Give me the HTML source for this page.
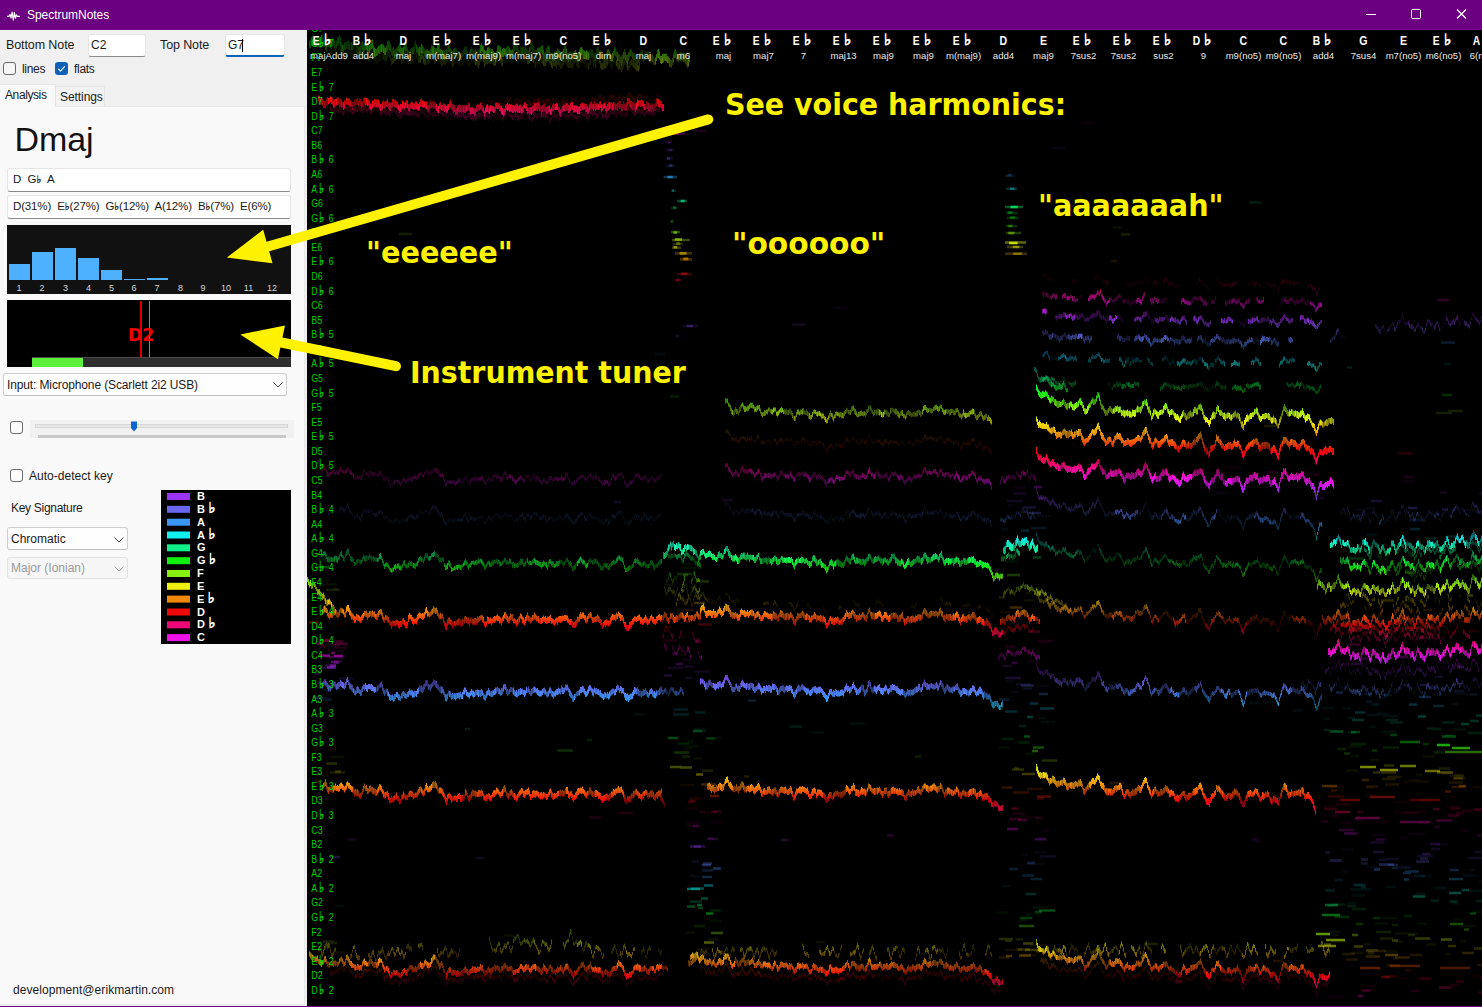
<!DOCTYPE html>
<html lang="en">
<head>
<meta charset="utf-8">
<title>SpectrumNotes</title>
<style>
*{box-sizing:border-box;margin:0;padding:0}
html,body{width:1482px;height:1007px;overflow:hidden;background:#000}
body{position:relative;font-family:"Liberation Sans","DejaVu Sans",sans-serif;font-size:12px;color:#111}
.abs{position:absolute}
#titlebar{left:0;top:0;width:1482px;height:30px;background:#6b0080}
#title{left:27px;top:8px;color:#fff;font-size:12px;line-height:15px;letter-spacing:-0.04px}
#left{left:0;top:30px;width:307px;height:977px;background:#f0f0f0}
#tabbody{left:0;top:106px;width:305px;height:899px;background:#f9f9f9;border-top:1px solid #e8e8e8;border-right:1px solid #e8e8e8;border-bottom:1px solid #e5e5e5}
.lbl{white-space:nowrap;line-height:14px;font-size:12px;color:#1a1a1a}
.tb{background:#fff;border:1px solid #e6e6e6;border-bottom:1px solid #8a8a8a;border-radius:3px}
.tb span{position:absolute;left:2px;top:3px;font-size:12px;line-height:14px;white-space:nowrap;color:#1a1a1a}
.cb{width:13px;height:13px;border:1px solid #6a6a6a;border-radius:3px;background:#f6f6f6}
.cbon{width:13px;height:13px;border-radius:3px;background:#0f62b8}
.dd{background:#fefefe;border:1px solid #cfcfcf;border-bottom-color:#c0c0c0;border-radius:3px}
.dd span{position:absolute;left:3px;top:3px;font-size:12px;line-height:14px;white-space:nowrap;color:#1a1a1a}
.ann{color:#fff200;font-family:"DejaVu Sans Condensed","DejaVu Sans","Liberation Sans",sans-serif;font-weight:bold;font-size:30px;line-height:36px;white-space:nowrap;transform-origin:0 0}
#bottomline{left:0;top:1006px;width:1482px;height:1px;background:#6b0080}
</style>
</head>
<body>
<svg class="abs" style="left:307px;top:30px" width="1175" height="977" viewBox="307 30 1175 977">
<rect x="307" y="30" width="1175" height="977" fill="#000"/>
<defs><linearGradient id="hue" gradientUnits="userSpaceOnUse" x1="0" y1="0" x2="0" y2="1007"><stop offset="-0.0008" stop-color="#3a95f5"/><stop offset="0.0136" stop-color="#10f0f0"/><stop offset="0.0281" stop-color="#10f088"/><stop offset="0.0426" stop-color="#10f010"/><stop offset="0.0570" stop-color="#88f010"/><stop offset="0.0715" stop-color="#f0f010"/><stop offset="0.0860" stop-color="#f08808"/><stop offset="0.1004" stop-color="#f00808"/><stop offset="0.1149" stop-color="#f00878"/><stop offset="0.1294" stop-color="#f010e8"/><stop offset="0.1438" stop-color="#9a35f5"/><stop offset="0.1583" stop-color="#6a66f0"/><stop offset="0.1728" stop-color="#3a95f5"/><stop offset="0.1873" stop-color="#10f0f0"/><stop offset="0.2017" stop-color="#10f088"/><stop offset="0.2162" stop-color="#10f010"/><stop offset="0.2307" stop-color="#88f010"/><stop offset="0.2451" stop-color="#f0f010"/><stop offset="0.2596" stop-color="#f08808"/><stop offset="0.2741" stop-color="#f00808"/><stop offset="0.2885" stop-color="#f00878"/><stop offset="0.3030" stop-color="#f010e8"/><stop offset="0.3175" stop-color="#9a35f5"/><stop offset="0.3320" stop-color="#6a66f0"/><stop offset="0.3464" stop-color="#3a95f5"/><stop offset="0.3609" stop-color="#10f0f0"/><stop offset="0.3754" stop-color="#10f088"/><stop offset="0.3898" stop-color="#10f010"/><stop offset="0.4043" stop-color="#88f010"/><stop offset="0.4188" stop-color="#f0f010"/><stop offset="0.4332" stop-color="#f08808"/><stop offset="0.4477" stop-color="#f00808"/><stop offset="0.4622" stop-color="#f00878"/><stop offset="0.4767" stop-color="#f010e8"/><stop offset="0.4911" stop-color="#9a35f5"/><stop offset="0.5056" stop-color="#6a66f0"/><stop offset="0.5201" stop-color="#3a95f5"/><stop offset="0.5345" stop-color="#10f0f0"/><stop offset="0.5490" stop-color="#10f088"/><stop offset="0.5635" stop-color="#10f010"/><stop offset="0.5779" stop-color="#88f010"/><stop offset="0.5924" stop-color="#f0f010"/><stop offset="0.6069" stop-color="#f08808"/><stop offset="0.6213" stop-color="#f00808"/><stop offset="0.6358" stop-color="#f00878"/><stop offset="0.6503" stop-color="#f010e8"/><stop offset="0.6648" stop-color="#9a35f5"/><stop offset="0.6792" stop-color="#6a66f0"/><stop offset="0.6937" stop-color="#3a95f5"/><stop offset="0.7082" stop-color="#10f0f0"/><stop offset="0.7226" stop-color="#10f088"/><stop offset="0.7371" stop-color="#10f010"/><stop offset="0.7516" stop-color="#88f010"/><stop offset="0.7660" stop-color="#f0f010"/><stop offset="0.7805" stop-color="#f08808"/><stop offset="0.7950" stop-color="#f00808"/><stop offset="0.8095" stop-color="#f00878"/><stop offset="0.8239" stop-color="#f010e8"/><stop offset="0.8384" stop-color="#9a35f5"/><stop offset="0.8529" stop-color="#6a66f0"/><stop offset="0.8673" stop-color="#3a95f5"/><stop offset="0.8818" stop-color="#10f0f0"/><stop offset="0.8963" stop-color="#10f088"/><stop offset="0.9107" stop-color="#10f010"/><stop offset="0.9252" stop-color="#88f010"/><stop offset="0.9397" stop-color="#f0f010"/><stop offset="0.9542" stop-color="#f08808"/><stop offset="0.9686" stop-color="#f00808"/><stop offset="0.9831" stop-color="#f00878"/><stop offset="0.9976" stop-color="#f010e8"/><stop offset="1.0120" stop-color="#9a35f5"/></linearGradient></defs>
<g fill="none" stroke="url(#hue)" stroke-width="1.08"><path d="M324.5 505.5v3m2-0.5v3m1-1v4m3-466.5v7m1-6.5v6m0 456.5v2m1-463.5v6m0 455.5v3m1-466.5v7m0 456v4m1-464.5v6m0 454.5v2m1-461v7m0 450.5v4m1-462v7m0 452.5v3m1-465v8m0 454.5v2m1-467.5v7m0 458v4m1-470v8m0 456v4m2-461v7m2-6.5v6m1-8v8m2-8v8m1-8.5v8m1-7.5v6m1-6.5v6m1-6v7m1-5.5v8m1-7v8m0 453.5v4m1-467v7m0 457.5v3m0 456v3m1-930v8m1-9v7m0 462.5v3m3-2.5v2m6-8.5v2m3-1v3m2-459.5v8m0 448.5v3m1-461v6m0 450.5v4m1-463v8m1-8.5v6m1 458v3m2-458.5v6m1-6v7m1-7.5v7m1-10.5v8m1-7v7m1-6.5v6m1-6.5v6m1-8.5v8m2 456v4m1-4v4m1-5v3m1-2.5v3m1 0v3m1-2.5v4m1-3.5v4m1-3.5v3m1-3v3m1-3.5v4m1-5.5v4m1 456.5v3m1-462.5v2m1-1.5v3m0 456.5v3m1-462.5v4m1-3.5v4m1-3v4m1-6v3m1-3.5v3m1-3.5v3m1-2v3m1-2.5v3m4-466.5v7m2-6.5v8m2-9v7m1-8.5v7m0 916.5v4m1-929.5v7m0 919v3m2-927v7m1 453.5v3m1-7v4m1-4.5v3m1-1.5v3m1-3v4m1-4v3m1-4v2m1-3.5v4m1-455v8m0 444v2m1-1v3m1-1v2m1-2v3m1-461.5v7m5-4v7m12 455.5v2m1-3v4m1-5v3m1-2.5v3m1-2v2m1-2.5v4m1-4v4m1-468.5v7m0 457v3m1-468v6m0 458.5v4m1-467v8m0 456v3m1-464.5v6m0 454.5v4m1-463v7m1-7.5v7m1-7v7m1-7v8m1-7.5v7m0 913.5v4m1-926v7m1-9.5v7m0 452v3m1-464v7m1-4.5v6m1-4.5v7m1-4v7m0 413.5v5m0 490.5v4m1-919.5v6m0 453v3m1-464v7m1-8.5v7m1-8v6m0 454v4m1-464v6m1-4.5v7m2 452v4m1-5.5v3m1-1v3m1-4v3m1-419v5m0 410v4m1-419.5v5m0 411v3m1-2.5v3m1 0.5v3m1-422v6m0 415v3m1-423.5v5m0 415v3m1-424v5m0 413.5v4m1-425v4m0 416v3m1-424v6m0 412.5v3m1-419v4m1 414.5v3m1-2.5v3m1-420.5v5m0 411v4m1-419.5v4m0 410v3m1-418v6m0 408.5v3m1-419v6m0 409v3m1-418.5v5m0 409.5v3m0 459.5v4m1-881v6m0 409v3m0 458v5m1-878.5v4m0 409.5v4m1-406v6m0 397.5v4m1-4v3m0 457v4m1-865v6m0 395v4m1-3.5v4m1-462.5v7m0 450v3m1-460.5v6m0 449.5v3m1-460v7m0 449v4m1-461v6m0 51.5v5m0 395.5v4m1-462v8m0 453v2m1-464v8m0 451.5v4m1-462.5v8m0 451v3m1-461.5v7m0 451v3m1-460v8m1-7.5v8m0 452v3m1-465.5v8m0 457v4m1-470.5v7m0 461v3m1-471.5v6m0 460.5v3m1-468.5v7m0 38.5v5m0 414.5v4m1-466v8m0 35.5v4m1-45.5v6m0 453v3m1-463.5v7m0 452v4m1-463.5v6m1-7v6m0 39.5v5m1-51v8m0 38.5v5m1-50v7m0 35.5v5m1-47v7m1-8.5v8m0 32.5v5m1-45.5v6m0 36.5v5m6 411v3m1-3.5v2m1-456v7m1 446v3m1-456v6m1-6.5v7m0 447v4m1-2v2m1-459v6m1-7v8m0 914.5v4m10-467.5v3m1-2.5v3m1-2.5v4m1-2v3m1-423.5v4m0 417v2m1-3.5v4m1-3.5v2m1-420v4m0 413.5v3m1-420v5m0 410v3m1-3.5v3m1-2.5v3m1-2.5v3m1-0.5v2m1-2.5v4m6-5v4m4-423v5m1-6.5v6m0 417.5v4m3-463.5v8m1 32.5v5m1-47v8m1-11v7m0 33.5v5m1-6v6m1-6v4m1-42v6m0 33.5v5m0 411.5v2m1-456v7m0 30.5v4m1-41v7m0 29v6m1-40v7m0 30v5m1-41.5v7m0 31v6m0 410v4m1-420.5v6m0 406.5v4m1-454.5v7m0 30v6m1-8v6m1-48v8m0 452v4m1-462.5v6m0 453.5v3m1-2v3m1-459.5v7m0 448.5v4m1-4v3m1-459.5v7m0 450.5v3m1-464v6m0 455v3m1-463.5v7m0 454v3m1-2.5v3m1-1.5v4m1-4.5v3m1-2v4m1-1.5v2m1-3.5v3m3-4.5v4m2-464.5v6m0 453.5v4m1-463v8m0 450.5v4m1-460.5v7m0 447v4m0 455v3m1-917v8m1-10v6m1-7v6m1-6v7m4 446v4m0 457.5v5m2-466v4m0 459v4m1-465v3m1-1v4m1 0v4m0 456v4m1-461v2m1-3v4m1-3.5v4m0 458v3m1-463.5v3m0 456.5v4m2-467v3m2-5.5v2m0 458.5v4m1-465v3m2-6v3m2-2.5v3m2-1v4m1-1.5v2m2-426v4m0 418.5v4m1-424.5v6m1-7v6m1-5v5m0 411.5v3m1-422v5m1-4.5v6m0 416v4m1-425.5v6m1-4v6m0 414v4m1-424.5v5m1-3.5v4m0 412v4m1-420.5v4m0 414.5v3m1-421v5m0 414.5v4m1-424v5m0 416.5v3m1-426v5m0 415.5v4m1-427.5v6m0 418v3m1-427v5m0 417v3m1-424v6m0 414.5v3m1-421.5v4m0 414v4m1-4v3m1-2.5v2m27 77.5v3m1-3v3m19 0v3m1-2v3m1-1.5v4m1-2v2m1-3.5v4m1-4v4m1-3.5v3m1-2v4m1-4v3m1-6v4m1-5v3m1-5v3m1-1v3m5-8v2m1-93v4m0 87v3m1-93.5v3m0 88v3m1-93.5v5m0 87v3m2-91v4m0 88v4m1-92.5v3m0 87.5v3m1-3.5v3m2-92v4m0 85v3m1-92.5v2m0 87v4m1-94.5v3m0 86v4m1-90.5v3m0 85v4m1-91v2m0 85v4m1-92.5v3m1-4v4m1-5.5v3m2-2.5v3m1-2v4m1-4v4m2-6v3m1-74v3m1 69v3m3-74.5v2m1-1v4m1-2.5v2m2-4.5v4m3-4.5v3m1-0.5v4m4-2.5v3m1-4v4m1-4v3m1-3v4m1-4v3m1-4v4m1-2.5v4m1-1.5v3m1-4v2m1-5v3m2 68v4m4-0.5v4m1-7v4m2-4v4m1-73.5v4m1-5.5v2m1-3v3m1-3.5v4m1-3.5v3m1-4v4m1-2.5v3m1-3.5v3m1-3.5v4m1-0.5v4m1-1.5v4m1-3.5v3m1-4v3m2-6v3m1-2.5v2m1-1.5v2m1-3v3m2-6v4m3-2v3m1-4.5v4m1-2v2m0 161v4m1-166v4m0 157.5v5m1-2v3m1-2.5v3m1-164.5v3m0 158.5v3m2-168v2m1-2v2m1-1.5v4m1 67.5v4m1-75v3m1 70v3m1-78v4m2-2.5v4m1-3.5v4m1 72v2m0 86.5v4m1-165.5v3m0 70v4m0 86.5v4m1-2v4m1-94v3m0 88v4m1-93.5v2m0 86.5v2m1-3v3m1-96.5v4m1-6v2m1-0.5v4m0 459v4m1-537v3m0 69.5v3m0 458.5v4m1-537.5v3m0 530v4m1-536.5v3m0 68v3m1-3v3m0 456.5v4m1-539.5v4m0 69.5v3m1-74.5v3m0 70v3m0 459v3m1-538v3m0 70.5v4m1-2v4m3-6v4m2-6v3m1-6v3m1-6v4m1-2.5v4m1-75v4m0 67v4m1-73v2m1-3.5v2m1-4.5v4m1-5v3m1-3v3m0 160v2m1-163v3m0 159v3m1-164v4m0 157.5v5m1-3v4m1-165.5v3m0 159v4m1-165v3m0 158v4m1-165v3m0 157.5v4m1-166v4m2-5.5v4m1-4v3m3 70v4m1-78v3m1-6v4m1-6v3m0 69.5v3m1-72.5v2m0 70v3m1-74v4m1-1v4m1-4v4m0 68v4m1-75.5v2m0 70v4m1-77v3m0 158.5v5m1-166v3m0 156.5v3m0 370.5v3m1-376v3m0 369v4m1-377.5v4m1-2.5v3m1-2.5v4m0 371.5v3m1-377v4m0 371v3m1-377v4m1-4v2m0 371v4m3-467v4m1-1.5v3m1-3v3m1-3v3m1-6.5v5m0 458.5v3m1-466v4m1-77v3m1 68.5v4m1-4v3m0 459.5v3m1-2.5v4m1-2.5v3m1-537v3m0 531.5v3m2-536.5v2m1-3v3m1-5v4m1-4.5v2m1 0v4m1-2v2m1 0v4m1-4.5v2m1-5v3m1-4.5v3m1-3v4m1-3.5v3m1-0.5v2m0 160v3m1-166v4m0 159v3m1-165v3m0 159v3m1-167v4m0 159.5v3m1-169v3m0 161.5v4m1-168v4m0 158.5v4m1-167.5v3m1-2v2m1-1v4m1-4.5v4m1-3v3m2-8v4m2 68v3m1-1.5v3m2 0v4m1-3v2m1-4.5v4m3-2.5v3m1-78.5v2m1-2v4m0 68.5v3m1-2.5v4m1-75v3m0 69v4m1-78v4m0 69.5v5m1-79v3m0 69.5v5m1-79.5v4m0 158v3m1-163.5v3m0 70.5v2m0 86v3m1-163v4m0 158v4m1-163.5v4m0 71.5v2m0 85v2m1-89v4m0 83.5v3m1-3.5v3m2-168v3m0 72v2m1-1v2m0 86.5v4m1-168v4m2-2v4m1-3v3m2-3v3m2-4v3m1-4v4m2 1.5v4m0 526v4m2-372.5v4m1-4.5v3m1-4v2m1-3v3m1-163v2m0 158.5v4m1-3.5v3m1-4.5v4m1-3v2m1-3v3m1-166.5v4m2 67.5v4m4-1v3m1 90v3m2-96.5v4m1-76.5v4m6 161.5v4m1-164.5v4m0 158v4m1-3.5v4m1-3.5v4m1-2.5v2m1 1v4m1-3v4m5 370v2m16-476.5v5m1-4.5v4m28-244v4m1-5.5v4m1-3.5v3m1-2.5v3m1-4.5v4m1-1v2m1-0.5v3m1-2.5v3m1-2.5v4m0 73v4m1-81v3m0 75v5m1-83.5v2m0 76.5v3m1-2.5v4m1-4.5v4m1-3v3m1-3v4m1-3v3m0 606.5v4m2-589v3m0 583.5v2m1-1v2m2-593v3m4 0.5v3m1-4v4m5-106v4m1-5v4m1-3.5v4m1-4.5v4m1-3v4m1-4.5v4m1 13v3m1-3.5v4m1-5v4m1-3.5v5m1-5v5m3 258v4m1-4.5v3m2-5.5v5m2-7.5v4m1-7v3m1-5v5m1-276v3m0 267.5v4m1-275v4m1-4.5v4m0 270v4m1-278v3m0 270v4m1-279v3m1-2.5v3m1-3v3m1-0.5v3m0 686v3m1-691.5v4m1-2v3m0 689v3m1-694v2m1 691v4m1-1.5v2m2-595.5v3m0 588.5v3m1-593.5v4m1-5v4m1-2.5v4m0 584v4m1-588v3m0 582v5m1-3v4m13-3v4m1-698.5v4m1-3v3m1-1v3m0 687.5v4m1-695.5v3m1-2v3m1-4.5v4m1-5.5v4m1-2.5v3m1-1.5v2m1-5v4m1-5.5v4m1-4v4m1-3v3m0 226v5m1-234v4m1-2.5v3m1-3v2m0 226.5v4m1-233v2m1-3v3m1-6v3m1-3v2m1-1v3m0 220.5v3m1-224v3m0 221.5v3m1-229v4m9-1v3m2 14.5v5m1-5.5v5m6-8v4m1-1v3m1 57v4m3-2.5v3m2-82.5v4m1-1.5v4m0 75v4m1-81.5v4m0 74.5v3m1-82.5v3m1-2.5v4m1-4v4m1-4.5v2m18-5.5v2m1-5v2m2-0.5v3m2-0.5v3m1-2.5v3m0 693v3m1-698.5v3m0 693v3m1-697.5v3m0 692.5v5m1-701v4m1-2v4m0 695.5v4m1-702.5v4m0 97v4m0 594.5v4m1-703v4m0 96.5v4m1-4.5v3m0 594v3m1-602v5m1-7v5m0 592v3m1-598.5v4m1-3.5v3m2-108v2m1-4.5v5m0 226v3m1-233v4m0 226v4m1-231.5v3m0 226v5m1-233.5v4m0 227v4m1-236.5v4m0 232v3m1-237v4m0 229.5v3m1-1.5v3m1-3v4m1-2.5v4m1-5.5v4m1-6v4m1-4.5v5m1-4v4m3-4.5v3m1-3.5v4m1-4.5v4m1-3v4m1-5v5m6-197v4m3-6.5v5m2-5.5v4m1-41v4m1-3.5v3m1-6v4m1-2v3m1-4v2m3 55v4m1-4.5v5m3-0.5v4m1-60.5v4m7-7.5v4m2-3v4m1-2.5v3m2-3v2m2-2.5v3m2-1v2m2 16.5v5m1-6v3m1-4.5v4m5 305.5v5m1-107.5v5m0 100v5m1-107v4m0 100.5v3m1-105v3m0 98.5v5m1-107v5m2-4.5v4m0 96.5v4m1-105.5v5m1-3.5v4m1-4.5v4m1-3.5v3m0 457v4m2-464.5v5m1-236.5v2m1-1.5v4m0 227.5v3m13 164.5v4m2 301v3m6-328v4m0 317v2m1-318.5v4m0 10.5v4m1-21.5v5m0 13.5v3m1-19.5v4m0 15v3m0 294.5v4m1-318.5v4m0 14.5v5m1-3.5v3m1-2.5v4m1-7.5v3m1-4v3m3-18.5v3m2-6.5v3m1-2.5v4m1-4v4m0 13v3m3-9.5v4m1-348.5v3m0 345.5v5m1-351v5m0 170v4m0 171.5v3m1-351v3m0 346.5v4m1-354.5v3m0 170.5v3m0 172.5v5m1-355v4m0 348v3m1-354v3m0 295v4m1-43.5v5m0 34v3m1-127.5v3m1 81v4m0 32.5v5m3 36.5v3m2-4v3m2-3.5v4m1-155.5v4m1-6v3m1-4v4m1-3v5m4 144.5v3m1-4.5v4m1-62v3m0 56.5v4m1-155.5v3m0 147v4m1-154v4m0 89.5v4m1-97.5v3m0 92v3m1-97v5m0 90v4m1-1.5v5m1-3.5v3m0 22.5v5m1-127v4m0 92.5v4m0 18v4m1-30.5v3m0 23v3m1-32.5v4m4-95.5v4m1-1v4m3 149.5v4m1-2v3m1-5v3m1-346.5v4m0 189.5v2m1-192v4m0 186.5v4m1-194.5v3m0 186v4m0 32v5m0 132.5v3m1-142.5v4m1-41.5v3m0 35.5v4m1-42.5v5m3 160.5v5m1-1v3m1 0.5v5m1-2.5v3m7-35.5v4m1-2v4m0 15v3m1-1v4m1-2.5v4m1-0.5v3m5-20.5v4m1-2.5v3m0 12v4m1-115.5v3m0 32.5v4m0 23.5v4m0 28v4m0 16v5m1-55v3m0 49.5v5m1-121.5v5m0 59v4m0 45v4m1-94.5v3m0 86v3m1-95.5v4m1-3v3m1 0v4m13-91v4m1 120.5v3m1-39v3m0 35v5m1-46.5v5m0 33.5v4m1-45v5m0 34v4m0 31.5v4m1-78v3m0 68.5v3m1-71.5v4m0 67.5v3m1 2v4m1-349.5v3m0 341v5m1-351.5v3m0 344.5v4m1-352v3m0 339.5v2m1-347.5v4m0 341.5v4m1-350.5v4m0 186v3m0 121v3m0 30v4m1-352.5v3m0 309v4m0 27v4m1-160.5v4m0 119v5m0 28v2m1-156.5v4m0 148v4m1-153v4m1-2v4m8 68.5v4m1 0.5v3m0 33.5v5m1-121v4m0 79.5v3m0 33v3m1-39v3m0 32.5v4m1-315.5v5m0 185v3m0 115v3m1-311v3m0 306v4m0 29.5v2m1-343v3m0 341.5v4m1-3v4m3-156.5v2m2-1v3m0 171.5v5m1-182.5v3m0 172.5v4m1-8.5v4m9-20v4m1-165.5v4m0 154.5v4" opacity="0.0625"/><path d="M322.5 511v3m1-6.5v3m2-5v3m3 4v3m1-4v4m1-4.5v4m0 455.5v5m1-4v3m1-3.5v4m1-3v3m1-5v4m1-866.5v5m0 858v4m1-868v6m0 855.5v5m1-865v4m0 857.5v4m1-864.5v5m0 854.5v5m1-5.5v3m1-924.5v8m0 451.5v4m0 455.5v4m1-463.5v4m0 455.5v3m1-917v7m0 449v3m0 457v3m1-463v4m0 456v5m1-463.5v4m0 455.5v4m1-922v6m0 452.5v2m0 457.5v3m1-466v3m0 457.5v3m1-466v4m0 457.5v3m1-461.5v3m0 457v3m1-461v4m0 455v4m1-929v8m0 460v4m0 455.5v4m1-462v2m0 456.5v4m1-1v4m2-501v4m0 37v2m1-43v4m1-433.5v7m0 422.5v4m0 35v2m1-3v4m2-2v4m1-43v3m0 38v3m1-471v7m0 457.5v4m1-466v6m0 454v4m1-463.5v6m0 451v2m1-460.5v8m0 409v4m1-420.5v7m0 411.5v4m0 35v2m1-461.5v8m0 452v4m1-42v4m1 33v4m1 455.5v3m1-501v3m0 495v3m1-500.5v4m0 35v2m0 455.5v5m1-862.5v4m0 399v2m0 455v2m1-920.5v8m0 46v6m0 859v3m1-918.5v6m0 44.5v5m0 402.5v4m0 453.5v3m1-868.5v5m0 363v2m0 38v4m0 453.5v4m1-868v5m0 361.5v4m0 35.5v4m0 456v4m1-869.5v5m0 402v3m1-409v4m0 399v4m1-405.5v5m0 395.5v4m1-4v2m1-40.5v3m0 35.5v4m1-39v3m0 34.5v3m1-463v7m0 456.5v2m1-464v7m0 417v3m1-426v6m0 416v4m1-427v7m0 414.5v4m1-429v8m0 418v4m0 495v4m1-931v8m0 421v5m0 493.5v3m1-927v6m0 424.5v4m0 493v3m1-927.5v6m0 424v3m0 492v4m1-926v7m0 417.5v3m0 496.5v3m1-502.5v3m0 496.5v3m1-504v4m0 495.5v4m1-5v3m1-873.5v5m0 404v4m1 456v4m1-929v6m1 921v4m1-935v8m0 925.5v5m1-934.5v6m0 922.5v3m1-927.5v7m0 915v4m1-927v8m0 914v3m1-926v7m0 916v4m2-3v4m1-929.5v6m0 459v4m0 456.5v5m1-928v6m0 455v4m0 458v3m1-926v8m0 451.5v3m1-3.5v3m0 456v4m1-921.5v7m0 412.5v4m0 33.5v3m0 457.5v4m1-463v3m0 459v5m1-926v7m0 451.5v4m0 459.5v4m1-466v3m0 458.5v4m1-465v3m1-2v2m1-467v6m0 456.5v4m0 457v5m1-467v4m1-462.5v8m1 47.5v5m1-7.5v6m0 857v4m1-867v6m0 860.5v3m1-869.5v5m1-3v4m1-3.5v5m1-4v4m0 354v4m1-361.5v5m0 352v3m1-415.5v6m0 51.5v5m0 350v4m1-416v7m0 50v6m1-65v8m0 48v5m0 354v5m0 495v4m1-863.5v5m0 354.5v4m0 35v4m0 455.5v3m1-919v7m0 50v5m0 355v5m0 32v3m1-460v6m0 56v5m0 353v4m0 31.5v4m0 454.5v4m1-913.5v6m0 406.5v4m0 34.5v3m0 455.5v3m1-911.5v8m0 442v3m0 456v3m1-855.5v4m0 389.5v4m1-453.5v6m0 50v5m0 390.5v3m1-458.5v8m0 53.5v4m0 390.5v4m0 456.5v4m1-921v8m0 450.5v4m1-459.5v7m0 451v3m1-459.5v8m0 45v6m0 398v4m0 456v4m1-917v6m0 45.5v4m0 397v3m1-457.5v8m0 448v3m0 456.5v3m1-919v7m0 48v4m0 400.5v4m1-464.5v8m0 47.5v5m0 403v4m0 455v3m1-924.5v8m0 48v4m0 403.5v4m0 457v3m1-929v7m0 50v5m0 404v4m0 455.5v4m1-931.5v8m0 51v5m0 862.5v3m1-930v6m0 53v4m1-64v8m0 49v5m1-58.5v6m0 48.5v5m0 859.5v5m1-922.5v7m0 47.5v5m0 860v5m1-922v8m0 43.5v6m1-59.5v8m0 47.5v4m0 833v4m0 22.5v5m1-868v4m0 833v3m0 23.5v4m1-868.5v5m0 833v3m0 25v3m1-867.5v4m0 859.5v4m1-931.5v9m0 896v4m0 19v5m1-466v4m0 457v5m1-505v4m0 36.5v2m0 426.5v5m0 26v4m1-930v8m0 417v5m0 35.5v4m0 456v4m1-502v5m0 33.5v4m0 458.5v3m1-503v2m0 35v3m1-471.5v7m0 423v3m0 32.5v3m0 460.5v3m1-504v3m0 495v3m1-503v4m0 33.5v3m0 458v4m1-502v4m0 36.5v3m0 455.5v3m1-498.5v3m0 35.5v3m0 455.5v3m1-925.5v7m0 459v3m1-40.5v4m0 489.5v3m1-463v4m0 455.5v3m1-462.5v4m0 455.5v3m1-3.5v3m1-461v4m1-2.5v3m1-45v3m0 37.5v3m3-469.5v8m4 41.5v4m1-3.5v5m2 376v3m1-4.5v4m1-6v3m1-5v4m1-2.5v4m0 34v4m1-420.5v5m0 10v4m0 360.5v3m1-381.5v4m0 9.5v6m0 359v3m1-368v4m0 856.5v5m1-863.5v6m0 854v4m1-865v4m0 857.5v4m1-866.5v4m0 357.5v3m0 497v3m1-867v4m1-2.5v4m1-65.5v7m0 54v6m0 857v3m1-876.5v5m0 868v5m1-878.5v5m0 7v6m1-16.5v6m0 867.5v5m1-878.5v5m0 9v5m0 853v3m1-874v4m0 9v4m0 851.5v4m1-875v5m0 7.5v5m0 852v3m1-874.5v5m0 8.5v5m0 853.5v4m1-877v4m0 872v3m1-881v6m0 9v5m0 860.5v3m1-881.5v4m0 9.5v6m0 859v2m1-881v5m0 10.5v4m1-19.5v6m1-3.5v4m0 411v2m1-414.5v5m1-5v5m1-8v5m1-6.5v5m2 416v2m1-421.5v4m0 872v4m1-880.5v5m1-4.5v6m0 409v3m0 457v4m1-863.5v5m0 393.5v4m1-403.5v5m0 393.5v4m0 458v4m1-866.5v6m0 397v4m0 459v3m1-883.5v4m0 9v4m0 402.5v3m1-410v6m0 401v4m0 456v3m1-868.5v6m0 396v3m0 458.5v3m1-879.5v5m0 8.5v4m0 397.5v3m1-417v6m0 8.5v5m0 394v4m0 457.5v4m1-879v6m0 371.5v3m0 35v2m0 457.5v5m1-864v5m0 358.5v3m0 34v4m0 456v4m1-877.5v6m0 368.5v4m0 34v4m1-43v3m0 494.5v4m1-878.5v5m0 371.5v3m0 496.5v3m1-929v7m0 417.5v5m0 33.5v2m0 459v5m1-916v6m0 31.5v5m0 372.5v4m0 492v5m1-879v4m0 409v4m0 458.5v4m1-880.5v6m0 872v4m1-922v6m0 49.5v4m0 860.5v3m1-883v6m0 7.5v4m0 400.5v4m0 458.5v4m1-883.5v5m0 413.5v3m1-465.5v8m0 35.5v5m0 413.5v3m0 457v4m1-925.5v8m0 35.5v4m0 412v4m0 457.5v4m1-881.5v5m0 409.5v4m0 458v4m1-879.5v4m0 374v3m0 34v2m0 459v4m1-463v4m1 0v2m1-425.5v5m0 9v6m0 403v2m1-409v5m0 399.5v3m1-422v6m0 412v3m1-402v5m1-24.5v6m1-7v4m1-5v5m0 11.5v5m1-59.5v8m1 30.5v6m1-4.5v4m1-44v6m1 50.5v6m0 853.5v5m1-920.5v8m0 35.5v4m0 10.5v4m0 854v3m1-916.5v7m0 34v5m0 7.5v4m0 855.5v3m1-914.5v6m0 30.5v6m0 8v4m0 857v4m1-917.5v6m0 45v4m0 858v3m1-877.5v5m0 8v5m0 857.5v4m1-923.5v7m0 38v5m0 7.5v5m0 398.5v2m0 457.5v2m1-922.5v8m0 35.5v5m0 9.5v6m0 394.5v4m0 455v4m1-919.5v7m0 35v6m0 9v4m0 394.5v4m0 455v4m1-917v8m0 33v5m0 6v5m0 398v4m0 455v4m1-917v8m0 33.5v4m0 371.5v3m0 35v4m0 456.5v5m1-920.5v8m0 33v5m0 7.5v4m0 860.5v5m1-923.5v8m0 32.5v5m0 376v3m0 33.5v3m0 458.5v3m1-920v6m0 30v5m0 378.5v5m0 33.5v3m0 458.5v3m1-923v7m0 30v4m0 418v3m1-465.5v8m0 455v4m1-468.5v6m1-5.5v6m0 34v5m0 378.5v4m0 34.5v5m1-464.5v7m0 30.5v5m0 416.5v4m1-423v6m0 10v4m0 397v4m1-459.5v7m0 48v6m0 392v4m1-418.5v5m0 9v6m0 395v3m1-405.5v4m0 396.5v4m1-462v8m0 449.5v3m1-459v7m0 449v3m0 432v4m1-2.5v4m1-437.5v4m1-2v4m1-2.5v3m2-458.5v7m0 404v4m1-5v4m0 36v2m1-466v9m0 0.5v7m0 448v4m1-420v5m0 372.5v4m0 492v4m1-878v6m0 373.5v4m0 493v4m1-926v8m0-1.5v8m0 409v5m1-382v4m0 374.5v3m0 495v3m1-915.5v6m1 30.5v5m1-5.5v6m0 372.5v4m0 494.5v3m1-881v4m0 375v5m1-386v6m1-6v5m1-6v6m0 878.5v4m1-886v4m1-5v6m1-4.5v5m0 876.5v3m1-881.5v4m0 415.5v3m0 455.5v2m1-919v6m0 33.5v4m0 413.5v3m1-419v4m1-48.5v6m0 34.5v4m0 419v4m0 455v2m1-886.5v4m0 880v5m1-890.5v6m0 10v4m0 862v4m1-885v4m1-4v4m0 11.5v4m0 399v4m0 455v4m1-882v6m0 414.5v3m0 455v3m1-881.5v6m0 414.5v4m0 454v4m1-880.5v5m0 10.5v5m0 398v3m0 427.5v4m0 24v3m1-879.5v6m0 9.5v6m0 395.5v2m0 457v4m1-879.5v4m0 10.5v6m0 394v3m0 438v4m0 15.5v4m1-881v5m0 410.5v3m0 440.5v4m0 13.5v3m1-879v5m0 8v6m0 356.5v5m0 476.5v3m1-892v6m0 25v5m0 373v3m0 34v4m0 459v4m1-912.5v8m0 24v5m0 9.5v5m1-52.5v7m0 25.5v5m0 9.5v6m0 358.5v3m0 497v5m1-920.5v8m0 28.5v5m0 9.5v4m0 863v3m1-922.5v7m0 31.5v5m0 11v4m1-58.5v7m0 31v5m0 12v6m0 363.5v4m0 497.5v3m1-926.5v7m0 29v4m0 882.5v3m1-892v5m0 10v6m0 368.5v4m1-423v6m0 22.5v4m1-35.5v7m0 23.5v4m0 425v4m0 457.5v2m1-923.5v6m0 25.5v5m0 882.5v3m1-889.5v6m0 420v3m0 457.5v4m1-924v7m0 27.5v5m1 878v3m1-465v2m0 458v3m1-881v5m0 370.5v4m0 496v4m1-881v5m0 414v4m0 454v3m1-881v4m1-5.5v4m0 417.5v3m0 458v4m1-886.5v5m0 878.5v4m1-888v6m0 878.5v3m1-886.5v5m0 418.5v4m0 428v5m0 23.5v3m1-4v4m1-504v2m0 37.5v2m0 457.5v4m1-467v4m0 432v4m0 22v3m1-4v5m1-502.5v3m0 36v4m0 456v3m1-500.5v5m0 495v3m1-463v3m0 455.5v4m1-501.5v3m0 495v3m1-503v3m0 35.5v3m0 456.5v4m1-503v3m0 496.5v4m1-504v4m0 497.5v4m1-3.5v5m1-872v5m0 861.5v3m1-871v5m0 863v3m1-873v5m0 366v3m0 495v4m1-503.5v4m0 494.5v4m1-503v4m0 468.5v3m0 21v4m1-500.5v3m0 470.5v4m0 20v3m1-502v3m0 473.5v5m0 16v4m1-502v3m0 472.5v5m0 18.5v3m4-387.5v5m1-15v5m0 8v5m1-18.5v4m0 7.5v5m0 34v4m1-58v5m0 49.5v4m1-4v4m1-2v4m3 11v4m1-74v4m1-4.5v4m0 14v3m1-21v5m0 10v3m1-22v5m0 10v4m3 55.5v4m1-53.5v3m0 49v4m2-3.5v3m1-1v4m1-72.5v3m1 0.5v4m1-0.5v5m2 2.5v3m1-7.5v3m0 3v4m1-12v3m1 9.5v4m1-9v4m1-7v3m1-6v5m2 50.5v3m2-12v3m1 327.5v3m1-379.5v4m0 369v4m1-377v4m0 368.5v3m1-376v4m0 370v3m1-1v2m2-372.5v4m1 367.5v4m1-5.5v3m1-1v4m2-2v3m1-3v5m2-6.5v4m1-1.5v3m1-2.5v4m1-6.5v3m1-4.5v3m1-4v4m1-2.5v3m1-2v4m1-5v4m2-8.5v3m1-538.5v4m0 68v4m1-76v3m1-3.5v4m1-2.5v4m1-1.5v3m0 70v4m0 86v4m0 367v4m1-536.5v2m1 0.5v4m1-4v4m0 70.5v2m1-76.5v3m0 71.5v4m0 85v3m1-165.5v3m1-2.5v3m1-4v4m1-1.5v3m1-3.5v4m1-3v2m1-5.5v4m1-4.5v3m1-4v3m0 69v4m1-75.5v3m1-2.5v4m1-3.5v4m0 530v5m1-536v3m0 66.5v3m1-75.5v4m1 68v4m1-75.5v3m1-2.5v4m0 67.5v3m1-76.5v4m0 68.5v4m2-3.5v4m1-2v4m1-75.5v2m2-6.5v4m0 68.5v4m1-76v3m1 70v4m2-72v4m0 67.5v4m1-75v4m0 67.5v3m1-75.5v4m0 67v4m0 87v4m0 368v3m1-465.5v4m0 457.5v3m1-464v4m0 85v4m0 367.5v3m1-462v2m0 86v4m0 368.5v4m1-466v4m0 85v3m0 369v5m1-466.5v4m0 86.5v3m0 368.5v4m1-465v3m0 458.5v4m1-464v3m0 458.5v4m1-466.5v5m0 457.5v4m1-31.5v4m0 23.5v4m1-469v4m0 460v3m1-539v3m0 69v2m0 87.5v4m0 369.5v3m1-537.5v3m0 534v2m1-537v4m0 66v4m0 88.5v2m0 370.5v4m1-537.5v4m0 66.5v4m0 460v4m1-539.5v2m0 71.5v4m0 459.5v3m1-543v4m0 534v2m1-541v5m0 531v4m1-539v3m0 69v3m0 461v4m1-539.5v3m0 531.5v4m1-466.5v4m0 458.5v3m1-463.5v3m0 457.5v4m1-465v4m0 458.5v2m1-464v3m0 458.5v3m1-464v4m0 459.5v3m1-466.5v3m0 458.5v4m1-466v4m0 85v2m0 370.5v3m1-464.5v4m0 85.5v2m0 369v3m1-463.5v4m0 85.5v4m0 367.5v3m1-461v2m0 86v3m0 368.5v4m1-462v4m0 84.5v4m1-93v5m0 86v3m1-93.5v4m0 86v3m0 367.5v3m1-540v4m0 69.5v3m0 87.5v3m0 369.5v2m1-465.5v3m0 84.5v5m2-93v3m1-3.5v3m0 458.5v4m1-539.5v3m0 71.5v3m1-5.5v4m0 459.5v3m1-540.5v3m0 71v4m0 459.5v2m1-537.5v3m0 71.5v2m1-3v4m0 458v4m1-465v4m0 457v4m1-466v4m0 458v3m1-463.5v4m0 459v3m1-536v2m0 68.5v5m0 457.5v4m1-537v2m0 70v3m0 458v4m1-464v3m0 457v3m1-538.5v4m0 70v3m0 457.5v4m1-468v2m0 460v3m1-466v4m1-3.5v3m1-71.5v3m1 68.5v4m1-78v3m1 72.5v2m1-76.5v2m0 70v5m1-3v3m1-2v3m1-76.5v4m1 530.5v4m1-534.5v4m0 68.5v3m1-74v4m0 529v4m1-537v4m1-7v4m0 69.5v4m1-77.5v3m1-5v3m0 531.5v4m1-538v3m2 71.5v3m1 458v3m1-538.5v3m1 531v4m2-374v2m1-166v3m0 158.5v4m1-165.5v4m0 69v3m0 86v2m1-163.5v4m0 66.5v4m0 87.5v2m1-164.5v4m1-3.5v2m0 71.5v4m0 455v4m1-538.5v2m1-5v3m1-5v3m1-1.5v3m2 71.5v5m1-6.5v4m1-5.5v3m0 460v3m1-467v4m2 459.5v3m2-536v3m2 71.5v3m3-78.5v4m3-2.5v4m1-2.5v2m0 69.5v4m1-77.5v4m1 66v4m1-6.5v3m3 0.5v4m1-2.5v4m2 457v5m1-466.5v4m0 459v2m1-466.5v4m1-75v3m0 70v3m1-76v3m0 68v4m0 459v3m1-536.5v3m0 69.5v4m0 458v3m1-537v4m0 69v3m1-74.5v4m0 68.5v4m1-76.5v4m0 70v3m0 459v3m1-540v5m0 68v3m1-77.5v5m0 68v4m0 459v2m1-538.5v4m0 69v3m0 459.5v2m1-537.5v4m0 530.5v5m1-537v2m0 532v3m1-537v4m0 531v3m1-538.5v3m0 533v2m1-539.5v4m1-3.5v2m0 532v2m1-465v4m0 456.5v4m1-535v3m0 528.5v4m1-535v3m1-3.5v3m0 68.5v4m1-75v3m0 69v3m1-1.5v4m1-76v4m0 69v3m0 460v3m1-467.5v3m1-2v3m1-3v2m1-2.5v2m0 460.5v4m1-466v4m1 0v3m1-3v5m1-4.5v3m1-7.5v4m1-6v4m0 459v4m1-466.5v3m1-2v4m0 457v4m1-463.5v3m1 457v3m1-465v4m0 458v3m1-465v4m1 458v4m1-466.5v4m0 457v4m1-465v3m0 457v3m1-464.5v3m0 459.5v3m1-464.5v3m1-2v4m0 459v3m1-466v4m0 458v4m1-542v4m1 67v4m1-78.5v4m0 67.5v3m0 459v5m1-538.5v4m0 530.5v3m1-534.5v3m1-4v4m0 70v4m0 457v5m1-539v2m0 532.5v4m1-539.5v3m0 531.5v4m1-539.5v3m0 532v4m1-537.5v3m0 72.5v2m0 458.5v3m1-538.5v3m0 70v4m0 459v3m1-539.5v4m0 530.5v4m1-465v4m0 457v4m2-537.5v4m0 530v5m1-3v3m1-28.5v3m0 20v4m1-5v4m1-466v3m0 459v3m2-462v3m0 433v5m1 23.5v3m1-538.5v4m0 509v4m1-516.5v2m0 71v3m0 459.5v4m1-542.5v3m0 71.5v3m0 86v4m0 348v4m1-355v3m0 343v3m0 23v4m1-541v4m0 532.5v5m1-465v3m0 84.5v3m0 371.5v3m1-540.5v4m0 72.5v3m0 85v4m0 368.5v2m1-463v4m0 456.5v3m1-463.5v4m0 456.5v3m1-536.5v4m0 69.5v4m0 455.5v5m1-465v3m0 459.5v3m1-538.5v3m0 70v3m0 458.5v2m1-5v4m1-465v3m0 458v2m1-533v3m0 529v3m2-530.5v4m0 526v5m1-536v4m0 68.5v4m1-77.5v3m0 68.5v4m1-77v2m0 70v3m1-77v4m0 70.5v4m1-2.5v4m0 456v3m1-537.5v3m1-3.5v3m1-3.5v4m0 68v4m1-75v3m0 69.5v3m0 435v4m1-443.5v3m0 436.5v3m1-517.5v4m1-4v3m0 503.5v5m1-512.5v4m0 68.5v4m0 430v5m0 22.5v5m1-537.5v3m0 70v3m0 433.5v3m1-508.5v3m0 67.5v4m1-72v3m0 531v4m1-538v2m0 66.5v5m0 460v4m1-539v2m0 67.5v5m0 87.5v3m0 370v3m1-540v3m0 159.5v3m0 370.5v3m1-465.5v2m0 88v3m0 368v4m1-536.5v3m0 69v4m0 457.5v4m1-535v4m0 67.5v3m0 460v4m1-538v4m0 66.5v4m0 461v4m1-540v3m0 530.5v4m1-538.5v3m0 69v4m0 458v3m1-537.5v3m0 70v4m0 458.5v3m1-466v3m0 460.5v4m1-537.5v3m0 67.5v4m0 460.5v4m1-537.5v3m0 67.5v2m0 461v3m1-536.5v4m0 531.5v3m1-536v3m0 69.5v3m0 460.5v4m1-3.5v4m1-0.5v3m1-5v4m1-6v4m1-3v3m2-2v3m1-3v4m2-341v3m7-69v4m3-115v4m0 35.5v5m1-4v3m1 72v4m1 56.5v5m3-146v3m12-35.5v3m0 35v3m3-45.5v4m2 38v4m1-3v3m1 430v4m1-5v3m1-3.5v5m1-3.5v3m16 12.5v4m1-2v3m2-0.5v3m2-591.5v3m1-4.5v4m0 584.5v4m1-469.5v3m0 463v2m1-593.5v4m0 585v4m1-592.5v5m0 584v4m1-591.5v5m0 584v3m1-1.5v4m1-466v4m0 458.5v3m1-592.5v3m0 585v4m1-5.5v4m1-3.5v3m1-27v5m0 20.5v3m1-27v4m0 20.5v3m1-27v4m0 19.5v4m2-25.5v3m0 17.5v3m1-24v4m1-1.5v5m0 14v4m3-4.5v3m3 0.5v4m1-1v5m1-3.5v5m2-425v5m0 412v4m1-4v3m1-421.5v4m1 412.5v3m1-8v5m1-5v3m1-4v4m1-420v4m2 410v3m1-422v3m1-50.5v5m0 42.5v3m0 414.5v3m1-464.5v3m0 458.5v4m1-464v5m1-3v5m0 459.5v4m1-465v3m1-1v3m0 459v3m1-693.5v3m0 227.5v5m1-234.5v3m0 228v5m1-238v4m0 230.5v3m0 457.5v4m1-698v4m0 229v3m1-235.5v4m0 227v5m0 456.5v4m1-467v4m0 458.5v4m1-466v3m0 41.5v5m1-48.5v4m1-4v4m0 42v4m1-5v3m1-49v4m1 39.5v4m0 414v3m1-423v3m0 414v4m1-421v4m1-4v3m0 415v3m1-659v4m1-3.5v5m0 652v3m1-678v3m0 17v4m1-22v4m1 675v4m1-4v2m1-681.5v4m1-3.5v3m0 672v3m1-678v5m0 54.5v5m0 611v4m1-620.5v5m1-61.5v4m0 57.5v3m0 612v4m1-680.5v5m0 671v3m1-679v4m0 55.5v4m0 609.5v4m1-679.5v5m0 670.5v3m1-678.5v5m1-4v5m1-5.5v4m1 671v4m2-422v4m0 412.5v3m1-616.5v3m0 148.5v4m1-5v5m1 456v3m1-465v3m0 456.5v4m1-467v5m1-6.5v4m1-6v3m0 459.5v4m1-3.5v3m1-656.5v5m0 652.5v3m1-658v5m0 189.5v3m0 459.5v3m1-658.5v4m0 191.5v4m1-198.5v4m0 193v4m1-198v4m0 192v5m1-201.5v6m0 190v5m1-238v3m0 35v4m0 651v5m1-700.5v4m0 33v5m0 190.5v5m0 457v4m1-698.5v4m0 228.5v4m1-235.5v4m1 231.5v3m1-2v3m0 457v4m1-465.5v4m0 97v4m0 355v3m1-464v4m0 97v4m0 355v4m1-680v5m0 311.5v5m0 354.5v3m1-679v5m0 309.5v5m0 355.5v3m1-697v4m0 14.5v5m0 309v4m0 356v3m1-696v4m0 14.5v5m0 52.5v5m0 612.5v2m1-697v3m0 17v3m0 309v5m0 357.5v4m1-699v4m0 74.5v3m0 251.5v4m0 359v3m1-696v3m0 74.5v4m0 611v3m1-693.5v3m0 327.5v5m0 356.5v5m1-696.5v4m0 75.5v3m0 250.5v4m0 357.5v3m1-699v3m0 77.5v4m0 250v5m0 357v4m1-701v4m0 100.5v3m0 228v4m0 356v3m1-697v4m0 73v4m0 253.5v5m0 354v4m1-618.5v3m0 612v4m3-618.5v3m3 615v5m2-6v2m1-5v4m1-4v3m1-3v3m1-594.5v4m0 588v4m1-462.5v4m0 426v5m0 25.5v2m1-595.5v5m0 128.5v4m0 97v5m0 322.5v5m1-434v4m0 42v3m0 410.5v3m1-361.5v3m0 322v5m0 29v4m1-38.5v5m0 29.5v4m1-3.5v3m1-597.5v5m0 588v3m1-5v4m1-620.5v5m0 585.5v4m0 21v5m1-619.5v5m0 20.5v4m0 121.5v5m0 98.5v5m0 354.5v4m1-695.5v2m0 689.5v4m1-615.5v3m0 145v4m0 459.5v4m1-618.5v3m0 589.5v4m0 15.5v3m1-696.5v5m0 75v3m0 22.5v3m0 583v5m1-617.5v5m0 21v5m0 583v4m1-694v2m0 74.5v4m0 20.5v5m0 586v4m1-594v5m0 588.5v5m1-595v3m1 0v3m1-5.5v3m1-48v4m0 42v4m0 592v4m1-599.5v4m1-49v5m1 639v4m2-11v4m2-5v3m1-619v3m0 582.5v3m0 27v4m1-33.5v5m0 22v3m1-26.5v4m0 16.5v4m1-27.5v5m0 18.5v3m1-27.5v4m0 19v4m1-28.5v5m0 22v3m1-31v4m0 25v2m1-31v5m0 25v3m1-1v3m1-697v4m0 690.5v3m1-697.5v3m0 692v3m1-699v4m0 691v4m1-4v4m1-698.5v4m0 690v3m1-698.5v3m1 694.5v3m1-699v4m0 229v5m0 423v3m0 31v5m1-698v3m0 226.5v5m1-236.5v4m0 662v3m1-1.5v4m1-3v4m0 20.5v3m1-697v2m0 693v3m1-698v2m0 661v4m0 27v3m1-699.5v3m0 233.5v4m0 423.5v4m0 28.5v4m1-463.5v4m0 426.5v3m0 29v2m1-661.5v4m0 194.5v5m0 426v3m1-631v5m0 624v3m0 28v4m1-663.5v3m0 627v5m0 27v5m2-666v5m1-5v5m0 657v4m1-6v3m1-667v5m0 656.5v5m1-5v2m1-466.5v5m0 458v4m1-5v4m1-6v4m1-466v5m0 456.5v4m1-5.5v4m1-697.5v3m0 55.5v5m0 630.5v4m1-696v4m0 52.5v5m0 630v5m1-695.5v4m0 685.5v5m1-696.5v3m0 689.5v4m1-695.5v2m0 54.5v5m0 271.5v5m1-336v2m0 52v4m1-58v3m0 333.5v4m3-7.5v5m2-4.5v4m0 353.5v5m1-3.5v3m1-3v5m2-699.5v3m3-0.5v3m0 693.5v4m1-5.5v4m1-700v3m0 695v3m1-364v5m0 357v3m1-701.5v3m0 336v4m0 355v2m1-358.5v4m0 355.5v2m1-701v3m0 338v5m0 353.5v4m1-701.5v4m0 694.5v4m1-704.5v2m0 337v4m0 354.5v3m1-703v2m0 694v4m1-704.5v4m0 16v4m0 259v4m0 51v3m0 356v3m1-680.5v5m0 311.5v5m0 352.5v3m1-695.5v2m0 14v5m0 310.5v5m0 353.5v4m1-695.5v4m0 328v5m0 354v3m1-692.5v3m0 688v3m1-693.5v3m0 690v3m1-695.5v2m0 693v3m1-699v4m0 278v5m0 409.5v4m1-698.5v3m0 332v3m0 326.5v4m0 25v4m1-698.5v4m0 230v4m0 95v5m0 355.5v3m1-697.5v3m0 690.5v3m1-696v3m0 690v4m1-695.5v4m0 11.5v5m0 644.5v4m0 23.5v3m1-696v4m0 661.5v3m0 25v3m1-694.5v2m1-4v2m0 231.5v4m0 456v2m1-695v3m0 690.5v3m1-463v4m0 457v2m1-678.5v3m0 675v3m1-3.5v3m1-297.5v4m0 288v2m1-594v3m0 588v3m1-678.5v4m0 378.5v4m0 289.5v4m1-679v4m0 81.5v5m0 585.5v5m1-679.5v5m0 80.5v5m0 587v4m1-681v4m0 316v4m0 355.5v2m1-697v3m0 11v5m0 315.5v5m0 58v5m0 291.5v2m1-683v4m0 261.5v4m0 412v3m1-700.5v4m0 14v5m0 259v3m0 52.5v5m0 354v4m1-699v3m0 393.5v3m0 297v4m1-699v3m0 392v4m0 296.5v3m1-361.5v5m0 355v4m1-361.5v4m0 355v3m1-358.5v4m1-344v4m0 339.5v4m0 354.5v4m1-359.5v4m0 353v5m1-7.5v4m1-706.5v4m0 695.5v3m1-703.5v3m0 695v3m2-3v2m1-2.5v3m2-4.5v4m1-3v3m1-3.5v5m1-4.5v3m1-5v3m1-317.5v4m0 308.5v4m1-312v3m2-7.5v3m4 12v5m1-26v3m0 14v4m2-20v3m2-153.5v3m2-7.5v4m0 121v4m1-128v4m0 151.5v4m1-155v3m0 32.5v4m0 114.5v4m1-126v3m0 46v3m0 6.5v3m0 25.5v3m0 27.5v4m1-160v4m0 33.5v4m0 56.5v3m0 56.5v2m1-120v3m0 54.5v4m0 55v5m1-119v5m0 55.5v3m0 58.5v3m1-157.5v4m0 90.5v4m1 58.5v3m2-5.5v3m1-37v5m1 31v4m1-41v3m0 30v4m2-4v4m1-1v3m1-1.5v3m1-7.5v3m4-65v4m4-91.5v3m1-1.5v4m2-12.5v3m1-4.5v4m0 84v3m1-90v3m0 153.5v5m1-160v4m1-2.5v3m1 37v4m1-4v5m1-3.5v3m1-2.5v4m0 79v3m1-87v3m0 80v3m1-4.5v3m3-83v4m0 133.5v5m2-181.5v4m0 170.5v4m1-6v4m1-22.5v4m1-350v3m0 186.5v3m0 153.5v4m0 12.5v4m1-368.5v3m0 183.5v5m0 155v4m1-164.5v3m1-0.5v3m0 119v4m1-122.5v3m0 118.5v4m0 29v3m1-155v3m0 117.5v5m0 30.5v4m1-162v3m0 118.5v4m0 29.5v4m0 13.5v5m1-143v3m0 83.5v4m0 28.5v4m0 15.5v4m1-143.5v4m0 82v3m1-127v3m0 34.5v3m0 55v3m0 24v4m1-319v4m0 187.5v4m0 33v3m0 54v3m0 24v4m1-319v3m0 185.5v4m0 35.5v3m0 54.5v3m0 24.5v4m1-128v4m1-193.5v4m0 185.5v3m1 0.5v4m0 152.5v4m1-346.5v3m0 185.5v5m0 152.5v4m1-164v3m0 57v4m0 94.5v4m1-351v5m0 185.5v3m0 55v5m1-25v5m0 17v4m1-24v5m0 40v3m1-47v5m0 14.5v5m0 21.5v4m1-49v5m0 40v3m1-27.5v4m2 0.5v5m0 31v3m1-2.5v3m1 19v5m1-8v5m0 45v3m1-174v4m0 116.5v3m1-311.5v4m0 185.5v3m0 119v4m1-314v4m0 186v3m0 171.5v3m1-178v4m0 172.5v3m1-176.5v3m0 51.5v3m1-58.5v5m0 115v3m1-122.5v4m0 116.5v5m1-125.5v3m0 118.5v4m1-128.5v3m0 116v4m1-124.5v3m1-6v4m1-5v5m1-3.5v3m1-2v4m2-3v2m0 171.5v3m6-172v3m0 79v5m1-86v3m1-7.5v4m0 120.5v4m1-129.5v3m0 120.5v3m1-128v3m0 121.5v4m2-131v4m2 80v3m2 1.5v4m2-5v4m2 64.5v4m4-163v3m1-190v4m1-0.5v4m1-5v3m0 187v3m1 149v3m1-159.5v4m1-3v4m0 171.5v4m1-3v3m1-1.5v3m1-3v3m1-4v3m1-174v3m3-12.5v4m1-7v4m0 172.5v3m2-365.5v4m1 358.5v3m1-81v4m0 73.5v4m1-115.5v3m0 34v5m0 71.5v3m1-77v4m0 74v4m1-176v3m0 56v4m0 31v5m0 57.5v4m0 13.5v3m1-179v4m0 89.5v4m0 75v5m1-86v4m0 73.5v3" opacity="0.125"/><path d="M322.5 34.5v7m0 428.5v3m1-7v4m2-427v7m0 416v3m2-428.5v7m3 58v5m1-5v6m1-4v6m1-4.5v5m0 356.5v4m1-366.5v6m0 356v4m1-431v7m1 420v4m3-366v5m0 356.5v4m1-366v5m1-4v5m0 353.5v5m1-361v4m1-4v5m0 354v3m1-364.5v5m0 357v4m1-432.5v8m0 55v5m1-68v7m0 56.5v4m1-68.5v8m1-9v9m0 57v5m0 356.5v4m1-429.5v8m0 419v5m2-365v5m1-70.5v7m1-9.5v8m0 60v5m1-74.5v7m0 930v2m1-942v9m1-7.5v9m0 60v5m0 862v4m1-935.5v7m0-1.5v8m0 419v4m0 493.5v5m1-931.5v7m0-2.5v8m0 48v4m0 365.5v3m0 493.5v4m1-925v8m0 47.5v4m0 365.5v3m0 494.5v5m1-927v6m0 49v5m1-70v8m0 425v5m1-7v4m1-8v3m1 495.5v4m2-499v3m1-422.5v6m0 49v5m0 857.5v2m1-919v8m0 44v5m0 363v4m1-371v5m0 359.5v3m2-364.5v5m1 357.5v5m1-5v4m1-4v3m3-1.5v3m1-3.5v3m1-5.5v4m1-4v5m0 493v3m1-2.5v3m1-862.5v5m0 858.5v2m1-867v5m0 364.5v3m1 472.5v4m1-846.5v6m0 839.5v5m1-851.5v6m1-4.5v4m2-5v6m1-4.5v5m1-69.5v8m0 53.5v5m1-55.5v6m0 43v5m1-55v6m0 43.5v6m1-58.5v7m0 46v6m1-59v7m0 418.5v3m1-429.5v7m0 49v6m0 364.5v2m1-370.5v6m1-64.5v7m0 53v5m0 363v3m1-370v5m0 363v4m1-372.5v6m0 363.5v4m1-5.5v3m1-375.5v6m0 364v4m1-5v4m1-429.5v7m0 50.5v5m0 363v4m0 497.5v4m1-933v8m0 421.5v4m1-373v5m0 364.5v3m0 463v3m1-5v5m1-899v8m0 420v3m0 462.5v5m0 29v4m1-931v7m0 419v4m0 465.5v5m1-902v9m0 888v4m1-902.5v9m0 53.5v5m0 832v5m1-841v5m0 360.5v5m1-371v6m1-73.5v9m0 60v4m1-75.5v8m0 62.5v4m1-4.5v6m0 360v4m1-368v5m0 358v4m0 495v4m1-865.5v5m0 855.5v4m1-920.5v6m0 409v4m0 495.5v4m1-503.5v3m1-2v3m1-424v7m0 415.5v3m0 496.5v4m1-4.5v3m1-918.5v7m0 407v4m0 493v4m1-915.5v7m0 902v4m1-4.5v4m1-1.5v3m1-500v4m0 494v4m3-7.5v4m2-858.5v5m1-6.5v6m0 352v4m1 492.5v4m1-2.5v4m1-502v5m1-362v5m0 856v2m1-864v5m0 358.5v3m0 496.5v4m2-4.5v3m1-863.5v5m1 859.5v3m2-929.5v9m0 886.5v4m2-903v9m0 425v3m0 469v5m1-477v3m0 495v3m1-4.5v4m3-930v8m0 422v3m0 494v4m1-501.5v3m2-436v8m0 426.5v4m1-437.5v9m0 896v4m1-478v4m1-432.5v7m0 895v4m1-904.5v8m2-7.5v7m1-9v7m2-11v8m1-9v8m1-7.5v8m1-3.5v8m2-7.5v7m0 54.5v4m1 362.5v4m1-436.5v9m0 421.5v4m1-433v8m0 421.5v2m1-430.5v8m0 420v3m0 494.5v4m1-929v8m0 418.5v5m0 495v4m1-931v9m1-9v7m0 1v7m0 412.5v4m0 493v3m1-928v9m0 2v6m0 47v5m0 359.5v3m1-419.5v7m0 43v6m1-59v7m0 47.5v5m0 858v3m1-924.5v8m0 51v5m0 855.5v4m1-925.5v6m0 52.5v5m1-63v7m0 52v5m0 858.5v5m1-867.5v6m0 857v5m1-921.5v8m0 47.5v5m0 361v4m1-425.5v6m0 915v3m1-925.5v7m0 48.5v4m0 861v2m1-924v8m0 47.5v6m0 856.5v4m1-921.5v7m0 50.5v5m0 855v3m1-920.5v6m1-5.5v7m0 877v4m1-888.5v6m0 882v5m1-893v7m0 414v4m0 466v5m1-894v7m0 410v3m0 470v3m1-891v6m0 407.5v3m2-421.5v7m0 413v4m1-5.5v4m1-2.5v3m1-427v7m0 417.5v3m1-423.5v7m0 414.5v5m1-424.5v8m1-7v8m0 409.5v5m1-7.5v3m1-5.5v4m2-0.5v4m3 495v4m1-3v3m1-863.5v5m0 356.5v3m0 469.5v5m0 20.5v3m2-930.5v8m0 62v4m0 358.5v3m1-368.5v4m0 819.5v5m1-900.5v8m1-4v8m0 60.5v4m0 817.5v4m1-893v9m0 59.5v6m0 856v4m1-932v8m1-6v7m0 57.5v4m0 819v5m0 31v3m1-930.5v9m0 57.5v6m1-71.5v8m0 420v4m0 462.5v4m0 27.5v3m2-929.5v9m1-7.5v7m0 424v3m0 495v3m1-503v3m1-432.5v7m1-4.5v7m0-1.5v8m0 410.5v3m0 497.5v3m1-928v8m0-1v7m0 410.5v3m2-435v8m0 2v8m0 41.5v4m1-64v8m0 2.5v7m0 59v4m0 853.5v3m1-936.5v9m0 1.5v7m0 41.5v6m0 9.5v4m1-75v8m1 44.5v5m0 8v6m1-68v8m0 55.5v4m1-67v8m0 55.5v6m0 356.5v5m1-368v5m0 357.5v3m1-380.5v4m0 375.5v3m1-2.5v4m1-369.5v6m0 361.5v3m1-1.5v3m1-4v4m1-6.5v4m1-422.5v7m0 44v5m1-56.5v7m0 34v5m0 375v3m0 494.5v4m1-882.5v5m0 377v3m0 496v3m1-502v3m0 495v4m1-884.5v5m0 375v4m0 493.5v3m1-923.5v8m0 54v6m0 352v5m0 493v4m1-925.5v7m0 0v6m0 36v4m0 371v4m0 493v4m1-861.5v5m0 355.5v4m0 494.5v4m1-916v6m0 45v5m0 360v3m1-422.5v7m0 413v3m0 496v4m1-870.5v6m0 360v3m0 498.5v5m1-924v6m0 46.5v4m0 861.5v5m1-923v8m0 45.5v5m0 857.5v3m1-865v5m1-61v7m1 412v3m3-380.5v4m1-44.5v6m2 408.5v5m2-5v4m1-364v5m1 360v4m1-431v9m0 52v5m1-5.5v4m0 814v5m1-823.5v5m0 365v4m0 450.5v3m0 44v3m1-934.5v7m0 56v4m0 363.5v3m1-434v8m0 56v4m0 361v5m0 457.5v3m1-831.5v5m0 822v3m1-829.5v6m0 818.5v5m1-466.5v3m1-3.5v3m0 497v3m1-504.5v4m0 496.5v4m1-505v3m1-367.5v5m0 857v3m1-863.5v5m0 357.5v3m0 494.5v3m1-863v5m0 358v3m0 494.5v3m1-863.5v5m0 359.5v3m0 466v5m0 24v4m1-867.5v5m0 826v5m0 31v3m1-502.5v3m0 459.5v4m1-830v6m0 355.5v3m0 463.5v5m1-833.5v5m1-68.5v7m1 415v4m1-427.5v7m1-7v8m1 40v6m0 872v3m1-925v8m1-8.5v8m0 36.5v6m0 370v5m0 496v3m1-928v9m0 417.5v3m0 494v4m1-930v8m0 57.5v6m1-71.5v8m0 56v6m0 858.5v3m1-922v7m0 45v6m0 363.5v4m0 494.5v3m1-929.5v8m0 3v7m0 41.5v5m0 365v3m0 495.5v3m1-918v7m0 40v6m1-64v7m0 4.5v6m0 412.5v4m0 494.5v3m1-930v8m0 0.5v7m0 45v4m0 861v3m1-927v8m0-0.5v6m0 45v4m1-63.5v8m0 0.5v6m1 908.5v3m1-922.5v8m0 50.5v4m0 859.5v4m1-502v5m1-377v5m1 366v4m1-374.5v5m0 836v3m1-5.5v5m1-844v5m0 832.5v4m1-841v5m0 361v4m0 464v4m2-472v4m0 469v5m1-892.5v6m0 406v4m1-415v7m0 40.5v4m1-51v6m1 41.5v5m1 356.5v4m2 0v3m1 0.5v5m2-372.5v5m0 367v4m1-425.5v8m2 410.5v3m1-3.5v4m1-435v7m0 2.5v6m0 42.5v5m1-3.5v4m0 367v4m1-423.5v7m0 29v5m0 377.5v3m1-420.5v7m0 29.5v5m0 373v3m1-424.5v7m0 1v7m0 43v4m1-59.5v7m0-0.5v8m0 38.5v4m0 359.5v4m1-420.5v7m0 409v4m0 497v4m1-923v8m0 411v3m1-424v8m0 0.5v8m0 38.5v6m1-62.5v8m0 50.5v5m0 362v3m1-430.5v9m0 49.5v6m0 363.5v3m1-430.5v9m0 48v6m0 364.5v3m0 469v3m1-898.5v8m0 48.5v5m0 831v5m1-898v7m0 52v4m0 358.5v4m1-427v8m0 51.5v4m0 360v3m0 476v3m1-906.5v7m0 898v3m1-907.5v7m0 50v5m0 836.5v5m1-903v8m0 419.5v4m0 464v3m1-896.5v9m0 47v5m0 830.5v5m1-840.5v6m0 831.5v3m1-896v7m0 48v5m2-58.5v9m0 45.5v5m0 362.5v3m1-422.5v7m0 413.5v4m1-3.5v3m2-376v5m1-4v5m1-4v4m5 473.5v3m2 36.5v5m2-43.5v5m1-5.5v5m1-4.5v4m1-13v3m0 8.5v3m1-13v4m0 6.5v4m0 51v5m1-72v5m0 6.5v4m1-3v4m0 55v4m2-1.5v4m3-12v5m3-52v4m0 46v5m1-53v3m1-17v3m0 13.5v3m1-3v4m0 47.5v3m1-55v4m0 45.5v3m2-59v5m3 3v3m1-18.5v5m0 39v5m1-64.5v4m4 20.5v4m1 38v4m0 8.5v4m2-60.5v4m0 58.5v4m0 290.5v4m1-6.5v4m1-3v4m1-3v4m1-359v3m1-1.5v3m0 350v4m0 16v3m1-23v3m0 18v4m1-376v3m3 369v4m3-5v4m9-23.5v3m1 14v4m2-11v5m1-19v3m0 12v5m1-19v4m0 11v4m1-14v3m0 11.5v2m1-14v4m1-5.5v4m0 11.5v3m1-23.5v4m0 19v4m1-29.5v5m0 23v3m1-29.5v5m0 21v4m1-30v4m0 23v3m1-5.5v3m1-2v3m3-5v4m1-3.5v2m1-5.5v4m1-5v3m1-0.5v3m1-1.5v4m2-3v4m1-3.5v4m1-5.5v3m1-4v3m1-6v4m1-2v2m1-463v4m0 456.5v3m1-1.5v3m1-1.5v5m1-465v4m0 457v4m1-467v4m0 459.5v3m2-467v2m0 459.5v4m2-464v4m0 458.5v4m2-1.5v2m1-31v4m1-348.5v3m1 343v4m6-3v3m1-439.5v3m1 87.5v3m0 344.5v4m1-2.5v5m1-484.5v3m0 126v3m1 345.5v5m1-350v2m6-133v3m10 499.5v4m1-2v3m1-505v5m1-8v4m1-5.5v3m0 502.5v3m1-467.5v3m0 460v3m1-4.5v4m2-506v3m0 498.5v4m3-5v4m7-502v5m3-8v5m0 497v3m1-504v5m0 495v4m1-0.5v3m1-4v3m1-504.5v5m0 496.5v3m1-2.5v3m3-2v2m1-501.5v4m0 497.5v2m2-1.5v4m2-2v4m1-5v3m1-6.5v5m5-31.5v4m5-2v3m0 24v3m1-35v4m4 25.5v4m1-6.5v4m1-6.5v5m2-5v5m1-1.5v3m1-3.5v4m2-6.5v3m1-466v4m0 458v4m1-463v2m1-1.5v3m0 458.5v4m1-464v3m0 457.5v4m1-464.5v3m0 458v3m1-2.5v3m1-464.5v4m0 459v3m1-467v5m0 457.5v4m1-467v4m1-2.5v2m1-3.5v4m1-1.5v3m0 457v4m1-4v4m1-5v4m2-9v5m1-6v4m1-1v2m1-0.5v3m1-2v4m1-3v3m3-507.5v5m1-3.5v3m5 0.5v3m9-7.5v5m6 470v3m1 1.5v3m1 0.5v4m0 19v3m1-4v4m1-4v4m2-33v5m0 26.5v4m1-34v5m0 28v4m1-3.5v3m1-6v3m1-5.5v4m2-3.5v3m2-3v2m1-464v3m2 458v4m1-465.5v4m4 457.5v3m3-467v4m0 459v2m1-6v3m3-4.5v4m9 0.5v2m4-27.5v3m1-2.5v4m1-4v3m0 18v3m1-0.5v4m1-26v3m1 22.5v5m1-25v3m1 16v4m10-467.5v2m2 0v4m1-1.5v4m1-1.5v3m1 456.5v4m1-4v4m1-4.5v3m1-4.5v3m1-31v4m1-435v3m0 457v4m1-465v4m0 457v4m1-27.5v4m0 17v5m1-5.5v4m1-2.5v4m1-468.5v5m0 435v3m0 20.5v3m1-5v4m2-3.5v4m1-1v4m9-462.5v4m4 422v4m2-427v4m8 131v5m1-6v5m1-6.5v4m2-3v4m3-26.5v3m1-119v4m0 108.5v5m1-118.5v3m0 70.5v3m0 34.5v5m2-155.5v4m0 110v5m1-119v4m0 38v3m2-45.5v4m0 174v3m1-180.5v4m0 173.5v4m1-181v5m0 111.5v4m1-120.5v4m0 35v3m0 73v3m0 58.5v5m1-186v4m0 37v3m1-42.5v3m0 111v3m2-115v4m2 31.5v3m1-5.5v3m1-1.5v4m3-42v4m0 33.5v4m1-2.5v5m1-39.5v3m0 36v3m1 113v4m1-159v3m0 151.5v3m1-159.5v3m0 38v5m0 109.5v4m1-121.5v4m0 111.5v4m1-157v5m0 34v4m3-30v5m0 96.5v4m0 70v5m1-131v4m0 125v5m1-133.5v5m1 128v4m1 286v2m1-4v4m1-670.5v4m0 34.5v4m0 207.5v4m0 54.5v3m0 355v5m1-291.5v4m0 283v5m1-672.5v3m0 376v5m0 284.5v4m1-5v4m1-293.5v4m0 286v4m1-418.5v3m0 414.5v2m1-670v4m0 202v4m0 167.5v4m0 289v4m1-672.5v4m0 200.5v5m0 460.5v4m1-14.5v5m0 5.5v3m1-13.5v5m0 3.5v4m1-15.5v3m0 9v3m1-469v5m0 170.5v4m0 270v3m0 12v4m1-2v3m1-20.5v3m1-615.5v5m0 608.5v4m2-449v4m2-2v4m0 41v3m3-52v4m1-3v3m0 99v3m1-104.5v5m1-2.5v4m0 442.5v4m1-1v5m1-453.5v4m0 445.5v3m2-576.5v3m0 562v3m1-444v5m1-3v3m1-3.5v3m1-5v5m0 437.5v3m0 17.5v3m2-3v3m1-467.5v5m1 39.5v3m0 414.5v3m1-3v3m1-466v4m1-3v3m0 461v4m1-467v4m0 460.5v2m2-460.5v3m0 172.5v4m1-4v5m1-181v5m0 460.5v2m1-468v3m0 169v6m0 256.5v3m1-6v5m1-631v4m0 362v5m0 259v4m0 20.5v4m1-293.5v4m0 264.5v4m1-275.5v5m0 268.5v3m1-278.5v6m0 269v3m2-640.5v5m0 359v5m0 268v4m0 10v3m1-3.5v4m2-470.5v4m0 459v4m1-655v5m4 2v3m0 234v4m2-240.5v3m0 237.5v4m2-1.5v3m1-247.5v6m1 235.5v3m1-4.5v3m0 125.5v5m0 263v4m1-5v3m1-657.5v4m0 257.5v3m0 388v4m1-653.5v3m0 84.5v3m1-5v3m0 123.5v4m0 431v5m0 23.5v4m1-680.5v5m0 252.5v5m0 413v3m1-593v4m0 557.5v3m1-652.5v5m0 80v5m0 559.5v4m1-634.5v5m0 62v5m0 561.5v3m0 18v3m1-657v4m0 631.5v4m1-573.5v5m0 166.5v4m0 413v4m1-592v4m1 170.5v3m0 414.5v4m1-659v3m0 237v3m0 414.5v4m1-682v5m0 34.5v4m0 219v4m1-266v5m1 34v3m1 17.5v5m0 196.5v4m1-228.5v5m0 218.5v4m1-263.5v4m0 32.5v5m1 218.5v4m1-202.5v5m0 195.5v4m2-206.5v4m0 195.5v4m1-202.5v4m0 193.5v4m0 413.5v4m1-620v3m0 195v5m0 413.5v3m1-619.5v4m0 194v5m0 413v3m1-621v5m0 195.5v3m1-202.5v3m0 193.5v5m0 413v4m1-618.5v4m1 195v3m0 413v2m1-615v3m0 193v4m0 414.5v2m1-617v3m1 190v4m1 412v2m1-420.5v3m0 414v3m3-613v3m0 585.5v3m1-3v5m1-3.5v3m0 21.5v3m1-612.5v3m0 582.5v4m0 23v4m1-0.5v2m1-3v3m1-465v5m2 454v3m1-464v4m0 457.5v3m1-0.5v4m2-421v5m2-7.5v4m1-204v4m0 195.5v3m1-202.5v4m0 194v4m1 52.5v3m1-300v4m0 37.5v3m0 194v3m1-241.5v3m0 64.5v4m0 168.5v3m1-242.5v6m0 61.5v3m0 225.5v5m1-298.5v5m0 60.5v4m1-67v3m0 60v4m1-3v5m2-5v3m1-3.5v5m1 590.5v2m1-1v3m1-5.5v4m1-2.5v4m1-3.5v4m2-4v3m1-420.5v5m1-7v4m1-4v4m1-4.5v5m1-3.5v5m1-181v3m0 175v4m0 52.5v4m1-60v3m0 410.5v3m1-595.5v5m0 230v4m0 322v3m1-565v3m0 130.5v3m0 41v5m1-182.5v4m0 127.5v4m0 98v3m1-320.5v3m0 81.5v3m0 127v4m0 41v5m0 53v4m0 324.5v4m1-652v5m0 209.5v4m0 98.5v4m0 67.5v6m0 256v5m1-657.5v4m0 59v4m0 20.5v4m0 122v5m0 100.5v4m0 332.5v3m1-570v3m0 122.5v4m0 99.5v4m1 328.5v4m1-653.5v5m0 58v5m0 19v3m0 124v5m0 97.5v5m0 327.5v3m1-651v3m0 82.5v4m0 225.5v4m0 331v5m1-656v4m0 82v4m0 221.5v5m1-317v4m0 308.5v4m0 339.5v5m1-349v5m1-2v4m1 0.5v4m1-281.5v5m0 275.5v4m1-283v3m0 277.5v5m1-287v6m2-2.5v5m1 19v5m1-28v4m0 19.5v4m1-7.5v4m1-3.5v4m1-4.5v5m1-4.5v4m1-66.5v3m1 80v4m1-29.5v4m1-5.5v4m1-5v4m0 22.5v4m1-2.5v3m1-1v3m1-50.5v4m0 43v5m1-5v4m1-3v3m1-3v4m1-50.5v5m1-60v2m0 15v5m1-7v5m1-4v4m0 673.5v4m1-699v3m0 661v4m1-652v4m1 642v3m0 31.5v3m1-4.5v4m1-699.5v3m0 691.5v4m1-699.5v4m1 663v5m4 25v3m1-461.5v4m1-1.5v3m1 0v3m0 458v2m1-462v4m0 457v3m1-468v4m1-7.5v4m1-6v3m1-3v3m0 100v5m2-111v5m0 44v3m0 54v5m1-110.5v4m0 44.5v3m0 123v4m1-130v4m1-54v4m0 45v3m0 52v4m1-106.5v3m0 98.5v5m1-6v5m4-59v3m0 54.5v4m0 353v4m1-660.5v5m0 238v5m0 410.5v4m1-361v4m0 354.5v3m1-363v5m0 354v3m1-418.5v5m0 408v4m1-417v3m0 51.5v4m0 355v3m1-416.5v5m1 50.5v4m1-4v4m1-4v3m0 356v4m1-417v4m0 49.5v5m0 355v4m1-360.5v3m0 354.5v4m1-360v3m0 354.5v3m2-363v5m1-4.5v5m4-52.5v3m1-3.5v3m0 53v4m1-65.5v4m1-6.5v4m0 51.5v5m2-345.5v4m0 275v4m1-7v5m1-6v5m1-4v4m1-177.5v3m0 172.5v5m1-2v3m2 0v4m1 381v4m1-570v4m0 563.5v3m1-655v4m0 646v5m2-652.5v3m1-3v5m0 641.5v3m1-651.5v5m0 643v5m1-651.5v4m0 639.5v4m1-647v4m2-5.5v4m0 382.5v3m1-390.5v4m0 79.5v4m1-89v5m0 379.5v3m1-300v5m1 173.5v5m0 117.5v3m1-123v3m0 116.5v5m1-305v4m0 177.5v3m0 117.5v3m1-124.5v4m1-284.5v2m0 333v4m0 55.5v5m1-3v3m1-117.5v3m0 51.5v5m1-58.5v4m0 51.5v3m1-339.5v3m0 279.5v3m1-284.5v3m1-3.5v4m0 396v3m2-398v3m1-4.5v4m0 95.5v4m8 275.5v5m2-6v3m1-5v3m3-331v4m2-7v4m2-5.5v4m1 326v4m2-49.5v4m0 36.5v4m1-43v4m1 42v4m3-7.5v3m1 21v4m3-8.5v4m1-177v3m0 80.5v5m0 86.5v3m1-175v3m0 81.5v4m1 0.5v3m0 85.5v3m1-175v3m0 81.5v3m1-88.5v2m0 81.5v3m1-89v3m0 83.5v3m1-87v2m1 118v4m2-6v5m0 29.5v2m2-154.5v4m2 115.5v5m1-129.5v4m0 116v4m1-125.5v4m0 117.5v4m1-125v5m0 116v5m0 48.5v4m1-57.5v3m1 32v3m2 0.5v4m1-36.5v4m0 30v4m1-3.5v4m1-3.5v3m1-77v3m0 66v4m1-3.5v2m1-73.5v5m1-278v4m1 342v3m1-2v4m1-347.5v5m0 338.5v4m1-1.5v4m1-348v5m1-7v3m1-5v4m1-4v3m1 347.5v3m1-3v4m1-7v4m1-347.5v3m0 339.5v2m1-4v4m1-347v4m0 359v4m2-10v4m1-365.5v3m0 305.5v5m0 31v3m1-0.5v4m4-158v3m1-198v3m0 188.5v4m1-195.5v5m0 343v3m1 13v5m1-25.5v3m1-353v3m0 284v3m0 75v4m1-82v3m1-282.5v3m0 279v3m1-37v4m0 23v5m1-279v3m1 269.5v3m0 68.5v3m0 15.5v3m1-176.5v3m0 83v3m0 5v5m0 55.5v3m1-96v3m0 93v4m1-157.5v4m0 90v5m0 21v5m1-126v3m0 56.5v3m0 58v4m1-126.5v4m0 93.5v3m0 23v5m2 32.5v3m1-73v3m1-31v3m0 89v4m1-348v4m0 243.5v4m0 94v3m1-349.5v5m0 221.5v3m0 18.5v3m0 50.5v6m0 37.5v3m0 15.5v3m1-139v5m0 18.5v3m0 50v5m0 57v3m1-116.5v3m1-251.5v4m0 243v3m0 92.5v3m1 19.5v3m1-22v4m1-44v4m0 38v3m1-102.5v4m0 51v5m0 39v4m0 14v3m1-123.5v3m0 24v4m0 69.5v4m1-109.5v4m0 25.5v3m0 66v4m2-348.5v4m0 244.5v3m0 96.5v4m1-103v5m0 94v4m1-104.5v3m0 115.5v4m1-367.5v3m0 241v5m0 95.5v4m0 14v4m1-23v3m2-40.5v4m1-7v3m1-117.5v5m2 96v5m1-4.5v3m1-5v3m6 13.5v4m0 53v3m1-93.5v5m0 31.5v5m1 0v3m0 32.5v3m1-75v3m0 33.5v4m1 29v4m3-6.5v4m2-165.5v3m0 119v4m2-123v4m1 154v4m1-5.5v3m5-154.5v3m0 89v4m2-11v4m1-3v4m0 67v3m0 16v3m1-81v5m0 53.5v4m1-6v5m1-354.5v3m0 222.5v5m0 114v5m1-354v3m0 343.5v3m1-349v4m0 223v5m0 134v3m1-177.5v4m0 33.5v3m0 131.5v5m1-365v4m0 341v4m1-4.5v3m1-157.5v5m0 151.5v4m1-157v3m0 54.5v4m0 95v5m2-106v5m1-254.5v3" opacity="0.188"/><path d="M318.5 947.5v4m1-5.5v5m4-914.5v7m1-3.5v7m0 419v4m1 473.5v5m1-905v8m0 418v4m0 469v4m1-2.5v5m1-910.5v9m0 425.5v4m1-438v7m0 427v4m0 467v4m1-909v9m0 900v5m1-914.5v9m0 423.5v3m1-435.5v8m0 424.5v3m1-436v8m1-6v8m0 900.5v3m2-911v8m1-11.5v9m0 426v2m1-437.5v8m0 425.5v5m1-440v9m1-6.5v9m0 420v5m1-429.5v9m1 418.5v4m1-428.5v7m1-9.5v7m0 508v5m1-92.5v3m1-5v5m1-367v6m0 355.5v3m2-363.5v5m1-6v6m0 358v5m0 479v5m1-917v8m1 59v6m0 357.5v3m2-367.5v5m1 861.5v4m2-870.5v4m1 446.5v4m1-516v9m0 504v4m1-518v8m0 922v3m1-870.5v5m0 863v3m1-870.5v4m0 860.5v4m1-870.5v4m0 859v5m1-870.5v6m1-67v7m0 54.5v5m0 859v4m1-865v5m0 442.5v6m0 408.5v3m1-417v5m1 408v3m2-863.5v6m0 441.5v4m1-4v6m0 391v5m1-401v4m3-3v5m1 396.5v4m1-9.5v5m0 12.5v3m1-23.5v3m0 16v2m1-20v4m0 12.5v4m1-860.5v4m1-4v4m0 833.5v4m1-6.5v5m1-1.5v4m0 22.5v2m1-870v5m0 863v4m1-5.5v4m1-23.5v4m0 15.5v3m2-867.5v4m2-70.5v8m0 898v4m2-905.5v8m1-10v9m0 893.5v5m1-904v8m0 422v4m1-435v7m1-8v9m1-10.5v9m0 424.5v3m4-371.5v6m2-8.5v6m2-5v4m1-71.5v9m1-4v7m0 55.5v6m0 363v2m1-370v5m1-4.5v4m1-6v6m1 362.5v4m1-434.5v7m1-7.5v7m0 422.5v3m1-3.5v3m1-4v4m2-432.5v7m1 420v4m1 466v5m1-894v8m0 880.5v4m1-895.5v8m1 498v5m0 382.5v5m1-903v7m0 1.5v8m0 411v3m1-429v8m11 412v3m0 81v5m1-89.5v5m0 79.5v5m2-87v4m0 479v4m1-399.5v5m0 390.5v4m1-484v4m0 473.5v5m1-4.5v3m1-3.5v3m1-904v9m0 417v4m0 469.5v5m1-903.5v9m0 419.5v3m0 464.5v4m1-468.5v4m1-437.5v9m0 424.5v4m0 461.5v3m2-907v8m0 902.5v4m1-913v7m0 428v3m0 468.5v5m1-909v8m0 424v4m0 466.5v5m1-906v9m0 422.5v3m0 464v5m1-3.5v4m1-904v9m1-10.5v8m0 425v4m2-4v4m1-371.5v5m1-5.5v5m0 361v4m1-371v5m1-5.5v6m1-6v6m1-5.5v4m2-0.5v4m1-6v5m1-2.5v4m1-7v5m1-6.5v6m2-68.5v7m0 58v5m1-3v4m1-4.5v4m1-3.5v5m1-5.5v4m1-62.5v8m0 50.5v6m0 852.5v5m1-864.5v5m1 854.5v4m1-500v3m0 494v4m1-930.5v9m0 419.5v3m1-3v4m1-5.5v3m0 496v4m1-502.5v4m1-425v7m0 416.5v3m1 497v3m1-867.5v6m4-5v4m0 817.5v4m0 35v4m1-5v4m1-4v5m4-920v6m0 883.5v4m2-900.5v6m0 885.5v3m1-5.5v5m3-469.5v5m2 464v4m2-478v3m2-429v9m1 420.5v3m1 467.5v3m1-836.5v5m0 831.5v4m2-838v5m0 825.5v4m0 25v4m1-0.5v4m1-940v9m0 926.5v5m1-872v6m0 820v4m0 37.5v4m1-4.5v4m1-48v3m1-821v5m0 814v4m1-378v5m1 376v4m2-899v9m0 422v3m0 460v4m1-466v4m0 457v3m2-896.5v8m0 885.5v4m1-468v2m0 81.5v4m3-516v9m0-0.5v8m0 50.5v6m0 822v5m1-2v3m1-7v5m1-6.5v4m1-887.5v7m0 50v6m9-6.5v5m1-60v8m1-13v7m1-8v9m1-12.5v8m0 0.5v6m0 50v5m1-71.5v8m0 0.5v7m1-6.5v6m1-14v7m2-1v7m0 1v6m1-14.5v9m0 915v4m4-503.5v3m1-2v3m0 494.5v3m3-501v2m0 80v4m1-3.5v4m1-86.5v4m0 79v5m1-4v6m1-523v9m0 423.5v3m1 79.5v4m1-91v3m0 81.5v5m1-509v7m1-7v9m1-10.5v8m2-7v7m1-7v8m1 505.5v6m0 369.5v4m0 38v2m1-5v4m1-4v2m1-503v3m0 79.5v4m0 413.5v3m1-5.5v5m3-8.5v3m1-500.5v3m4-1.5v3m1-367.5v5m0 859v4m1-7v5m1-7.5v3m1-861.5v4m0 441v4m0 408v4m1-864v5m0 443.5v4m0 407.5v4m1-865v6m1-4.5v5m1-4.5v5m0 444v4m1-453v4m0 443v6m1-452.5v4m1-2.5v5m0 441v5m3-513.5v7m0 505v5m2-516v7m0 422.5v3m1-370.5v5m1 363.5v3m0 79v6m1-90v5m1-372v5m1-65.5v8m0 53v6m0 361v3m1 80v6m1-456.5v5m1 365v3m2-8.5v3m1-5.5v2m1-3v4m2-430v8m0 420v5m1-430.5v7m0 2.5v6m2-12v7m0 412.5v2m1-421v8m1-6v7m1-7v9m0 887.5v5m1-903.5v9m2-14.5v9m2-3v7m2-10v9m0 44v6m0 372v3m1-434.5v7m0 47v4m1-3v4m1 370v4m1-432.5v7m1-6.5v8m0 50v4m1-61v7m0 51.5v4m3-51.5v6m0 37.5v6m1-48.5v6m0 37v4m1 362v4m7-369v4m2-5v5m1 449.5v5m1-514.5v9m1 497.5v5m1-511v8m0 48.5v5m3 449v4m1-5v4m3-7.5v6m3 69.5v3m1-5.5v5m1-10v4m0 11v4m1-23v4m0 16.5v5m0 316.5v3m1-323v5m0 38v5m1-3v3m1-140v5m0 133.5v4m1-143.5v5m0 14v4m0 113.5v5m1-635v7m0 488v5m1-499.5v8m1-10v7m0 489v4m0 76v5m1-84v3m0 75v5m1-85.5v5m1 93.5v3m1-603v9m1 538v3m0 47v5m1-597.5v7m0 583.5v5m1-59v4m0 40v3m1-8v5m3-47v3m2-537v9m1-6.5v8m1 533v5m4-24.5v5m1-6.5v4m1-24v3m0 25.5v4m0 43v5m1-79.5v5m0 21v4m0 49v3m1-79.5v4m0 22v4m1-30v4m0 29.5v3m2-3v5m1-2.5v3m0 55v3m5 293.5v4m17-5.5v4m2-1v3m2-7.5v3m11-481v4m1 497.5v3m1-2.5v4m2-508v5m1-7v5m0 475.5v5m4-483v4m2-3.5v4m9 474v5m1-5v5m0 18.5v3m2-3v4m1-22.5v5m1 17v3m1-30.5v5m2-5.5v4m2-3v3m1 0v4m1-1v5m1-3.5v5m1-8v3m5-3v4m1-481.5v4m1-2.5v5m1-6v5m1-5.5v4m1-8v5m1-5.5v4m1-2.5v4m2-1.5v3m14-5v4m1-4v5m1-4v3m2-4.5v3m1-2.5v5m9-2.5v4m1-7v4m3-0.5v5m1-4.5v4m2-6.5v5m1-3v4m0 498.5v3m1-505v5m0 495.5v5m1-505.5v4m2-1v5m2-1.5v5m9 467.5v3m1-4v4m1-2v3m1-5.5v5m0 20v4m2-5v3m1-35.5v4m0 27.5v4m1-3.5v4m5-8v3m3-503v5m3-7v5m4-0.5v4m4 476v3m0 17v3m1-3.5v4m1-2.5v3m4-5.5v2m2-570.5v4m0 542.5v4m2-9v5m1-7v5m1-2.5v4m2-541.5v4m0 59v4m3-5v5m1-3v5m1-4.5v4m1-4v5m2-3.5v3m1-4.5v4m1-4.5v3m1-4v5m1-2v4m3-6v5m1-70.5v5m1 59v3m4 470.5v3m4 6v4m1-7.5v4m1-7v3m1-473v5m1-3v5m1-4v3m1-5v3m1-4v4m2-5v3m1-68.5v5m0 60v5m1-4v5m1-5v3m1-68.5v5m0 59v3m1-4.5v4m1-4v5m0 478v3m1-7.5v4m2-547.5v4m0 532.5v4m3-538v4m1 54.5v5m26-3.5v5m11 474.5v5m1-0.5v4m2-11.5v3m1-7.5v4m1-5v5m2 4.5v3m19-2.5v3m1-6v5m1-10v5m2-4v3m1 3v3m1-2v4m9-476.5v4m0 34v3m1-45.5v5m0 36.5v4m0 110.5v3m1-158.5v3m0 39v3m0 108.5v4m1-41.5v5m1-79v5m0 67v5m0 35.5v5m1-117.5v4m0 134v3m1-70.5v3m1-116.5v4m1-5v5m0 35.5v4m1-3v3m0 106.5v4m1-3v5m2-77v6m1-6v5m3 27.5v5m0 59v4m1-6v4m1-179v3m0 34.5v3m0 72v4m0 60v5m1-142.5v2m0 73v4m1-78v3m0 134v4m3-73v4m1-75.5v2m0 72.5v4m1-78v2m0 111.5v5m1-45v3m0 61.5v3m1-28v5m0 20.5v4m1-25.5v4m2-116v4m0 132v3m3-27v5m1-157v4m3 111v5m1-101.5v4m0 93v3m0 0v5m0 69v4m1-131.5v3m0 54.5v4m1-61v4m0 53.5v4m0 67v5m1-134v5m0 52.5v4m0 68.5v3m1-320v3m0 20.5v4m0 115.5v3m0 171v5m1-383.5v5m0 55v5m0 138v4m0 43.5v3m0 54v4m1-272v3m0 17v4m0 141v4m0 98.5v3m1-310v5m0 198v4m0 99v4m0 67.5v4m1-343.5v4m0 162.5v4m1-124.5v4m0 117.5v4m0 167v6m1-341.5v4m0 16.5v4m1-2.5v5m1-65v4m0 201.5v5m1-6v5m1-7v5m0 171v3m1-344.5v5m1-4v4m0 163.5v5m0 170v5m0 263.5v5m1-447v4m1-2.5v3m1-172.5v5m0 259v4m0 345.5v4m1-616v5m0 209v3m0 46.5v4m1-100v5m0 41v3m1 49.5v3m1-100v3m0 92v5m1-270v5m0 207.5v4m0 50v5m0 72.5v5m1-350.5v4m0 266.5v5m0 69v4m1-349.5v4m1-4v5m0 265.5v4m0 71v5m1-348v5m0 341v4m1-327v4m0 190.5v3m0 51v5m1-254v4m0 321v4m1-179.5v4m0 169v4m0 266v4m1-445.5v4m2-130v5m1-6v4m1-3.5v4m1-6v5m0 118.5v5m1-195v5m0 186v4m1 41v5m1-238v3m0 185.5v3m1-194v5m0 184v5m0 43v4m1-241.5v5m0 232v4m1-241v4m0 234.5v3m1-241.5v4m0 237.5v3m1-243v3m0 191.5v4m0 43.5v3m1-242.5v4m0 237.5v4m0 389v5m1-639.5v5m0 189.5v3m1-197.5v4m0 363.5v5m0 256.5v4m2-633.5v5m0 188v4m0 168v6m1-180.5v3m1-195.5v4m0 188.5v3m1-5.5v4m1-155v5m0 143.5v3m1-3.5v4m0 171v4m0 269v4m1-450v4m1-195v4m0 185.5v5m0 441.5v4m1-642v6m0 183v4m3-192.5v5m0 230.5v4m1-237.5v5m0 230v5m1-238v4m0 231v5m2-240.5v5m0 235v4m1 53.5v4m1-299.5v4m0 36.5v5m0 195.5v4m0 52v4m1-298.5v4m0 35.5v4m0 251v4m1-259.5v4m0 196v4m0 52v5m1-302.5v4m0 38v4m0 250.5v5m1-260v4m1-65.5v4m0 384.5v4m1-5v6m1 258.5v4m1-653.5v3m1 81.5v3m0 298.5v4m0 257v3m1-652v4m0 382v5m2-392v4m1-6.5v4m0 85.5v4m1-94v5m1-3v3m0 255.5v4m1-174v5m1-52v5m2-4v4m0 220.5v4m2-229v3m2 218.5v5m1-227.5v4m2 220.5v3m4-182v4m2-4v4m1 561v4m3-396.5v5m1 394v5m1-407.5v3m2 388.5v3m1-4.5v5m2-588v4m1-3v4m2-1v3m0 584.5v4m1-591v4m0 197v3m1-6v3m1-6v4m1-3.5v4m1-3.5v4m2-1.5v4m2-5.5v3m1-177v4m3-7.5v5m0 167.5v3m1-48v3m2 45v3m1-48v4m3 42.5v3m4-224v5m0 43v3m1-3.5v4m2-50v5m2 43.5v3m1-54.5v5m1-5.5v4m0 45.5v3m1-4.5v5m1 561v5m1-6.5v5m2-262v4m1-3.5v5m1-335.5v3m0 326.5v4m1-334v5m0 193v4m0 126.5v5m1-5.5v4m2-138v5m0 127.5v4m1-394.5v3m1-4v4m0 255v5m2-3.5v4m2-54.5v5m0 43.5v5m2-50v4m0 40.5v4m1-1v4m1 1v4m1-49v3m0 44.5v4m1-51v4m0 44v5m1-51.5v5m0 42v4m1-1.5v3m1-47v3m1-4.5v3m1 40v4m1-269.5v3m0 260.5v5m1-269v4m1-5v5m0 261.5v3m2-272v3m0 59.5v4m1 18v5m1-3.5v3m0 171v4m4 1.5v3m1-226.5v4m0 603.5v5m1-614v5m0 605v3m1-610.5v4m0 276.5v4m1-323.5v5m0 79.5v4m1-49.5v5m0 274.5v5m0 331v3m1-339v4m1-284.5v4m1-42.5v4m2-5v5m1 388.5v5m5-358v3m8 45v4m2-92v4m0 79.5v5m1 232.5v4m0 66v5m1-310v3m0 300.5v6m1-77.5v5m1-6v5m2-60v3m0 124v4m1-132.5v4m0 124v5m1-132.5v4m0 52v3m0 68.5v5m1-133v3m0 51.5v4m1-60v4m0 125v5m0 280.5v4m3-658.5v5m0 241v4m1-4v3m3-249.5v4m1-5.5v5m0 242.5v4m1-249v3m0 242v5m1-6.5v4m1-250v5m1 244v4m2 52v5m3-62v4m1-2v4m1-47.5v4m0 43v4m2-49v5m1-7v3m1-9v5m1-8.5v5m1-7v5m3-159v4m1-3v5m1-64.5v5m0 78.5v4m1-86.5v4m0 79.5v4m1-89v3m0 82.5v3m1-89v3m0 57.5v3m0 22.5v3m1-28.5v4m1 20v3m1-27.5v5m0 20.5v4m0 299.5v5m1-307v3m2 301v4m1-4.5v6m1-4v4m8 251.5v3m1-564v3m1 562v3m2-431v4m1 421v5m2-266.5v3m1-301v4m1-2v4m0 297v5m2-64.5v5m1-248v5m0 181.5v3m1-191.5v5m0 234v4m2-61v5m5 96.5v3m5-46v5m1-294v3m0 346v4m2-354.5v4m6 263.5v5m0 14v4m0 4v5m1 28.5v3m1-64v4m0 56v3m2-63v5m1-3v3m0 78v4m1-4.5v3m5 1.5v3m3-2v3m2-4v5m3-57v3m1-122.5v3m0 116.5v5m1-126v2m1 75v4m0 87v5m1-5v3m2-1v4m1-59.5v4m0 53v4m1-57v3m0 28.5v3m0 18v3m1-55v5m0 50.5v4m2-4v5m1-4.5v3m1-8v4m1-3.5v3m1-57v4m1-12v4m0 40.5v3m1-348.5v4m0 298v5m1-304.5v3m0 298v5m1-4.5v5m0 58v3m1-365v4m0 268.5v3m1-0.5v4m0 67v4m0 16.5v3m1-180.5v3m0 80v5m1-92v3m0 170.5v4m1-55v4m2 2v5m1-7.5v3m2-315v3m0 304.5v3m1-9.5v5m0 4v3m1-5v3m1-14v5m1-8v4m1-303v3m0 277v4m1 2v3m1-1v3m2-17.5v4m0 6v4m1-14.5v4m0 68.5v3m0 14.5v4m1-4.5v4m1-123.5v4m0 95.5v4m1-105v4m0 113v3m4-81v4m1-12v5m0 3.5v3m1-2v3m1 75v4m1-173.5v3m0 90.5v4m0 75v4m1-22v3m0 14.5v3m1-80.5v5m0 74v3m1-366.5v5m0 269v5m1-276.5v4m0 186v4m0 33.5v3m0 42v4m1-274v3m0 186v4m0 80v4m1-88.5v3m0 35v3m0 112v3m1-348v3m0 225.5v4m0 52.5v3m1-63.5v4m0 53v5m1-3.5v3m1-0.5v4m0 52.5v4m1-118.5v4m0 42.5v3m0 23.5v5m0 38v3m1-119.5v5m0 41.5v4m1-2v3m0 66.5v3m1-342.5v3m0 241.5v4m0 23v4m0 87.5v4m1-120.5v3m0 111v5m1-93.5v4m1-284v4m0 301v4m1-312.5v4m1-4v3m0 245v3m0 24.5v4m0 68v3m2-348.5v4m1-2.5v4m0 306v4m0 29v4m1-123v4m1-225.5v3m0 299v4m1-306v5m0 298v5m0 34.5v5m1-158.5v4m0 32v4m0 115.5v4m0 11.5v4m1-5v4m2-138v3m0 133.5v4m1-54.5v4m0 50.5v5m2-144v4m1 52v3m0 75.5v5m3-144.5v4m3 114v4m1-346.5v4m1 280.5v3m0 58.5v4m1-351v4m0 188.5v4m0 89.5v4m0 22.5v5m1 25.5v4m1-36.5v3m2 26.5v3m1-6v3m1-107.5v5m0 64.5v5m0 31v3m1-99v4m0 95v2m2 18.5v4m1-122v4m1 111v4m2-174.5v3m0 93v3m1 59.5v3m1-158v3m0 117v5m0 30v3m1-348v5m0 278.5v5m0 54.5v4m1-60v5m2-67v3m2-10.5v4m1-42.5v4m0 52.5v4m0 96v3m1-99.5v4m0 92.5v3m1-156.5v3m0 33.5v4m0 16.5v5m1-62.5v3m0 35.5v3m1-227.5v4m1-2v3m1-2v4m1-6v3m1 240v4" opacity="0.25"/><path d="M309.5 40.5v7m1-8v9m2-12.5v8m1-7v7m1-5v7m5-8v9m1 900.5v3m1 0v5m1-3v4m1-7v5m4-482.5v4m1 467v5m2-476v3m0 81.5v5m1 391.5v5m1-4.5v5m1-7v4m2-483.5v3m0 472.5v4m7-907v7m6 497.5v5m2 2v5m1-90v4m1 82v5m0 387.5v3m1-479v5m0 80.5v4m1 382v4m1-842.5v5m0 450.5v3m0 384.5v4m1-394v5m1-5.5v4m1 392.5v5m1-4.5v4m1-400.5v5m2-523v9m0 506.5v5m1-517v7m1-9v8m1 505v6m3-519v9m0 504v4m0 393v4m1-403.5v5m0 395v5m1-2.5v3m2-8.5v4m1-398.5v6m1-5v4m0 393.5v3m1 1v5m1-406v4m4 389v3m6-908v7m1-11v9m0 902.5v3m1-915.5v8m0 902.5v5m1-914.5v9m2 897.5v3m7-906v7m1-9v9m1 901v3m1-7v5m2 0v5m1-915.5v7m1-8v8m2 513v5m2-8v5m7-521v8m2-5v8m0 888v4m2-901v7m1 889v4m1-901.5v8m3-2.5v7m0 496v4m1-508v8m0 495.5v5m1-509v8m0 496.5v6m2-509v8m1-10v8m1-11v9m3-7v9m1-8.5v9m1-9v7m1 499v4m0 390v5m1-398v6m1-516v9m1 504v4m1-88v3m0 80.5v5m1-89.5v4m0 80v4m1-3v4m20-450.5v6m22-66.5v7m5-9.5v7m1-6.5v7m1 503.5v6m1-514.5v7m1-6v8m0 888.5v3m1-392v4m1-512v8m0 499v5m0 383.5v5m1-392.5v5m2-519v8m1 894v5m1-902v9m0 891.5v3m1-5.5v4m1-392.5v4m1 379.5v4m1-390v6m0 382.5v3m1-901.5v9m0 503.5v5m0 378.5v5m1-471.5v3m0 461.5v3m1-898.5v9m0 886.5v3m1-470.5v4m1-3.5v4m2-2.5v5m1 458v4m1-464v4m1-3.5v5m0 78v5m1-87v3m1-5v4m1-5.5v4m0 81v5m1-90.5v4m1-5v3m4 459.5v4m2-2.5v3m1-4v5m1-3v4m5-7v5m2 1v3m1-1.5v4m1-901v7m0 892.5v3m1-903v7m1-7v8m1-9v8m0 895v3m1-907v7m0 61.5v4m2-68.5v8m0 54v6m1 824v4m1-832.5v5m0 825v4m3-902v8m0 894.5v5m5-899.5v7m1-8.5v9m1-8.5v7m0 417.5v3m2-431v9m1-8v8m0 420.5v3m2-429v7m1-6v7m0 416v4m2-3v4m0 461v4m1-384.5v4m0 379v5m1-903.5v9m0 887v5m2-389v4m0 377v3m1-382v5m0 373.5v4m1-380.5v5m0 365.5v5m1-8.5v5m2-368v5m3-7v5m13-9v4m3-4.5v3m1-2.5v5m3-6v4m0 383.5v3m3-387v4m2-1.5v5m0 379v3m1-386.5v5m0 382v3m1-389v4m1 382.5v4m1-394.5v5m1-88v4m2-3v4m1-435.5v7m1-5v7m0 506v6m1-517v8m0 502v4m3-516v7m1-11.5v9m3-3.5v9m3 890v5m2-5v4m1-903v7m0 886.5v5m1-7v4m1-895.5v8m2-5.5v9m3-14.5v7m0 509.5v4m1-4v4m10-7v5m3-6.5v4m1-2.5v5m1-3.5v4m1-3.5v4m3-8v5m2-5v5m1-3v6m1-4v6m3-6.5v4m1-6.5v4m2-6.5v5m3 402v6m1-169.5v5m0 158v4m5-911.5v9m1 506v5m0 109.5v5m1-139v4m0 75.5v4m0 50v4m2-637.5v9m1-12.5v8m1-9v9m1 544v4m1-551.5v7m1 532v4m2-545.5v9m0 493.5v4m0 36v5m1-546.5v7m0 570v3m1-580.5v8m0 499v4m1-510.5v9m1-9v9m3-3.5v9m2-14.5v9m1 493.5v5m2-4.5v5m3 14.5v3m0 61v3m1-64.5v5m0 5.5v4m1-2v4m0 43.5v4m0 313v4m17-4v5m2-9.5v5m8-4.5v3m8-481.5v5m1-67v6m0 56.5v3m1-67v6m0 57v4m2 483v5m1-491.5v4m1-66v5m0 57v5m1-3.5v3m1 471v4m2-486.5v5m0 477.5v3m1-483.5v5m1-3.5v4m1 479.5v5m1-488v5m1 473v3m1-482v5m0 474v4m3-4.5v4m1-481v4m0 475.5v3m3-2v4m3-3.5v4m1-485.5v4m0 482v4m2-483.5v4m0 469v4m2-477.5v3m3-4.5v4m4-4.5v5m1-3.5v4m15-70.5v6m1-4.5v5m2-6.5v5m0 61v3m1-69v6m3 1v4m9 524v3m2-536v4m1-3.5v4m1-6v6m0 57.5v5m0 474v5m1-4.5v3m1-542.5v6m11 531v4m2-1v4m2-4.5v4m2-476v4m0 464.5v4m2-471.5v3m5 462v5m14-543.5v6m1-5v4m1 59v4m1-65.5v5m0 56v5m2-5v3m1-4.5v4m0 478v4m2-482v5m1-5v4m1 468v4m2-474.5v5m1 472.5v4m1-481.5v5m0 475.5v5m1-485.5v3m1 472.5v4m1-6v3m3-542v6m4 534v5m1-547v5m3 539.5v3m1 0.5v4m1-4v5m1-552v6m1-5.5v6m7-5.5v5m1-4v5m1-5v6m0 531v4m1-539.5v5m0 60.5v4m0 466v4m1-475.5v5m3-73.5v4m1-3v4m0 60.5v4m0 470v5m1-479.5v3m0 472.5v3m1-479.5v4m1-2v3m6-1.5v5m5-69v4m1-5v5m0 60.5v5m3-68v5m1-5v4m2-5v5m2-5.5v6m0 57.5v4m1-4v3m0 470v4m1-478.5v5m1-4v4m0 471v5m1-543v6m0 58v3m1-4.5v4m2-9.5v5m1-6v4m2 477v4m3 2v5m3-488v3m3 473.5v4m2-479.5v5m1-4v4m1-7v3m2-4v3m3 1v5m2-6v3m1-66v5m0 58v3m2-65v6m0 57.5v4m1-3.5v5m1-5v3m1-4v3m1-0.5v4m8 476.5v3m3-484.5v4m1-2.5v4m2 472.5v4m1-482.5v4m5-7v5m1-66v6m2 62v4m3-5v4m21 151v4m2-80.5v6m1-83.5v5m0 36.5v3m0 106.5v5m0 20v3m1-0.5v4m1-181.5v5m0 73.5v4m0 29.5v3m1-118v5m0 170.5v4m2-30v3m1 21.5v3m1-99v4m0 32.5v4m0 56.5v3m1-65v4m0 59.5v3m1-65.5v4m0 34v4m2-78v5m1-7.5v6m1 67v4m1-4.5v4m1-3.5v5m1-3.5v5m0 20.5v3m1-179.5v5m0 106v4m0 37v3m1-158v5m0 148.5v3m1-158.5v4m0 110v4m0 36v3m0 20v3m1-3.5v3m2-65.5v5m1 35.5v3m1-158v4m1 177v4m1-5.5v5m2-68.5v5m1-4v5m1-3v3m0 60.5v4m1-3.5v4m1-179v4m1 51v4m0 56.5v3m1-104.5v3m0 98v4m0 60v3m1-283v4m1-3.5v5m0 114.5v4m1-5v4m1-4.5v5m0 449v3m2-621.5v5m1 208v4m0 403.5v3m1-624.5v5m0 17v3m0 22.5v5m0 159.5v4m1-253v4m0 54v3m0 22v5m0 161v5m1-254v5m0 33v4m0 16.5v4m1 21.5v4m0 216v4m1-54.5v4m0 46.5v3m0 73.5v4m1-129.5v4m0 123.5v4m1-302.5v5m0 214.5v4m0 1v5m0 67.5v5m2-301v5m0 164v5m0 48.5v4m1-226v3m0 168v3m0 48.5v3m1-288v3m0 15.5v4m0 42.5v3m0 168v5m1-242v6m0 60.5v3m0 167.5v3m0 44v4m1-220v3m0 120.5v3m0 42v4m1-173.5v4m0 220.5v5m1-273.5v5m0 258v4m1-268.5v5m1-5.5v5m0 210.5v3m1-240v4m1-6v5m0 230v4m1-2.5v4m0 125.5v5m2-79.5v5m1-273.5v4m2 17v5m0 21v3m0 167v5m1-201.5v5m0 193.5v4m0 120.5v4m1-326v3m0 23.5v4m0 166.5v4m0 122v5m1-328.5v3m1-1.5v4m0 319.5v4m1-329v4m0 321v6m1-373.5v5m0 37v5m1-3v4m1-46.5v5m0 357v5m6-345.5v5m0 273v3m2 334v3m2-637v4m0 14v4m1 20v3m1-5v4m1-2.5v4m1-48.5v4m0 38v3m1-46v5m1-5.5v4m0 38v4m1-3v3m1-4v4m0 318v5m1-328v4m1-47.5v5m0 38v3m0 315.5v5m12-64.5v5m1-5.5v5m1-4v5m1 66.5v5m1-3v4m4-355v4m3 17.5v5m1-26.5v4m0 19.5v3m2 2.5v3m0 16.5v5m2 172v3m1-182v3m1-2v3m4-2.5v4m0 126.5v3m2-4v3m1-134.5v3m2-2v3m0 225.5v3m1-4.5v4m0 336v3m1-570.5v5m1 224v5m0 329.5v4m2-632v5m0 633.5v3m2-352v4m0 339.5v5m1-643.5v5m0 629.5v3m1-402.5v5m1-241v5m0 231.5v4m1-1v4m1-1v5m2 0.5v5m10-177v4m1 124v5m1-134.5v4m1-6v4m0 125v3m0 169.5v4m1-179v3m0 170.5v4m1-305v3m0 297.5v5m4-172v3m0 40.5v4m2-49v4m1-181v4m1-3v4m0 173v3m1-133.5v5m0 172.5v3m1-3v4m1-228v5m0 216.5v5m1-226v5m0 43v3m1-4.5v4m0 174.5v3m1-180v3m0 173v5m1-229v5m0 347.5v4m0 249v5m1-563.5v5m0 558v4m1 0.5v4m1-622v5m1-4v5m0 43.5v4m3-28.5v3m1-2v3m3-27.5v5m0 19.5v4m1-5.5v4m0 194v4m2-5.5v3m2-3.5v5m1-223.5v4m1 166.5v5m0 42v3m1-222.5v4m1-4.5v5m0 167v3m0 43.5v4m1-261v5m1-3v4m0 36v5m0 168v5m1-216v5m0 208v4m1-217v5m1-5v4m0 639.5v5m2-427v5m1 43v4m1-5v5m1 379.5v5m2-394.5v3m2-6v4m2-10v3m2-1v3m1-1.5v4m1-226v4m0 19v4m0 196v5m1-204v4m1-3.5v4m0 197.5v5m1-207v3m0 253.5v5m1-59.5v4m0 380.5v4m1-330v4m0 325.5v4m2-615.5v5m0 219v4m0 386v5m1-397v4m0 53v3m0 330.5v3m1-614.5v4m0 218v3m1-4v5m0 125.5v4m1-131.5v3m0 52.5v4m1-285.5v5m0 277.5v3m1-237.5v3m0 172.5v5m0 125v5m1-398.5v5m0 34.5v5m0 42v4m0 176v3m1-267.5v4m0 34.5v5m1-44v5m0 385.5v5m1-395v4m0 386v3m1-395v5m1-3v3m0 37v4m0 42v5m2 179v3m1-270v5m0 36v4m1-3v5m1-47v5m0 80v4m1-91v3m1-4.5v5m1 386v4m1-396v5m0 80.5v5m1-90.5v4m1 81.5v4m1 300.5v4m1-4v6m1-311v3m1-26.5v3m1-6.5v5m1-65v4m0 56.5v4m0 150v4m0 174v4m5-375v5m1-5.5v5m1-5v4m0 196v5m4-205.5v4m0 196v4m2-202v5m1 13.5v3m0 226.5v3m1-48.5v3m0 42.5v4m1-3.5v4m1-233v4m0 222.5v3m1-48.5v4m1-185v6m0 176v4m1-183.5v5m1 179.5v4m6-21.5v4m1-214v4m0 205.5v5m1-215.5v5m0 207v5m1-214v4m1 55.5v4m1-2.5v3m1-5v4m1 198.5v3m1-267v3m0 259.5v4m1-206.5v4m0 198.5v4m0 123v5m2-333v3m0 197.5v3m0 126v4m1-308v3m0 301v5m1-133v4m2-181.5v3m0 175v5m1-3.5v3m0 124.5v4m1-5.5v5m7 255.5v4m1-567.5v3m1-3v5m0 129.5v4m0 425.5v4m1-567v3m0 559.5v3m1-565.5v3m0 133.5v4m1-140.5v4m0 133v4m0 419.5v5m1-565v4m0 179v3m0 375v3m1-422v3m1 0.5v3m1-144.5v3m0 184v4m1-5.5v3m0 104v5m1-323v3m0 259v4m1-61v3m1-189v4m0 179.5v5m0 49.5v5m1-4v5m5 322.5v5m3-271.5v3m0 261.5v4m1-613v3m2 281.5v5m1 56v3m1-5v3m3-58.5v3m1-302.5v3m3 273v4m0 26v3m1-5.5v3m1-33v4m5 23.5v4m1 54.5v3m1-53v3m1-1.5v4m1-6.5v3m0 51v3m1-5.5v5m2-4v5m3-59.5v3m0 53v3m5-102v4m1-1.5v3m1-3.5v4m1-1v3m1-47.5v3m0 41v5m1-2.5v3m1-46.5v4m0 42.5v3m0 88.5v3m1-149v6m0 1v5m1 43.5v3m2-67v5m1-4v5m0 140.5v5m1-1v4m1-151v5m0 89.5v4m0 49v5m1-59v4m0 48v5m1-94.5v5m0 33v4m1-118.5v3m1-5v4m1 85.5v4m1-12.5v3m1-87.5v3m0 170v3m1-51v3m0 49v3m3-57.5v3m3-13v5m1-0.5v4m2-76v6m2-239v3m1-6v3m0 244.5v3m0 25.5v4m0 3.5v4m1-291v4m0 244.5v4m1-4v4m0 32.5v5m1-50v5m0 0v5m3-28.5v4m1-3.5v4m0 81v4m1-84v3m0 80.5v5m2-10.5v5m1-91v5m1-225.5v5m2 0v3m1-4.5v5m1 222.5v5m2 0v4m0 72.5v4m1-309v4m0 299v5m1-122.5v3m0 110.5v5m1-120.5v4m0 47v4m4 68.5v4m3-308.5v3m0 271v3m2-20.5v6m1 39v3m0 48v4m2-1.5v4m1-64v5m0 55.5v3m1-103.5v6m0 33.5v4m1-43.5v6m0 32.5v5m2-114.5v3m0 34v3m1-230.5v5m1-7v3m0 187.5v2m0 34v4m1-231v3m0 300.5v5m0 3v4m0 47.5v4m1-364v3m0 185.5v3m1-189v4m0 224v4m0 69.5v6m1 57v4m1-7.5v3m1-140.5v4m1-5.5v5m0 133.5v3m1-141.5v5m0 133.5v4m1-6v4m1-373.5v5m0 223v3m0 137v3m1-369v3m1-0.5v4m0 278v5m0 79v3m1-83.5v5m1-287.5v3m0 188v3m1 31.5v5m1-234v4m0 186v4m0 47v4m0 40.5v3m0 23v4m0 48.5v3m1-368.5v4m0 186v3m1-4.5v4m0 47v5m0 67v4m0 49.5v4m1-181.5v3m0 37v5m0 5v6m0 67v3m0 50.5v3m1-369v4m1 242.5v4m1 114.5v3m1-1.5v5m1-121.5v4m1 111v3m3-364v4m0 305.5v4m1-2v4m1-314v4m0 280v4m3-10v3m1-281.5v3m1 240.5v4m1-8.5v4m4-247v4m0 240.5v4m1-23v5m1-0.5v4m1-1.5v3m1-6v4m1-8v4" opacity="0.312"/><path d="M311.5 37v9m4-6v7m1-8v7m1-8.5v8m1-8v9m2-9v8m1-11v9m1 510v3m2 389.5v4m2-396v5m2-2.5v6m0 399v6m1-410v5m1 400v4m3-409v4m2-6v5m1 401v4m3-411v5m3-4.5v3m1-2v5m2-7v4m1-7v5m1-7.5v6m2-1v3m2 0.5v5m0 391.5v4m2-11.5v3m1-387v4m2 387v5m1-3v5m4-400v4m2-8.5v4m1-3.5v5m2-518v7m4-6.5v7m0 908.5v5m3-919.5v8m0 897.5v5m0 7v6m2-919v8m1-8v7m0 631.5v5m1-645v8m2-9.5v8m1-9.5v8m2-9v8m2-5v8m5 898.5v3m3-9v3m2 2v5m1-4v3m1-6.5v3m1-5.5v4m3-905.5v8m1-5.5v8m1-8v8m0 894.5v4m2 0v4m1-394.5v4m4 397.5v5m2-409.5v5m1-3.5v5m5 398v5m2-923.5v9m1 499.5v5m1-517v9m2 506v5m5-512.5v7m4-12v8m3 901v5m1-3v6m1-918.5v8m0 906.5v5m1-919.5v8m2-3.5v7m1-6v9m4 913v5m22-415v6m16-522v8m1 916v7m1-411.5v4m3-522.5v9m1-8.5v8m2 506v5m1-517.5v9m1 502.5v5m0 401v5m1-411.5v4m0 400.5v6m1-917v8m1 904v5m1-924.5v9m1-10v8m1 507.5v6m0 376v3m1 24v4m1-410.5v3m1-5v4m1-517v9m1 501v4m1-513.5v8m1 908.5v6m1-410.5v4m1-3v3m1-517v8m1-6v7m0 502.5v5m1-513.5v8m0 503v3m1-515v7m0 505.5v6m1-6v5m4-4v5m3-9.5v6m1-5.5v6m1-6.5v6m1-1.5v4m1-4.5v4m1-5.5v5m14 385.5v3m2-11v3m1-901v9m0 885v4m1-3v3m3-1.5v4m1-0.5v4m1 17v5m1-24v4m1-6.5v4m1-9.5v5m5-893.5v8m3-8v7m3-6.5v9m1-11.5v7m3-7.5v8m0 884v3m4-382.5v5m1-3.5v5m3-2.5v5m1-520v8m3-5.5v9m0 880v4m1-896v8m1 906v5m2-920v7m1-5.5v9m2-7.5v8m0 907.5v5m2-920.5v8m1 883.5v4m2 14.5v7m2-13.5v3m1-4.5v5m3-13.5v4m1-388.5v4m0 381.5v4m1-3.5v5m1-4v3m3 5.5v3m3-395.5v4m1-4.5v5m1-518.5v8m1 508.5v4m3-515.5v7m1-9v9m13 885v3m2-382.5v5m5-8v4m1-6.5v6m1 379.5v4m2-392v4m1-5v6m3-2.5v5m2-4v4m1-5v5m14-517v9m3 737v5m2 165.5v4m1-916.5v9m0 627.5v4m0 106v5m2-117.5v5m3-636v7m5 624v5m1-2v4m3-3v4m2-642v7m0 629v5m2-138v4m0 27.5v3m1-7v4m0 1.5v3m1 99.5v4m4-49.5v5m1-5v5m0 308.5v6m1-411.5v4m0 92v3m1 307v5m1-409v4m3 10.5v5m2 63.5v3m2-52v3m1-14.5v3m0 6v4m1-28.5v5m13 384v4m2-3.5v4m3-7.5v4m2-2.5v4m5-491.5v4m1-4.5v4m1-3.5v4m1-1v5m2-1.5v3m1-2v4m4-68v5m0 57.5v5m2-65.5v5m1 548.5v5m1-560.5v6m0 548.5v6m1-562.5v6m2 546.5v5m1-11v5m3-7v4m0 6.5v6m1-6.5v5m2-496v4m0 474v4m1-4.5v5m3 2.5v4m1-484v4m0 478v4m1-486.5v4m2-7.5v5m3-2v4m2 0v5m1 76v6m4-89.5v3m1-4v5m0 78.5v6m1-90v5m3-3.5v3m1-4v5m1-5.5v4m10-67.5v5m1-4.5v5m2 59.5v4m1-68v5m0 59.5v5m3-69v5m0 58v5m12-70.5v6m0 532v4m1 1v3m1-482.5v4m0 477.5v3m2-545v5m0 58v4m1 476v4m2-481v5m12 470.5v3m6-477v5m0 465v4m2-476v5m0 470.5v4m1-6v4m2-7v4m1-471.5v5m3 74v6m2-4v6m1-90v4m5-8v4m2-5.5v3m1-64v4m0 144v5m2 388.5v5m1-550v6m2 538v4m1-546.5v6m1 535.5v4m1-479.5v5m1 463.5v5m1-2.5v5m1-474.5v3m2 81v5m2-90.5v3m1-3v5m1-67v5m2-8v4m0 59v5m1-71v6m2-6.5v5m1 147v5m1-152.5v4m0 59v4m0 81.5v5m1-152v5m0 58v4m1-68.5v5m2-5.5v6m13-2.5v4m1-9v6m0 542v4m1-3v3m1-8.5v4m2-546v4m1 532.5v5m1-542.5v6m1 60v4m2-3v5m1-69.5v5m0 58.5v5m6-67.5v6m3-7v5m6-3.5v4m2-6.5v6m2-6v5m6 52.5v5m0 477v3m1-481.5v3m1-3v5m1-5v3m0 476v4m1-546.5v4m1-3.5v5m0 544.5v3m1-489v3m1-65.5v4m1 532.5v4m1-480.5v4m0 487v6m1-6v6m1-16v4m1-5.5v4m1 9v4m2-497v4m0 486v6m2-492.5v4m1-3v3m2-3.5v4m1-67.5v4m2-3.5v4m4-4.5v4m1-3v5m2-6.5v6m3-4.5v6m2 64v3m3-8v5m4-3.5v3m5-9v4m2-2.5v4m2-60.5v5m1 59v4m1-69.5v4m2-7v5m0 59.5v5m2-1.5v3m3-68.5v6m1-5.5v4m3 61v5m2 1.5v4m10 67v5m2-4.5v4m1-81.5v4m0 72.5v3m1 59.5v6m2 24.5v4m2-98.5v5m2 69.5v3m2-4v5m1-5v4m1-6.5v5m6 18.5v5m2-183v5m0 147.5v4m1-3.5v5m0 18v5m1-178.5v3m0 170v4m3-64.5v4m1-3v5m1-5v4m1 60.5v5m1-7v4m2-286.5v4m0 219v5m1-227.5v5m0 282.5v4m1-290v4m0 243.5v5m0 33.5v5m1-286.5v4m0 211.5v4m1 61.5v4m1-66v4m0 59v4m1 289v3m1-362.5v4m1-216.5v5m0 208v4m1-215.5v4m0 569v4m1-578v3m1-4.5v4m1 218.5v4m0 343.5v4m1-573.5v6m0 217v5m0 341.5v3m2-614v5m0 37.5v4m0 571v4m1-621.5v5m0 39v4m0 0v4m0 207.5v5m1-265v6m0 207v3m1 48v4m0-1.5v5m2-312v4m1 301.5v3m1 3v5m1-294v3m0 359v6m1-368.5v3m0 38v4m0 319.5v4m1-370v5m0 37.5v3m0 248.5v4m0 67.5v6m0 262v4m1-637.5v4m0 362.5v5m1-371v5m0 35v4m2-5.5v4m1-44.5v5m0 65.5v4m1 160.5v4m1 0v3m1 126v5m1-132.5v3m1-221.5v6m0 269v3m3-57.5v3m1-223v4m0 216v4m1-262.5v5m0 252.5v3m1-258v4m0 249v4m0 123.5v5m1-386v3m0 249v4m1 53v5m1 66v4m2-4v4m2-349v5m1 345v4m2-73.5v4m1-281.5v4m0 271v5m3-278.5v5m1-6.5v5m0 265.5v5m6 63.5v4m2-327.5v4m0 315v6m0 268v5m1-596.5v4m0 315v5m0 273v6m1-600.5v3m0 317v4m2-322v3m1-1.5v4m1-3.5v3m0 598v5m3-15.5v5m11-622v5m1-2.5v5m0 16v4m1-25v5m2 20.5v4m0 18.5v5m2-25v3m0 17v3m0 302.5v6m1-335v3m0 21.5v3m0 300v6m4-311.5v5m0 128v4m1-135v4m2 558v4m1-566.5v4m0 227v5m1-282v4m0 607v5m2-444v4m2 96v5m2-4v5m0 335v3m1-342.5v4m1-5v4m2-9.5v5m1-298v5m3 292v5m1-59v4m2-259.5v5m0 38.5v4m0 216v4m1-269v5m0 38v4m2-48.5v4m1-3.5v5m1 36.5v4m0 345.5v3m1-130.5v3m0 126.5v4m1-355v3m1-3.5v4m1-25.5v4m1-4v5m0 365v6m1-180v3m0 169.5v5m1-372.5v4m2 627.5v4m1-445v5m0 170v5m0 272.5v6m1-457.5v5m0 171v5m1-131.5v3m1-222.5v4m1-6.5v4m0 175.5v3m0 40v3m1-224.5v3m1 173.5v5m0 41v3m1-2.5v4m1-48v5m3-161v5m0 197v3m0 405v5m2-636.5v5m0 347v6m1-336v4m0 198v3m1 124v4m1-336v5m0 324.5v5m1 259v4m1-640.5v5m0 38v5m1-24v4m0 15v3m0 329v4m1-355v4m0 18.5v3m0 325v5m1-356v4m1-4.5v4m1-4.5v6m5 342v4m4-354v4m1 343.5v4m1-391v4m1 35v5m0 610v3m1-635.5v4m0 35.5v5m1 583v4m0 17.5v6m1-651.5v4m0 620v5m1-629.5v4m0 298v4m0 342v6m1-673v4m0 16.5v4m0 36v4m1 259v4m0 316.5v4m1-324v4m1-308.5v5m1 194v3m1-6v3m0 172.5v4m0 252v5m1-438v4m0 426.5v3m1-5v5m1-332.5v5m1-63v3m3 48.5v5m1-257.5v3m0 326.5v5m4-130v5m2-3v3m0 403v6m1-412.5v4m0 402.5v4m3-358.5v5m1-281.5v5m0 275v3m1-283v4m0 349.5v5m1-311v3m0 173v5m1-270v4m0 36v6m0 274v6m1 67.5v3m1-132v5m0 49v5m0 68.5v5m1-356v3m0 44v5m1-5.5v5m1-52v4m0 20v4m0 19.5v4m0 173.5v3m0 51.5v5m1-261.5v5m0 254.5v4m1-59.5v4m1-266.5v4m0 80.5v3m1 182v4m1-271.5v4m0 81v3m0 180v4m0 378v4m1-617v5m0 278.5v5m2-246.5v3m0 559v4m1-385.5v4m1-6.5v4m0 377.5v5m1 18.5v6m2-588v3m1-50v4m3 170.5v5m1 433.5v3m1-656.5v5m0 79v5m1-27.5v5m1-1.5v3m0 19.5v5m0 126.5v4m1-219.5v3m0 80.5v5m1-89.5v4m0 213.5v4m3-5v4m4-3v5m1-2.5v4m1 421.5v5m1-4v4m1-610v4m0 177v3m1-206.5v5m0 196.5v5m0 426v5m1-618v4m1 607.5v5m2-612v5m1-5.5v4m1 18v4m2-49.5v5m1 36.5v5m1 597v6m2-652.5v4m1 632v3m2-616.5v4m4 274v3m1-59v4m0 54v3m1-2.5v4m1-63.5v5m0 54v4m1-239v4m1-5.5v5m2-2.5v5m1-6v4m1 173.5v3m1-4v5m1-50.5v5m1-2v4m1-1.5v4m2-4v3m1-3v3m2-159v3m1-2v4m2 158.5v3m1-164v4m0 203v4m0 123.5v5m1-397.5v5m0 263v5m1-211.5v3m0 315v3m1-323.5v5m1 310v3m1-322.5v5m0 316.5v3m1-324.5v3m0 330.5v4m1-336.5v3m0 328.5v6m0 240.5v4m1-3.5v3m1 1.5v5m1-1v5m6-328v4m0 56.5v3m1-3.5v5m1-107.5v5m0 27v5m1-38.5v6m2-7v5m0 43v4m1-304v5m0 292v5m1-303.5v4m1 294.5v4m1-4.5v5m6-17.5v6m4 15v4m4-3.5v3m4-13v4m0 59.5v4m2-66v5m2 57v3m5-130.5v5m1-3.5v5m1-16.5v5m0 9v6m2-1v4m0 29v3m1-55v4m0 11v4m1-29v7m1 83v3m2-92.5v5m0 87.5v4m4 0.5v3m0 51v5m1-86v3m1 76v4m1-86.5v4m5-46.5v5m2-6v6m4 52v5m1-301v4m0 234.5v5m1-2.5v4m0 56v5m1-66.5v5m1-8v5m1-6v4m2-6v6m2-11v5m0 66.5v5m3-83v4m1-10v5m0 0.5v4m0 80.5v3m1-88v3m0 81v3m1-93v4m0 86v4m1-313.5v5m0 290v6m0 4.5v3m1-11.5v5m1-6.5v6m1-7v6m3-55v4m1-8v5m1 57v4m2-68.5v6m1 68.5v3m2-311.5v4m0 303.5v4m3-311v3m1 354.5v4m1-105.5v5m1-43.5v5m0 33.5v5m0 43v3m0 47.5v5m1-102v4m1-40v3m0 80v4m1-86.5v3m1 81v5m1-90v3m1 134v4m1-128v5m1-26.5v7m1 0v3m0 9v6m1 60.5v5m0 3v5m2 1v4m7-99v3m1-1v4m1-0.5v3m0 135.5v3m1-3.5v4m1-5.5v3m2-131.5v4m0 119.5v4m1-365v4m0 223.5v3m1-233v3m1 232.5v4m1-243v5m0 359v5m2-118v4m3-12v5m0 2v3m1 61.5v5m1-72.5v4m1-245v5m2 307v4m1-313v3m0 215v7m1-224.5v4m5 203.5v5" opacity="0.375"/><path d="M323.5 551.5v5m2-5v5m2 0.5v5m0 399.5v5m2-4.5v6m2-7v5m1-408v4m5 50.5v6m1-62v4m2-8.5v4m1-5v6m11-455v8m1-8.5v8m0 677.5v7m2-695v6m12-61.5v8m2-6.5v8m0 906.5v6m2-925.5v9m0 910v5m1-924.5v9m2 913.5v6m4-922.5v8m0 631v6m1-7v5m4-643.5v8m2-5v7m0 634.5v5m13 253v5m1-0.5v3m4-908.5v8m2 897.5v3m1-390.5v4m4-6.5v4m1 399v5m4-407v6m4 116.5v6m2-134.5v5m3-5.5v4m1 119.5v7m2-6.5v6m1-130v4m4-459.5v7m1-62v9m0 624v7m5 274.5v6m1-279.5v5m1-6v7m0 269.5v6m2-918v9m1 906.5v6m1-3v4m17-3v6m1-6v6m1-356.5v5m0 344v5m2-415v6m11-4.5v5m1-4.5v4m3-519.5v8m1-10v8m1-6v7m2-2.5v9m1 912v6m1-926v7m0 506v4m1-520v9m0 505v4m0 402.5v5m1-412.5v4m3 403.5v6m6-9v5m1-410.5v4m0 402.5v5m2-924v9m1 910v6m1-923v8m1 907.5v6m1-922v7m0 907.5v6m5-410.5v5m2 402.5v5m1-283.5v6m0 274v6m2-410v5m2-5v4m13-7v5m3-6v5m1-6v5m1 376v5m4 5v5m11 10.5v5m3-409v6m1-6v6m1 402.5v4m4-412.5v5m1-6.5v5m0 225.5v6m20 170v5m1-923.5v7m0 885v4m1 18.5v6m2-6.5v6m1-916.5v8m3 906.5v6m1-919.5v8m1 884v4m1-2.5v4m1 0.5v4m3-3.5v3m10 16.5v5m2-5.5v5m5-413v5m1-5.5v4m1-5.5v5m1-462.5v7m0 451.5v4m1-3.5v3m1-460v6m2 445.5v5m2-459.5v8m1 447.5v5m5 6.5v4m1 380.5v5m1-391.5v5m0 381v4m1-391v5m0 382v4m3-4v3m1-7v3m1-392v4m4-3.5v5m2 126v6m6-595.5v8m2 455v4m3-464.5v8m3-7.5v7m1-53.5v7m0 37.5v6m1-54v7m3-9.5v8m1-3.5v7m1 496v5m0 231.5v6m1-186v6m0 68.5v5m2-641.5v7m1-6.5v7m0 551.5v5m1-564v8m0 904.5v4m1-914v7m5 624.5v4m3-137.5v3m0 133.5v5m1-140.5v4m2 133v3m3-7.5v3m2-109.5v4m1-9v5m1-28.5v4m1-4.5v4m1-3.5v4m1-499v9m0 487v4m2 97.5v3m7-96.5v5m0 12.5v3m1-21v5m0 391.5v4m1-399.5v5m0 391v5m2-307.5v4m11 288.5v4m5-5v4m2-1v3m10-486v5m5 313.5v7m1 164.5v6m1-554v5m1 546v6m4-7.5v5m3-9v5m0 0.5v6m4-7v6m3-496v5m2-2.5v4m3-3.5v3m2-6.5v5m4 84.5v6m1-152v4m1 57v5m0 80v5m1-90v5m2 80.5v6m2-157v4m0 146.5v6m1-155v4m15 61v4m1-3.5v4m4-7.5v5m2-63v5m0 57.5v3m1-1.5v4m1-4v5m1-66.5v5m9 53v3m4-2v5m1-2.5v5m11 468v5m4-4v5m2-9v3m1-5v4m2-536v5m0 533v5m1-545.5v6m1 61v3m1-3v5m3-5v4m3-5v3m1 312.5v5m1-385v5m0 144v6m1-154.5v6m0 58.5v4m0 81v6m1 223v7m1-385.5v6m0 58.5v3m0 82v6m1-157v5m0 59v5m0 80v6m1-156v4m0 143.5v5m1-92v3m0 82v5m3-2v6m1-154.5v5m1 538v3m1-550v5m2 539v5m3-541.5v4m0 547v5m2-558v5m2 268v6m1-278.5v4m0 143v6m1-153.5v5m1 551v4m2-496.5v4m0 78.5v6m4-92.5v3m0 80.5v5m1 127.5v5m1-4.5v6m17 258v5m2-343.5v7m1-7v6m3-210.5v6m2-4v6m1 59v5m3-70v5m0 60v3m3-64.5v4m12 138.5v6m11 385v5m1-339v5m1-149v5m1-3.5v4m1-66.5v5m0 549v5m1-356.5v5m0 330.5v4m1-481v4m1-68v5m0 534.5v3m1-479v5m1-2.5v3m0 487v4m3-6.5v4m2-4v6m3-1v5m2-285v7m4-282v6m1-6v4m3-2.5v5m0 60v5m1-7v5m4-66v5m2 60.5v4m1-6v5m4-5.5v5m3-6.5v5m1-5.5v3m1-6v5m4-62v5m0 56v5m3-3v4m1-68.5v5m2-5.5v5m0 61v3m2-64.5v5m0 57.5v5m1-68.5v5m0 59.5v5m1-5.5v3m0 210.5v5m1-218.5v5m1-5.5v4m1-4v5m3 215.5v7m12-87.5v6m1-6v7m3-10.5v6m1 29v3m3-98.5v4m10 27v3m3-116.5v3m2 135.5v7m1-33v5m8 1v4m0 22.5v4m1-33.5v3m2 0v4m1-4v5m1-218v5m1-6v6m1 567v4m1-362v3m1-217.5v4m0 211.5v4m1 352v3m1-576v4m0 213.5v3m1 0v5m1-222.5v5m0 161.5v3m0 53.5v5m0 340.5v5m1-570.5v4m0 218v5m1-5.5v6m1-313.5v4m1 78v3m0 165v4m1-256.5v3m1 306.5v5m1-3v5m0 69v4m1-4.5v5m1-76v5m1 336.5v4m2-596.5v3m0 590v5m1-4v5m1-601v4m2-3.5v3m0 42.5v6m0 539.5v3m1-564v6m1-94v3m0 57.5v4m0 245v4m2-276.5v6m0 270.5v3m1-4v5m1-319v3m0 309.5v5m1-3v5m1-3v5m0 65v5m1-76v4m3-280.5v4m2 268.5v4m1-2v3m0 65.5v6m2-3.5v5m1-4.5v6m2-347.5v5m0 271.5v4m1-283v4m2 271.5v4m1-280v5m0 270.5v3m1-4v3m2-277.5v5m0 266.5v4m5 336.5v4m1-6.5v5m3 0v5m0-1.5v6m1-280.5v6m0 272v4m1-351.5v4m0 337v3m0 5v5m2-665.5v5m0 382v3m0 255.5v4m1-537.5v6m0 271v4m1-280.5v5m0 550.5v4m1-560.5v6m1 271.5v3m0 270.5v5m1-667.5v5m1 103v6m10 97v3m2 432v3m1 0.5v4m1 1v4m1-442.5v3m0 436v5m1-343v3m1-2.5v3m0 70v5m1-311.5v5m0 127v4m1 98v4m2 325v4m1-565v4m0 125v4m2-199v4m0 191.5v3m0 98v4m1-108v5m0 95v4m1-315v4m0 13v4m1 15v4m0 170.5v4m5-199v4m1-6.5v5m1-26v5m1 38v4m0 266.5v4m2-272.5v5m2 269.5v4m1-317v4m0 313v4m2-0.5v6m1-325v5m0 34v5m0 273v6m1-285v5m1-24.5v4m0 16v4m1-44v4m1-3v5m0 14v5m0 295v4m1-323v4m0 387v6m1-379.5v5m0 368.5v5m1-6.5v5m3 252v5m1 11v5m3-3.5v5m1-280.5v5m1-3.5v5m3 274v4m1-4.5v6m1-633.5v5m0 624v5m1-3v4m1-655.5v3m1-3.5v5m0 195.5v4m1-162v4m1-3v4m2-6v4m0 153v3m1-6v3m1 169.5v5m3-372v5m1 88.5v6m1-119.5v5m0 107v7m2-80v4m6 126v7m1 209v5m1 271v4m1-497v6m2-158.5v5m0 640.5v4m2-646v5m0 36v3m0 326.5v5m1-332.5v4m0 324.5v6m1-4v5m1-74v5m0 315.5v4m1-625.5v4m0 369v5m1-378v5m1 299v5m0 66v6m1-383v4m0 15v6m0 278v3m0 69v5m2-362.5v5m1 172.5v4m1-183.5v6m0 349v4m1-358.5v4m0 173v4m1-8.5v4m0 99v4m1-282v4m0 348v4m1-4v4m2-215v5m0 133v5m2 349v6m2-611.5v5m0 113v6m8-186v4m1 58.5v3m2-4.5v5m0 19v5m1-28v4m1-3.5v4m2 199.5v3m0 401.5v4m1-671.5v3m0 35v4m0 41v5m0 234v3m0 342.5v5m1-633.5v6m0 279.5v5m1-242.5v3m0 560.5v4m1 21.5v6m1-29.5v3m0 17v6m1-413v4m0 378v5m0 17.5v5m1-411v4m1 398.5v4m1-633.5v4m1 605v3m2-590.5v4m0 585v5m1-595.5v3m0 21v4m1-70v5m0 38v5m0 578.5v4m1-565.5v4m1-4v3m1-3.5v4m1-27.5v3m0 151v4m1-217v4m0 79v4m0 128v5m0 170v4m1-394v4m0 388v4m1-333.5v4m2-66v3m0 389v4m3-180v4m0 424v5m1-432.5v3m0 432.5v4m1-2.5v5m1-6v5m1-621v5m0 608.5v4m1-434.5v5m1-184.5v5m1-26v4m0 626v4m2-633v4m0 627.5v3m1-632.5v3m2 98.5v5m1-106v5m1-5.5v4m0 649v5m1-661.5v5m0 37.5v4m1-4.5v3m1-47v5m1-6.5v5m0 36.5v5m1-48v5m0 38v4m0 602v5m1-14v4m1 5.5v6m2-21.5v3m1-630.5v4m0 14v4m1-23v4m1-5.5v5m1-4.5v4m5 239v3m1 54v4m1-3v5m1-108v3m0 41.5v4m0 54v4m1-110v4m0 100v5m1-109v5m0 169.5v4m1-130.5v3m0 53v4m1-2.5v5m1-4.5v5m1-104v3m2-161.5v5m2 326.5v5m1-395.5v4m1 57.5v4m0 327.5v4m1-2.5v4m3-375v4m0 377v4m1-5v4m1-386.5v4m1-24.5v5m1 12.5v4m0 358v5m1-105v6m1 27v5m1-1.5v5m1-5v6m1-35v5m0 25.5v5m0 327.5v5m2-8.5v4m1-5.5v4m3-333v5m3-41.5v7m2 31.5v5m1-50v5m0 38.5v4m4-63.5v5m1 51v5m1-6v6m13 8v4m2-7v5m1 60.5v5m1-68.5v4m0 61v3m2-110v5m2-43v4m2-2v3m1 72.5v5m4-84.5v6m0 76v4m1-7v5m1-6v4m1-2.5v5m3-86.5v5m7 84.5v4m4-71v5m6 56.5v5m2-44v5m5-35.5v5m4 71v4m3-22.5v6m1 12v4m1-95v6m0 77.5v5m3-85v5m0 79v5m5-76v5m1 53v6m2-4v5m1-59v6m1 51v5m1-3.5v5m3-80.5v3m2 84v4m1-52v4m3 25v6m3-62.5v6m2-21.5v4m0 15v6m1-3v5m1-16.5v5m10-9v4m2-5.5v4m1-6v5m2 59.5v6m3-5v6m7-55v5m3 66v4m1-51v6m0 41.5v4m2-84.5v5m1-26.5v6m0 35v6m1-50v6m0 39v5m1-24.5v4m5-18.5v6m1-8v4" opacity="0.438"/><path d="M315.5 584v5m9-37.5v4m0 39.5v6m0 78v6m1-585v8m1-9.5v7m0 494.5v6m3 180.5v5m1-4.5v5m1-235v5m0 122.5v5m0 96v6m1-5.5v7m0 168v5m2-410v6m0 45v6m0 347.5v5m1-5v6m1-410.5v6m0 48v7m1-59v5m1 398.5v4m2-358v5m0 345v4m2-859.5v6m1 853v6m11-867.5v7m2-7.5v6m1-7v6m2-5.5v6m3 684.5v6m1-697v8m5 855.5v5m3-180v6m1 168.5v5m2-918.5v9m1 905.5v5m3-409.5v4m3-517.5v8m0 504v4m1-1.5v5m1-2.5v5m3 122.5v5m1-131v5m5 0v5m9-6v4m1-6.5v4m1-7v4m1-5v6m4-3.5v5m0 400v4m2-6.5v4m3-2v5m1-408.5v5m0 399v5m2-410v4m0 400.5v5m2-414v5m0 400.5v6m1-412.5v4m0 402v6m1-283.5v6m10-591v8m0 447.5v4m0 124v7m1-137.5v4m1 124.5v5m1-586.5v8m0 672.5v7m1-237v5m0 226v6m1-107.5v6m2-2v5m0 96v6m1-107v6m1 272.5v7m2-9v5m1-3v5m6-407.5v5m0 125v5m2-132.5v5m5 402v6m4-358v7m2-60.5v6m0 50.5v6m1-62.5v3m1 227v7m1-7v5m0 167.5v6m2-412.5v5m1 52.5v6m0 169v6m1 172v5m1-412.5v4m2 51v5m1-62.5v3m0 225.5v7m2-235v4m4-7v5m1-4v4m1-5v4m3 406.5v5m1-409.5v5m2 400.5v5m2-8.5v6m1-411v5m1-3.5v4m2 400v6m3-7.5v6m4-4.5v6m1-411v4m5 397.5v5m2-279.5v7m0 269.5v6m1-281.5v5m0 272v5m1-181v6m1 169v5m1-284v5m16-134v5m0 125v5m1-131.5v3m2 126.5v5m6-136v5m1 401v5m1-4.5v6m2-867v6m0 857v6m3-870.5v7m4 454v5m1-8.5v5m3-5.5v5m1 401.5v6m1-3.5v4m3-413v5m1-5v6m4 223.5v5m0 170.5v6m3-181.5v6m5 172.5v5m7-921.5v7m1-5v7m0 881.5v4m2-6v4m2-898v8m0 886.5v5m1-387v5m0 398v4m2-2v6m2-920v9m0 907v6m3-185v7m0 169.5v5m4-177v6m8 172v5m7-3.5v5m1-4v6m2-10v6m4-8.5v5m1-413v5m2-461.5v6m2 449.5v4m2-457v7m1-10v7m0 453v4m2 3v4m0 225v7m1-5.5v5m0 146.5v4m4-158.5v7m0 151.5v3m1-2.5v4m1-165v5m1-696v7m1-6.5v8m1 447.5v5m4-2v4m0 125.5v5m3 271v5m1-6v6m2-868v6m3 683v6m2-694.5v7m2 679v7m1-693v7m5-62.5v9m0 632v5m2-8v7m1-638v8m0 622.5v6m1-638.5v9m0 735v5m1-188.5v6m1-8.5v6m0 70.5v4m3 275v4m9-280.5v5m1-141.5v5m1-5.5v4m0 56.5v6m1-67v4m0 56v7m1 66.5v5m2-2.5v5m1-137v5m6 398.5v6m4-9v5m1-6v5m2-8v6m1-406.5v5m1-2v5m0 16.5v4m2 375v6m26-564.5v4m3 1v4m1-2.5v6m1-3v6m4 372.5v5m2-5v5m3 168.5v6m1-184.5v7m2 169v5m2-2v6m2-561v6m3 57v4m2-70v6m4-2.5v6m4-3.5v5m2-1v5m3-7v5m0 142v5m1-5v7m11 51v6m7-7.5v6m3-7.5v7m9-207.5v5m4-7.5v5m1-4.5v4m0 198v6m9-203v5m3-10v4m13 383v6m3-325v4m2 310v7m1-385.5v6m0 376v5m1-320.5v4m2-72v6m0 373v5m1-321v4m0 80.5v6m1-90v4m1-67v4m0 143v7m1-90v5m1 310v7m2-321.5v3m0 82.5v5m1 223v6m2-9.5v7m2-237.5v5m3-3v6m0 401.5v4m2-9v5m3-557v6m1-3.5v5m0 547v7m2-558.5v5m1 548v6m1-560v5m1-5.5v5m1 57.5v5m0 206.5v6m3-214v3m0 79.5v6m2-8.5v5m0 51v6m1-9.5v5m1-147v5m0 81.5v5m0 49v5m0 67.5v6m4-127v5m0 48.5v7m3-62.5v5m4-4.5v6m1-5v5m1-5v7m8 223.5v7m2-242.5v5m1-4.5v5m1-5.5v6m1 53v6m1-5v5m2-207v6m0 199v6m1-209v5m4-4.5v4m3 550.5v6m2-9.5v6m1-4.5v5m2-5v6m2-8v5m1-410.5v5m4-8v7m2-4.5v5m1 51.5v6m3-13v6m1-5.5v7m1-208.5v5m1-4v5m0 199.5v5m2-60v5m1-5v6m1 390.5v4m1 3v5m1-559v4m0 200v5m2-5.5v6m1-5.5v5m2-209v5m0 199.5v5m1 169v6m1-387v4m1 272.5v6m1-4v6m0 97.5v6m1-108v7m0 272v5m2-352.5v6m0 64v7m0 269.5v6m1-179.5v7m2 167.5v6m8-561v4m0 58.5v5m0 485.5v6m1-559.5v4m0 61.5v4m1 488v4m1-493v5m1-68v4m0 143.5v6m0 401v5m1-558.5v5m1-6v4m1 548v5m6-4.5v6m4-9.5v5m2-1v5m1-4.5v6m1-558v5m0 548v4m3-7v5m2-555.5v5m1 550.5v6m1-285v7m3-4.5v6m1-284.5v6m0 200v6m2-145v4m4 215v7m2-7v5m4 275v4m1-366.5v6m1-7v6m4-7.5v5m2-68.5v4m0 58v5m1-5v6m2-3.5v5m5-73.5v4m9 57.5v6m12 1v4m1-2v5m2-33.5v5m3-219v5m2 210v4m7-300.5v3m0 35v5m1 263.5v3m2-310v5m1-5.5v5m0 86v6m1-5v4m3-6v6m1 217v5m0 69.5v5m1-391.5v4m0 649.5v5m0 1.5v5m1-15v4m1-344.5v5m1-316.5v5m0 57v4m0 246v6m0 336v5m2-564v4m0 215.5v5m1-209.5v5m0 200.5v5m1-317v4m1 35v4m1-44v3m2 0.5v3m1 33v4m0 268.5v5m1-279v6m1 338v5m1-384v3m3 304.5v4m2 0.5v4m1 347v5m2-1.5v6m2-9.5v6m4-673v4m2 306v5m2-315.5v4m0 307.5v3m0 345.5v6m1-667v4m0 656v5m2-9v4m1-351v4m0 341.5v3m2-656.5v3m0 61v4m0 41.5v6m0 56.5v6m0 479.5v4m2-345v5m0 331.5v5m0 7.5v5m2-665v3m0 661v6m1-668v5m0 640.5v4m2 1v5m1-551v5m0 548v6m5-353v5m1-5.5v5m1 67v5m1-77v4m0 69.5v4m1-178.5v4m0 97.5v4m0 68v5m1-6v4m1-3.5v4m0 257v4m2-437v5m0 98v4m1-104.5v5m0 170.5v5m2-78v4m1 67.5v4m1-179v3m1 99.5v3m1-145.5v6m1 36v5m0 96.5v5m1-4.5v5m2 324.5v5m1-478v6m1-162v4m0 14.5v5m0 611v4m1-620.5v5m0 611.5v5m2-640.5v3m0 14.5v5m5-45.5v5m1 35v4m2 266.5v5m4-267v4m1 346.5v4m2-7.5v5m1-79v3m1-3.5v4m1-300v4m0 293v4m1-281v4m1-23v4m0 152v6m2-142v3m1 603.5v3m1-632v4m0 622.5v3m2-629.5v3m0 628.5v5m1 8v6m4-0.5v4m2-4.5v5m3-653v4m2 196.5v4m0 447.5v5m2-3v6m1-657.5v4m0 646.5v6m2-678v5m1-6.5v4m0 14v5m1-5v4m0 38.5v4m0 150.5v4m1-218v5m0 108.5v5m0 270v5m1-374v4m0 90.5v7m4-118.5v4m0 106v7m0 24v6m1-146.5v3m0 660v6m4-532.5v7m1 24.5v7m0 209v5m2 271v6m1-499v6m1-159v4m0 640.5v4m1-649v4m0 631.5v5m0 2.5v6m1-530.5v6m0 244v4m1 260v4m2 16v6m1-611.5v4m1 328v4m1-335v5m1 581.5v3m1 1v4m2-480.5v6m0 135.5v6m1 66v4m1-77.5v5m1-108v5m1-45.5v5m0 136v3m0 71.5v4m1-7.5v6m1-79.5v3m1-280v4m1-3v4m0 131.5v7m1 210v4m2-77.5v4m1-140v5m0 483.5v5m8-610v4m1-4v3m1 601.5v5m1-612.5v5m0 253v3m2-207.5v5m0 144v3m0 53v3m0 345.5v5m1-409.5v4m0 398.5v6m1-558v6m2-1.5v6m1 550v5m1-350.5v5m0 168v6m1-177v4m1-62.5v4m1-234v5m0 276.5v4m1-285.5v4m0 276.5v4m0 342.5v6m1-635v4m0 598.5v4m1 20v6m1-652.5v4m1 626.5v3m2-6.5v5m2-436v3m0 426.5v3m1 0v4m2 0.5v3m3-438v5m2-4.5v5m1-226v5m0 140.5v6m2 242.5v5m1-254v6m0 243v4m1-253v7m0 242.5v4m2-3.5v4m1-376.5v4m1-3v5m5-2.5v4m1-4v5m4 85.5v6m1 544.5v6m2-15v4m2-551v6m1-4v6m0 531v3m0 15.5v5m1-652.5v5m4 16v3m4 274v4m1-3v4m5-5v4m1 66.5v6m1-3.5v5m5-333v4m0 605.5v6m1-675v3m2-2v3m1-2v3m0 57v3m1-61.5v3m1 58v5m1-63.5v4m0 224v5m2-237.5v5m0 393.5v5m1-8.5v5m1-180.5v3m1-205.5v3m2 99.5v5m0 156.5v6m1-5v5m2 28.5v6m2-206.5v7m1-7v5m1 194.5v5m4-8.5v6m3-84v5m1-6.5v5m0 34.5v6m2-23v6m0 50.5v6m1-4v5m1-62.5v6m1 57v5m1-11v4m0 4.5v4m10-1v5m1-5v5m6-43.5v6m0 32.5v4m4-81.5v3m4 17.5v5m0 56.5v3m9-89.5v6m4 37v5m1-48v6m0 78.5v5m1-86v5m2 16.5v6m6-15.5v5m6 22v4m0 33.5v4m2-47.5v5m1-7.5v6m0 34.5v5m6 0v4m1-2v3m3-85v5m0 78v4m2-42.5v5m1-45v6m4 29v6m1-46.5v6m1-5.5v6m0 69v5m1-58.5v5m1-25.5v5m0 70.5v6m1-80v6m2 70.5v6m3-6v4m1-78.5v4m4 35.5v6m1-29v5m0 18.5v6m0 56v6m1-114v5m0 39v5m2-51v6m10 9v6m9 117v4m1-71.5v5m3-0.5v4m1-60.5v6m1 46.5v6m1-56v6m3-27v6m1-4.5v7m2-6.5v6m0 69.5v6m1-85.5v6m1-9.5v6m0 37v6m1-33v6m2 19.5v5m2 30.5v4m1-56.5v6m1 49v5" opacity="0.5"/><path d="M311.5 583v6m0 364.5v6m2-4v5m1-4v5m2-374.5v4m6 91.5v6m1-587.5v7m0 573v5m1 96v5m2-106v6m0 95.5v7m0 169.5v5m1-867v8m0 681.5v6m2-107v5m4-85.5v6m0 350v6m2-357.5v6m0 67v6m2-591.5v8m0 857v5m2-867v8m2 848.5v5m4-862v6m0 853.5v6m6-864v6m3 582v6m2-8v7m0 95.5v7m4-697.5v7m1 686v5m1-695.5v6m2 676v5m13-230.5v4m0 123.5v6m4-10v6m1-3.5v7m1-3v6m1-130v5m0 121v6m2-133.5v4m2-2v4m1-2v4m0 49.5v5m1-57v4m0 48.5v6m6-61v3m11 400v6m5-9v7m1-409.5v5m2 398v6m2-411v5m4 119.5v7m1-5.5v6m1-8.5v7m1-8v6m2-9.5v6m2-581v8m0 571v6m1-134v5m0 123.5v5m3-136.5v4m1-5v5m1-455v7m0 571v5m1-582.5v7m3 503v6m0 170v5m6-230.5v4m0 124.5v6m4 270.5v5m1-412.5v6m2 405v4m1-871.5v7m0 859v6m1-354.5v6m2-518.5v6m0 451.5v4m3 400.5v6m1-412.5v4m1-463.5v7m0 507.5v7m0 345v4m2-870.5v7m2-7v8m2 855.5v5m2-409v5m0 226v6m1 168.5v5m1-412.5v5m0 50v6m0 170.5v6m1-239v4m2-4.5v4m0 402.5v6m2-412.5v4m2-461v8m5 449v5m1-3v4m6 401.5v5m1-4.5v6m12-8.5v5m4-284v7m0 97.5v5m1-3.5v5m2 168.5v4m1-283.5v5m20-131v4m1-3.5v4m1 122.5v6m6-133v5m1-4.5v5m4-6v6m0 397v6m1-866v8m0 450v4m1-459v6m0 450v4m0 399.5v6m2-866v8m3 445v5m0 400.5v4m1-1.5v5m3-408v4m3 398.5v7m2-6.5v5m1-182.5v7m2-6.5v7m0 170.5v6m3-185.5v6m3 171.5v6m2-3v5m1-3.5v6m1-4.5v6m5-9v6m1-8v5m10-181v5m0 169.5v5m2-182.5v7m1-4.5v6m3-5v6m8 174v7m1-5.5v4m2-7.5v6m5-182v6m7-242.5v5m4-457.5v7m1 446.5v5m2-459v7m0 454.5v4m1-464v6m4-13v8m2-5v8m1-7v8m2 680.5v6m7 171v5m1-281.5v5m1-7v7m2 270.5v4m1-2.5v6m1-872v7m0 860.5v5m3-8.5v5m2-867.5v6m5 581v5m6-143.5v7m3 54.5v7m3-3.5v6m3-10v7m8-7.5v6m1-6.5v6m3-64.5v5m7 402v5m4-416v6m1-5v6m4-2.5v6m7 122.5v7m3-9.5v6m1-4v5m1-4v5m4 97v7m9-393.5v5m3-1v4m11 379.5v5m2-387.5v4m3 378v7m1-6v6m1-385.5v4m8-4.5v6m1 550.5v5m3-563v4m1 552v5m2-554v4m3-6v6m2-6.5v4m1-4v5m1-7v4m6 376v6m1-180.5v7m3 170.5v7m1-185v5m3 67.5v6m1-78v6m1 67.5v7m10-277.5v5m2 195v6m2-8.5v6m2-6.5v5m3-6.5v7m1-5v6m12-207.5v4m7-2.5v5m1-2.5v4m1 375v7m2-384v5m4-10v4m2-0.5v5m1-7v4m2-7v4m0 375.5v5m1-5.5v5m1-3.5v5m1-384.5v5m3-4.5v5m2 371.5v6m7-240v5m2-155v5m0 550.5v5m2-352.5v6m3 346v6m1-413v5m3 400.5v5m1-410.5v6m0 48v6m0 346.5v6m1-559.5v4m0 144v7m1 49.5v5m0 68.5v6m1-80.5v7m2-153v5m0 80v7m2 50.5v5m1-143.5v3m1 136.5v7m1 67v6m1-218.5v5m0 134.5v7m2 167.5v6m1-237.5v5m1-6v5m1-3v4m1 400v6m2-555v5m0 548.5v5m2-561.5v5m0 143v5m3-3.5v6m3-8v6m4 399v6m1-5v5m1-410.5v6m0 400v5m3-353.5v7m0 344v5m1-6.5v6m2-560.5v6m1 273.5v6m2-280v4m0 273.5v5m0 272v5m2-183.5v5m2-236.5v5m0 225v7m1-107.5v7m0 270v6m5-414v5m0 402v7m2-417v6m0 402v6m1-5.5v5m1-412.5v6m2 226v6m1-182.5v7m1-65v7m1-156v5m2 550.5v6m3-354.5v6m1-7v7m3 342v5m1-353.5v5m1-211.5v5m1-5.5v5m1 552v6m1-181.5v6m1-386v5m1 196.5v6m1-208.5v4m1 552v4m1-555.5v5m0 375v5m1-384.5v5m0 273v6m2 268v7m2-355v7m0 64.5v6m1-77.5v7m3 345v5m2-6.5v5m1-5.5v6m2-7.5v5m1-493v5m1 312v6m2-237.5v6m1-6v4m1-6.5v5m3 404.5v5m1-357v7m0 169.5v5m2-385.5v6m1 198.5v6m0 343v6m3-358.5v7m1-6.5v7m0 344.5v5m1-354v6m3 345.5v5m1-6v5m6-349.5v5m1-8v7m0 67.5v7m1-282.5v4m0 199v6m2 67.5v6m1-76v6m0 66v7m3 100v6m1 170.5v6m4-282v6m2-4v5m2-9.5v7m4-152.5v4m7 57.5v5m1-76.5v6m6 60.5v5m1-6v5m21-306.5v5m0 634v4m2-2.5v4m3-5.5v5m5-570.5v4m3-2v6m3-5v4m1-6.5v6m0 565.5v6m2-5v5m1-577.5v6m1-8v4m0 221.5v4m1-317.5v5m1 104v6m1-19.5v4m1 10.5v7m0 21v7m1-124v4m2 290v4m1-276v4m1-5.5v4m3 270v4m1-3.5v3m0 345v4m5-354v5m3 353v6m1-183.5v6m3-10.5v7m1-494v5m2 654.5v6m3-6.5v5m2-358.5v5m1-316.5v5m1-4v4m0 305v5m1-313v4m0 164v7m1-2v5m2-175.5v5m0 105v5m0 272.5v4m1-280v5m1-2.5v5m0 56v5m1-3v6m0 465v4m1-260.5v6m1-3.5v4m0 272v4m1-560.5v5m3-5v5m1-4v5m3 96v4m1-4.5v5m1-5v3m2-2v3m0 436.5v4m0 4v6m2-278v5m0 250.5v4m1-258v4m2-214.5v7m0 133v4m1-146v7m1 29.5v4m1-42.5v5m2 214v4m1 96v7m1-110v5m1-221.5v6m0 137.5v5m1 169v6m1-7v7m1-324v6m0 208v6m2-394v4m0 659.5v4m1-667.5v4m1-4v5m0 14v4m1-4v5m0 639.5v5m1-666v4m0 32.5v5m1-46v5m4 376v4m1-74.5v5m1-274v5m0 339.5v4m2 3v5m1-74v3m3 341.5v5m1-281.5v3m2 99v7m1-178.5v4m2 166.5v7m3-8v6m0 167.5v6m3-632v4m2-1.5v3m0 625v4m2-4.5v5m1-655v5m1 369v4m1-76v4m1-2v6m1-308.5v6m0 196v3m1 98.5v4m2-305v4m0 196v5m2-205v5m1-7v4m2 293.5v3m2-317.5v4m1-4v3m1-1.5v3m4 107.5v5m0 375v5m1-385.5v5m0 25v6m0 516.5v6m1-654v4m2-4.5v5m0 119v5m0 519v4m1-281.5v6m2-9v5m2-257v7m0 243v4m2-247v6m0 244v4m0 272v4m3-521v5m3-0.5v6m0 238v6m3-363v3m1 135.5v5m0 136.5v4m1-284v3m0 135.5v6m0 208.5v4m1-221v7m2-148v5m0 131v7m1-8.5v7m2 136.5v5m2-143.5v7m0 135v3m0 348v6m1-499v7m1-160.5v4m1 645.5v4m1-653v3m0 471.5v6m3-484.5v5m0 471.5v5m1-481v4m2-2v4m0 647.5v6m1-562.5v5m1 371.5v7m1-386v6m0 550.5v4m1-561.5v6m1 59.5v6m1 135.5v5m1 345v4m2-175v7m1-4v5m1 172.5v6m1-180.5v5m1-7.5v7m1-10.5v6m4-465v5m1-23v5m0 15v3m1-5.5v5m0 624.5v5m3-653.5v4m2-5.5v4m2-0.5v3m0 643.5v6m2-280v5m1-254v7m2 240.5v4m2-356.5v4m0 99.5v7m1-112v4m1-4v4m1 102v6m2 31v7m1-5.5v5m2 485.5v4m5 2.5v5m1-186.5v5m1 170v4m1-8.5v4m1-184v5m1-386v5m1-7.5v7m1-5v6m0 550.5v6m1-651.5v4m1-3v3m1 646v5m2-635v6m0 344v6m1-355.5v5m10 343.5v5m4-372v5m1-5v5m0 369v4m0 274.5v6m1-615v3m0 327.5v5m2-378v5m2-6.5v6m4 0.5v4m0 375v4m2-402v4m0 14v5m1 198v4m1-209v3m1-22.5v5m1 214.5v5m3-105.5v5m3-7v7m0 189.5v4m1-38v6m0 27.5v5m1-4v5m3-203.5v5m1 198.5v6m2-12v5m0 4v5m1-49.5v4m2 25v6m1-78.5v5m0 37v5m0 27v6m2-72.5v4m0 34.5v6m2-31.5v5m1-2v4m1-5v5m0 57.5v6m2-16v5m3 12v5m1-4v5m4-45.5v7m2 22.5v4m1-78v5m3 103v5m1-117.5v5m1-6v5m0 39.5v4m0 59v7m1-6.5v5m2-28v5m2-3.5v5m2 0v4m3-50.5v6m0 23.5v5m1-33.5v6m0 59v5m4-69.5v7m1-44.5v6m0 14.5v5m1 15.5v6m1 26v5m0 4.5v4m1-15v5m0 3.5v5m1-45v6m2-43v5m3 73v4m1 21v6m1-98v6m1-7.5v5m1 82.5v6m1-6v6m3-106v6m1 73.5v4m1-88.5v6m1 36v6m1 22v5m0 1.5v5m1-14.5v6m1-8.5v6m0 2v4m3 6v5m4-87.5v5m3-2.5v5m0 76.5v4m1-10.5v6m2-79.5v6m0 37.5v6m1 54v6m4-93v5m2 59.5v4m1-64v4m1-3.5v4m2-27.5v5m6 98.5v7m9-35.5v6m2-9v6m3-11v4m5-54v5m5 43v6m3-2v5m1-60v6m4 52v6m2-60.5v5m0 82.5v6m1-69.5v6m1-30v6m0 19.5v6m0 23.5v5m2-38v4m0 25v6m3-67.5v6m4 52v6m2-56.5v5m0 51v5m1-62.5v5m1-27.5v6" opacity="0.562"/><path d="M310.5 952.5v6m7-369.5v6m1 364v5m1-5v6m1-373.5v5m2 189.5v5m1-184.5v7m1-512.5v7m1 671v7m5-100.5v6m2-87v5m0 1.5v7m1 63.5v5m1-76v5m0 66v5m4-589v7m0 508v5m1-8v6m1-517v8m1 501.5v5m6 341.5v6m5-275.5v7m2 97.5v7m1-7.5v6m2-6v7m1-695.5v6m0 684.5v6m1-3.5v5m1-5.5v6m3-13v6m2-181v6m0 169v5m5-180v5m1-4.5v6m1 169.5v7m1-182v5m1 171.5v6m1-5.5v7m2-183v7m2-66v5m1-6v6m0 123.5v5m3-587.5v6m1 511v6m1-60v4m2 48.5v7m1-520.5v7m4 511.5v6m3 168v6m2-5.5v6m0 169.5v6m1-413v5m0 227.5v6m1-4.5v7m1-239v5m0 125.5v5m0 98v5m0 169.5v5m1-183.5v7m1-110.5v7m2 95v5m4-6v5m19-692v6m2-8.5v7m2-7.5v6m0 575v5m2-82.5v7m1-5.5v5m1 168.5v7m1-107v7m1-78v6m2-1.5v5m2-5v5m2-2.5v6m2-58v5m1-5v5m6 51.5v7m1-523.5v8m0 856.5v6m1-409.5v4m0 400v5m2-410v4m0 51.5v5m1 344.5v6m1-411.5v4m0 50v7m1-521v7m0 860.5v4m1-411v5m1-463.5v6m3 448v5m0 51v7m1-7.5v5m0 345.5v6m1-182v5m1-691v6m0 858.5v6m1-872.5v8m1 509v7m0 168.5v7m3-183.5v6m1 165.5v6m1-688v8m0 502v7m0 166v5m2-177.5v7m5-522.5v7m0 449v5m22 222.5v7m1-8.5v7m5-103v5m1 96v6m2-5v6m6-179.5v7m11-517v7m0 501.5v6m3-516.5v8m2 444.5v5m1-459.5v7m1 855v5m3-3v5m1-410.5v5m1-460.5v8m0 450v4m0 401.5v5m1-7.5v6m4-411.5v6m1 401v5m2-414.5v4m6 0v4m0 402.5v5m3-868.5v6m3-5v6m1-7.5v6m1 679v5m0 173.5v5m2-871.5v8m9 859.5v6m1-283v5m1-7v5m0 273.5v5m3-417v5m2-460.5v8m3 450v4m1-460.5v8m0 451.5v4m4 45.5v5m3 173v6m2-695.5v8m5 507.5v6m8 347.5v6m2-183v7m1 170.5v5m1-874v8m4-6.5v7m1 854.5v6m1-868v8m2-10v8m0 446.5v4m5 235v7m4-703.5v6m0 692.5v6m9-115.5v7m1-5v7m3-4.5v6m3 267.5v6m1-283v6m1-3.5v5m1 96v6m1-695v8m1-7v8m1 679v6m1-6v7m0 168.5v4m3-175v5m2-701.5v8m3 581.5v7m7-144v6m1-9v7m0 62v5m4-8.5v5m1-76v5m1-7v6m4 69.5v6m12-77v5m0 65v7m3-75.5v5m0 407.5v5m1-348v5m1-6.5v7m0 332v4m1-5v4m0-1v6m4-407v6m0 54v5m8 164v6m1-109v7m2 271.5v5m1-2.5v5m8-415.5v7m4-5.5v5m2 46v7m1-64.5v5m1-152.5v5m0 142.5v6m4 132v7m1-281v5m0 197v7m0 67.5v6m1 94.5v5m1-105v5m1-8v6m1 94v7m2-105.5v6m0 95v7m1-236.5v6m1 220.5v7m2-9v6m1-383v5m1-3.5v6m1-6v6m0 143v5m1-5.5v6m2-155v5m0 144v5m1-155.5v5m1-6.5v5m0 275v7m1-286.5v5m5 147v6m3-156v6m0 145.5v4m1 401.5v6m11-559v5m0 376v5m0 171v5m3-415.5v6m0 50.5v7m1-63.5v6m0 226v7m1-181v6m0 170.5v6m0 168.5v4m1-410v7m1 49v7m0 68.5v5m1-7.5v6m1-136v5m0 123.5v6m1-285v6m1 198v7m1-208v4m0 271.5v7m3-79.5v7m2-6.5v7m4-6v6m2-1v6m3-216v5m0 198.5v7m1-210.5v5m1-3v4m0 198v5m0 67v6m3-283v6m0 196v6m7-203.5v6m2-4v4m1-7v5m2-7.5v4m2 201.5v7m0 343v6m1-410v5m1-154.5v4m3-2v5m2 374v5m1-4v6m2-380v4m2-8v4m9-7.5v4m4 376v5m6 163v5m5-411v6m1 50.5v6m1-4.5v7m0 342.5v5m1-3.5v6m2-354v6m1-62.5v5m2-4.5v6m0 399.5v6m1-7v5m2-283.5v7m1-2.5v7m1 269.5v6m1-283.5v5m0 96v6m1-110.5v7m3-10v7m5 99v7m5-384.5v4m1 549v6m3-6v6m1-412v5m0 225v7m1-235v4m0 224v6m1-2v5m0 167v7m1-410v5m0 399.5v5m1-411.5v5m2-9.5v7m3 52v6m3-4v7m4 341.5v6m1-357.5v7m1-2v5m1 69v6m0 271.5v5m2-180v7m1 166.5v5m1-356v6m0 167v6m2-233v5m0 224.5v5m1-235.5v6m1-7v6m0 49.5v7m0 342v6m1-411.5v6m1 123v6m0 96v6m0 170v5m5-357v7m1 66.5v5m0 97v6m2-386v5m1 195v5m0 67v5m1-134v6m1-6v6m1 52v6m0 66.5v7m1 272v5m1-558.5v4m0 144.5v6m2 120.5v5m1-78v6m4 66.5v6m2-134v5m0 52v6m2-9.5v7m0 67v5m1-135v5m1 227v5m1-381.5v4m0 143.5v5m1 55v5m1-6v7m0 170.5v6m1-8.5v6m1-182v6m1-5v5m0 344v4m2-281v6m2-76.5v5m0 344.5v5m1-412.5v5m0 123.5v7m1-134v7m2 118.5v5m2-132.5v5m2 403.5v6m1-180v7m1 167.5v6m1-6v4m2-557.5v4m0 548.5v5m1-412v5m0 403.5v5m1-559v5m0 142v5m0 227v5m1-384v4m0 549v6m1-559.5v4m0 549.5v5m1-357v6m2-210.5v5m0 199.5v6m0 344v6m1-6v5m9-2v6m1-3v5m2-6v6m4-280.5v5m1-282.5v4m0 375v7m1-385.5v6m1-4v5m1 277v6m1-6v7m1-133v5m0 220v6m1-105.5v5m0 272v5m1-355.5v7m1 66.5v6m1-76.5v7m1-5.5v6m2 343.5v4m9-369.5v5m2-6v5m3-7.5v7m4-68.5v5m4 53.5v5m1-5v7m4-2v6m1-3v6m7 315.5v6m7 3.5v5m3-644v4m5 68v6m2-5v4m0 10.5v5m1-17.5v4m3 12.5v7m1-7v7m0 548v4m2-495v6m0 137.5v5m0 342v4m1-574.5v5m1 217v3m1-316.5v3m0 656.5v6m2-646.5v5m2-22v5m0 658v6m1-668.5v4m0 131.5v7m3-124.5v5m1-23v5m0 657v5m1-648v5m0 639v5m1-182v7m3-453v3m1 440.5v7m8 178v4m2-7v6m2-673v5m0 659v4m2-668v4m0 306v4m0 346.5v5m1-665.5v4m0 100.5v6m0 549v6m1-560.5v5m0 200v3m1-208.5v5m2-12v6m0 203v4m0 344.5v6m3-666.5v5m0 105.5v6m0 199v4m1-1v5m2-316.5v5m0 168v6m0 206v5m3-211.5v5m1-178.5v3m1-4v3m1 169v5m6-162v5m1 638v6m1-494v5m3 136v6m1-108v3m0 100v5m2 349.5v4m1-455v3m4-46v6m0 486.5v5m2-496v6m1-8v7m0 487.5v4m1-181.5v7m1-323v6m3 205v5m0 98.5v7m0 166v6m1-650v4m2 641.5v5m1-667.5v5m0 32v5m1 344.5v4m0 270.5v6m2-630.5v4m0 615v6m1-7.5v5m1-497v7m1-133.5v5m0 123.5v5m2 0v5m1-135v5m0 617.5v5m1-2v6m2-279.5v4m2 92.5v7m2-4.5v5m1-318.5v6m0 483.5v5m2-179v5m2-7.5v6m1-457v4m0 127v7m0 314.5v5m1-458.5v5m1 445v6m1-8v6m2-454.5v5m3 346.5v5m3-375v4m4 370.5v5m1-77v3m1-103v3m1-4v4m0 95v4m0 349.5v5m2-362.5v4m1-320.5v4m0 108v6m1 99.5v4m0 94v5m1-104v5m0 275v6m1-385v5m0 374v7m4-391v6m2 57v5m1-6.5v5m1-161.5v6m0 148.5v6m1-69v6m1 550.5v6m1-533.5v7m0 27v6m1-71.5v5m1 23.5v6m1 29v6m1-5v6m5-27.5v7m0 26v6m9-74v5m3 51.5v7m6-158v5m3-6v6m0 644.5v6m1-285v4m1 100.5v6m0 168v5m1-654.5v4m0 647.5v5m6-184.5v6m1-383v5m0 373.5v5m1-3.5v5m2-104.5v5m4 2v4m4-385v5m2 641.5v6m1-652.5v4m2 643.5v6m2-654.5v3m1 642.5v5m1-4v4m4-491v6m0 210v4m1-255.5v7m0 28.5v6m0 483v5m2-635.5v5m0 101v7m0 241v5m1 96.5v6m0 169v6m2-5v5m1-281v4m1-252v7m0 345v5m1-352v5m0 238.5v4m1 276v6m1-179.5v6m0 167v6m2-560v5m0 270v5m0 98v7m0 169.5v4m2-556.5v6m1 552.5v4m1-182v6m2-389.5v6m0 370.5v6m1-356.5v5m1-37v5m1 368.5v6m2-105.5v4m7 102.5v5m1-4.5v6m2-7v6m1 170v6m4-7.5v5m1-655.5v5m0 468v6m1-478v4m1-4v4m1 649v5m1-282v4m3-1.5v4m1-5.5v5m1-377.5v4m1 369.5v4m1-377v5m5 206.5v3m1 44.5v6m1-63v5m2-224.5v4m1 275v6m4-169v7m0 162.5v4m5-175.5v7m0 161.5v6m2 24v4m1 4v4m3-18v5m3-34v6m1 62v6m1-32.5v5m4-69.5v6m4 59v5m1-80.5v6m1 67.5v5m0 1v5m5-43v5m1-5v5m0 25v6m1-77v5m1 105v5m2-13.5v6m1-40v4m1-36v6m1-28v6m4 21v7m3 20.5v6m0 27.5v7m2-41.5v4m1-31v6m1-29.5v5m1 17v6m2 30.5v5m1-78v5m0 68.5v5m0 2.5v5m1-89.5v6m0 36.5v5m1-49v5m2 42v5m1-3.5v4m0 38.5v4m1-47.5v5m0 36.5v5m3-17.5v6m1 26v6m4-71v6m2 25v6m0 2v4m1-85.5v5m2 72.5v4m5-5v4m2-9.5v5m4 31v6m2-73v6m2-25.5v5m1 52.5v4m1-38.5v5m1-9v5m0 56.5v6m1-37v4m3-74.5v5m0 77.5v5m2-3.5v4m1-83.5v5m0 38v5m3 17v6m0 3.5v4m1-87.5v6m4 68.5v6m1 27v7m2-37.5v6m1 25v6m2-39v6m7-8v6m5-56v6m8-13v4m1-0.5v5m2 45v6m2-3v4m1 33v5m2-38v6m1-6v6m2-61.5v4m1-5v4m1 47v4m1-8v5m4-35v5m2-23.5v5m3 47v4" opacity="0.625"/><path d="M309.5 951.5v5m4-375v4m1-3.5v5m2 369.5v6m2-373v5m1-5.5v6m2-2.5v4m1-2.5v6m1-7.5v6m0 361v5m1-8v6m1-283v6m0 270.5v6m2-279v6m5-7.5v7m1-78v5m5 66.5v7m1-7v5m0 271.5v5m3-5v5m2-280v6m0 272.5v4m2-11v5m2-280v5m0 271.5v6m1-864v8m1 577v6m1-5v6m5 275.5v4m2-283v6m1-4v5m1-4v6m1-595v7m0 580.5v7m1-9.5v6m6 96.5v5m1-7.5v6m1-6.5v6m3-3.5v6m11-692.5v7m2 507v5m1 68.5v7m1-79v6m2-520v8m1-9v6m0 687.5v7m0 169.5v6m1-5.5v4m1-356v5m0 344v5m1-874.5v7m1-7.5v8m0 456.5v6m2-6.5v5m2-2.5v4m0 403v5m3-359.5v6m0 345.5v6m1-7v5m1-282v6m1 271.5v6m1-281.5v5m0 96v5m1-5v5m2-695v7m5 681.5v5m6-12v5m3 172v5m7-357v5m1-7v6m1 166.5v6m0 168.5v6m3-354.5v6m1 169v6m6-175.5v5m0 68.5v6m1-4v6m1-73.5v5m3 344v6m1-359v7m1-523v6m0 859.5v6m1-281.5v6m1-595v7m0 457.5v5m0 48v6m0 68v6m1-132v3m1-3.5v3m0 123v5m1-593.5v7m2-4v7m0 856v6m1-871.5v8m5 505.5v7m1-63.5v4m2 222.5v7m1-179v6m2-5.5v7m3 167v7m0 169.5v5m4-864.5v7m0 574.5v6m0 94.5v7m1-692.5v7m0 679.5v5m1-180v7m1-6v5m0 344.5v5m1-867.5v6m0 579.5v6m1-80.5v5m1 345v6m1-866v6m0 853.5v6m1-278v6m5-593.5v8m6-6.5v6m2 574.5v6m1-7v5m1-3.5v6m2-4v6m2-8.5v7m3-82.5v7m0 168.5v5m3 1v6m3-185v5m1-5.5v7m2 349v5m2-6v4m11-866v7m0 498.5v7m1-512v6m1 575.5v5m2-5v7m1 268.5v6m1-355.5v5m2-60.5v5m1-462v8m1-7.5v8m0 449.5v5m1-464v8m1-5.5v7m3-6v7m0 450v5m2 398v6m2-864v7m0 854v6m2-868.5v7m4-8v7m1-8.5v8m1-7v6m2 858.5v4m2-5v5m1-865v8m1 849.5v6m1-285.5v7m3 274v5m3-868.5v7m0 853.5v6m5-348.5v7m0 66.5v7m3-596.5v7m0 859v5m1-356.5v7m1 64.5v5m1-5.5v5m3-137v4m2-459v7m0 449v5m3-1v5m5-467v7m1-5v6m4 506.5v6m1-519v7m0 857v6m4-353.5v7m4-523v8m2 682.5v6m5 167v5m1-6v5m13-868.5v8m1-12.5v8m0 690v5m2-5v6m1-701.5v7m1 686v6m2-8.5v7m2-8.5v5m9-104.5v5m4 274v6m1-7.5v6m4-181.5v7m2-5v7m1-9v6m4-7.5v6m5-244.5v6m5 55v6m1-75.5v7m5 64.5v7m14-77v6m0 64.5v5m0 334.5v5m6-348.5v5m0 335v4m4-342.5v7m0 336v6m2-8v6m4-277.5v7m0 270v6m2-182.5v7m1 168v5m5-176v7m0 167.5v5m1-179.5v5m0 171.5v4m1-4.5v5m4-415v5m1-5v6m0 400.5v6m3-10.5v5m3-355v6m1 343.5v6m1-352.5v6m1 68v5m1-74.5v5m2 69.5v5m7-9v6m2-286.5v4m0 147v6m1 223.5v7m1-237.5v7m3 123.5v5m2-133v7m1 398v5m1-410v5m0 123v5m0 271v5m1-354.5v7m0 341v6m1-559v4m0 551.5v5m1-352v7m1 66.5v6m1 269.5v6m1-562.5v5m3 147.5v6m1-5v5m0 399.5v5m1-5v5m10-559v5m0 199v7m0 345.5v5m1-360v7m0 170.5v6m1-387v4m1-4v4m3-1v5m0 551v5m2-361.5v7m1-6.5v7m0 344v6m3-4.5v5m1-354.5v7m4 342.5v6m1-357v6m0 346v6m1-356.5v5m0 345v4m4-348.5v7m0 341v6m2-287v7m1-136v6m2 123.5v5m1-7v5m1-5.5v6m2-131v5m2 399.5v5m1-355v6m1-58.5v5m0 49v5m4-63.5v6m0 402.5v6m3-561v4m0 143.5v6m0 401v6m1-411.5v7m3-7v5m1-5.5v7m1 50v6m1-208v5m0 198v6m1 346v5m1-409.5v5m0 400v5m3-177.5v6m1-237.5v5m1 222v7m1-7v6m4-5.5v5m8-180v7m1 341v6m1-6.5v6m2-9v5m3-355v7m0 346.5v6m2-10v6m2-414v6m2 0.5v4m1-6.5v6m3 50v7m1-5.5v5m1-6v5m1-7v5m2-2.5v6m2 344.5v6m1-8.5v5m1-286.5v6m0 96.5v6m3-177.5v7m0 168.5v5m3-235.5v6m1-7v6m4-152.5v6m1 373v6m3-236v6m0 226.5v5m0 168v6m2-5.5v4m3-177.5v7m2-183.5v6m3-8v5m0 344.5v6m2-411.5v7m2-5v7m0 398.5v6m1-410.5v6m0 400.5v5m1-410.5v6m1-6v6m0 48v7m2 168v7m0 168.5v5m1-2.5v5m1-177.5v5m1-181v6m0 171v5m2-185v6m0 66.5v6m2-77v6m0 66.5v5m1-78.5v6m2 166.5v6m3-108v6m1 96.5v5m0 170v6m1-356v7m0 165.5v6m1-178.5v5m1 344v6m3-183.5v6m1-386v5m0 549v5m1-285.5v7m1-281.5v5m1 144.5v7m1-4.5v7m1 398v6m2-7v5m2-282v5m2-135v6m0 124.5v5m3-283.5v5m1 145.5v6m3-11.5v7m0 52.5v6m1-5v6m3-208v5m2 270v5m2 276.5v5m1-283.5v5m0 272v6m2-355.5v6m1 345.5v5m4-288.5v7m1-3v6m1-133v7m3 223.5v5m1-6v6m1-237.5v7m0 225.5v6m1-384v6m2 271.5v5m5-286.5v6m0 197.5v6m2 170.5v7m2-178v6m2 168.5v5m6-176v5m7 348.5v6m1-1.5v4m1-407.5v6m0 49.5v5m3 339.5v6m1-179v5m3-188.5v6m0 7.5v5m2-7.5v5m3-89.5v8m2 0.5v4m6-15.5v8m1 66v6m1-82.5v8m2 0.5v5m1-3v5m1 57.5v5m3-8v5m6-74.5v8m1-3.5v6m9 395v5m11-172.5v7m0 166v6m3-182v7m0 168v6m3-3v5m2-177.5v7m0 167v5m2-559v6m0 374.5v5m2-385v5m0 56.5v6m0 310.5v6m1-355v5m0 344.5v6m1-387.5v6m0 24.5v6m1-6.5v6m1-5v7m1-33v6m0 548.5v5m1-648.5v4m1 464.5v7m1-360v7m1-123.5v3m0 114.5v5m0 521.5v5m1-5v4m1-645.5v5m3 635v6m4-6.5v5m1-5v4m1-3.5v6m1-178.5v6m1-1.5v6m3-7.5v5m2-493.5v3m1 660.5v4m1-564v6m2-10v6m2-109v5m8 168v7m2 310.5v7m3-318v5m2-163.5v5m1-5.5v5m1-4v5m1 293.5v4m0 342.5v6m1-352v5m1-149.5v6m0 484.5v6m2-356v3m2-146v6m1 137v4m3-141v5m0 484v6m1-351.5v4m3-149v6m4 211v6m4-7.5v4m1 96v7m1-387.5v5m0 57.5v7m1-8.5v5m0 209v4m0 100v5m1-6.5v6m0 169.5v6m1-631v5m0 66.5v5m3 545.5v5m2-563v5m0 59v7m1 204.5v4m2-1v6m2-277.5v7m0 271v6m2 276.5v5m1-5.5v5m2-284v5m5 273v6m1-498v7m1-142.5v5m0 128.5v5m0 487.5v6m2-500.5v7m1-141.5v4m0 131.5v5m1-7v5m1 312.5v6m1-5.5v7m5-476.5v4m2 372v4m3-76.5v5m2-6.5v5m3 167.5v5m2-5.5v7m1 170v5m1-529.5v6m1-7v6m0 346v5m1 168.5v5m2-530v6m0 344v5m1-355v6m1 342v5m1-356v5m0 519.5v6m3-652v5m0 113.5v5m1-122v4m1-7v5m0 112v7m2-37.5v7m3 1v7m0 54.5v7m1-35.5v7m3 30v5m3-41v7m1-37.5v5m2 25v6m1-39v7m1 21v6m2-41v6m2 28v5m2-126v5m1-4v4m0 89v5m0 26v6m0 240v4m2 0.5v4m1-283.5v7m1-101.5v4m0 90v5m2 549v6m2-559v6m2 371v7m0 171v4m1-561v5m1 60v5m0 306v7m1-319v6m0 307v5m0 174v5m2-498v6m2 311.5v7m2-378.5v6m1 272v6m6-228v6m1-8.5v7m1-7.5v6m2-163v6m0 151v7m0 485.5v4m3-562v5m0 24.5v5m1-5.5v7m1-128.5v5m3 18.5v5m0 99.5v7m1 517.5v5m1-638.5v6m1 134v7m1 483v5m2-178v5m0 170.5v4m1-558.5v5m1 550v5m2-557v5m0 550.5v6m1-285.5v5m1-3.5v4m1-282.5v7m2 551v6m1-282.5v5m2-278.5v5m1-9.5v6m2 365v7m1-110.5v4m2-253.5v7m0 239.5v4m2-250v7m2-33v5m2 548v6m1-282.5v4m1-282.5v6m1-4.5v5m0 57.5v7m1 485v5m2-559.5v7m5 546v6m2-5.5v5m1-651v5m1 470.5v7m0 168.5v5m2-4v6m1-498.5v5m0 486.5v5m3-0.5v4m5-483.5v6m0 484v4m1-405v6m0 392v4m2-406v6m2 388v6m1-558v6m7 155v5m4-168.5v6m3 186.5v6m4-79v6m1 78.5v4m6-70.5v6m0 18.5v6m0 34.5v4m2-8v5m2 1.5v5m1-81.5v5m0 99v5m1-29.5v5m3-11.5v6m6-3v5m1-4v4m1-3.5v4m1-45.5v5m0 36v5m6-9.5v5m4-62v4m0 49.5v6m0 28.5v7m1-71v4m0 27.5v5m1-6v6m1-3v5m1 5v5m2 20v6m5-3.5v5m2-9.5v7m2-40.5v5m1-84.5v6m0 103v6m1-115v6m3 2.5v6m0 33.5v5m2-6.5v5m1 25.5v6m5-6v4m2 27v7m2-95v4m0 82.5v7m1-93v5m1-3.5v5m0 82v6m8-40v4m2-33v5m0 59v5m2-67.5v5m1 61v6m1-69v5m2 59v6m1-98.5v6m1-28v6m1 14.5v4m0 82.5v6m1-3.5v6m2-8v7m3-37v5m1 28v5m1-40v5m3-74.5v5m0 70v5m1-4.5v5m2-8.5v6m2-83v6m1 10v5m1-26.5v6m2 16v6m1-0.5v4m1 51v4m8-86v6m1 105.5v6m4-6v6m2-71.5v7m0 28.5v4m2-60v5m0 85.5v5m1-4.5v5m3-13.5v5m2-8.5v6m2-92.5v6m0 50.5v5m1-60.5v6m4 51.5v5m1-62.5v5" opacity="0.688"/><path d="M309.5 581.5v6m3-4v5m0 366v7m3-5v5m2-6v6m1-866v6m1-5.5v8m1-5.5v6m1-7v7m1-6v7m0 503.5v6m0 346v4m1-182v5m2-190v6m0 2.5v6m1-4.5v5m1-3.5v7m1 68v7m0 95.5v7m1-180.5v6m1-19v4m2-506.5v7m4 579v6m1-7v6m4-588.5v7m5 571.5v6m1-587v7m2 577.5v6m5 276v6m1-280v5m8-11v5m1-592v6m1-6v8m1 505v7m0 167.5v6m1-178v7m0 168v6m1-181v5m3-513.5v6m5 679.5v6m0 166.5v6m1-6.5v6m2-358v5m1-6v5m1-510v7m1 501.5v7m0 342v6m3-866.5v7m0 507v5m0 347.5v4m1-871v6m1 859.5v6m2-869.5v8m1 584.5v6m0 97v5m1-234.5v4m0 49.5v7m0 66v5m1-601v8m0 690.5v5m1-235v4m0 124.5v6m1-137v4m0 125v7m1-80.5v6m0 67.5v5m0 272v5m1-356.5v6m1-523.5v7m0 511v5m1 347.5v4m1-870.5v7m0 581.5v6m2-596.5v6m0 583.5v5m4 97v5m1-700.5v8m0 862v6m2-872v7m2 679.5v6m2-5v6m4-5v5m1-7v7m1-8.5v6m2-696v8m1-8.5v8m2 684v6m2-695v7m4 504v5m4 337v6m3-353v6m1-507v6m3-10.5v7m1 577.5v7m1-588.5v6m1-8v7m2 512.5v7m0 64.5v7m1-6.5v7m0 271v7m1-416.5v6m0 50.5v7m0 67v6m2-82v7m0 168v6m1-699v8m0 860v5m2-176v5m1-6v5m2-179v5m1 66.5v6m1-134v5m0 49.5v6m1-520.5v7m3 683v7m1-7v6m1-695.5v7m2-6.5v7m4-9v7m1 858v5m1-867v7m1 852v7m1-354v6m2-7v6m0 343v6m1-283v5m2-590.5v6m1 505.5v5m1-518.5v7m0 580.5v7m1 92.5v7m1-181v7m2-512v6m0 578v6m1-6v6m5-9v5m1-591.5v6m1 579v7m3-594v8m3-8v6m1-5v7m2 577v7m5-81v6m5-516v8m0 677v6m2-2v5m1-108v6m1-591.5v8m2 579v6m1-591.5v7m1 576v6m0 271.5v5m1-867v8m2-6v7m3-11.5v7m1 855v6m1-4.5v4m1-283v6m0 272v6m2-863.5v7m0 503.5v6m3 63.5v6m2-79v6m9 67.5v7m2-3v5m1-5v6m4-8v7m9-587v7m0 572v6m4-590v7m1 852.5v6m1-866.5v7m0 853v6m2-864.5v8m5-7.5v7m0 583.5v6m0 272.5v5m4-418.5v5m1-6.5v4m2-7v4m6-456.5v8m1-6v8m0 449v4m1-459.5v6m2-11v7m1 504v6m0 346v4m2-865.5v7m1 855.5v6m1-868.5v7m2 503.5v7m1-6v7m1-521v7m1 510.5v6m0 342.5v6m2-869v6m0 512.5v6m3 165v6m1-694v7m0 580.5v5m1-594.5v7m1 684v6m2-698.5v6m3-6.5v8m1 856v5m1-356.5v7m1-9v7m3 342v5m3-351.5v6m2 349v6m1-3.5v5m2-352.5v6m12-530.5v6m1-6.5v7m2 685.5v7m1-699v8m3 681.5v5m2-102v5m1 94.5v5m6 171v5m2-181.5v7m1-8.5v6m1-695.5v7m0 682.5v6m2-695v7m0 680v5m0 170.5v5m3-416v6m4 59v6m1-79.5v5m1-8v5m3 68.5v7m15-6.5v5m7-6.5v5m8 60.5v5m1 274v5m1-5v6m4-285v6m3 99.5v6m0 169.5v5m5-411v6m7 221v5m2 167v6m1-6v4m1-408.5v7m0 122v5m1-132v7m1-5.5v5m2-2v6m2 51.5v6m1-7v6m2 68v5m2-5v6m1-137.5v6m1-7.5v6m6-6.5v7m1 124.5v6m1 270.5v5m1-411v5m1 50v7m1 66.5v7m2-133v6m0 124v6m1-285.5v4m0 145.5v6m1 49v6m1 343v5m1-7v6m14-407v6m0 225v7m3-111.5v5m1-278v4m0 270.5v6m1-280.5v5m1 142.5v6m1 224v6m1-387v4m0 550v6m1-282v5m1-283v4m1 551v5m2-5.5v5m1-5v5m2-2.5v5m5-353v7m0 343v6m1-4.5v6m2-8v6m1-414v5m1 121v7m3-135v7m1 399v6m1-4.5v6m5-3v5m2-410.5v6m2 48v5m1-65.5v6m0 402v5m4-556.5v5m0 199v5m0 346.5v4m2-560v5m0 200v5m1-208.5v4m0 550v5m5-554.5v5m1 144.5v7m2 220.5v7m5-7.5v6m2 167v6m3-355v7m3-6v7m5-15.5v7m8-60.5v6m2 52.5v7m1-64v6m1 51.5v5m11 163.5v5m3-0.5v5m3 170.5v6m2-6.5v6m1-5.5v4m1-181.5v6m4-380.5v5m1 371v6m2 169v6m3-178.5v6m0 167.5v6m1-285v7m0 271v6m1-7.5v6m1-5v4m1-180v7m2-5.5v5m6-179.5v5m2 172.5v6m3-179v6m0 67.5v5m2-6.5v6m3-6v5m1-5.5v6m1-6.5v6m0 96v5m2-180.5v7m2 64v6m1 93.5v7m1-4v5m1-179.5v6m0 345v5m1-412.5v7m0 400v6m1-413.5v6m0 399.5v6m1-184.5v5m1 168.5v6m1-180.5v6m0 169.5v5m2-281v7m1 96v7m1-109v6m0 271.5v6m4-283v5m4-6v7m0 96v7m1-108v5m1-136.5v6m1 223v6m4-229v6m3-8v5m3 51v6m0 169v5m1-106.5v5m1 97.5v6m1-109.5v5m1-133.5v6m1 225v6m1-111v6m3-1.5v6m3-6.5v7m1-285.5v6m2 201v5m1-5.5v7m1-64.5v5m1 51v5m0 71v6m2-286v4m2 374v6m1-385.5v5m11 379.5v7m4-5v7m1-179.5v5m3 2v6m0 166v5m1 172.5v5m1-356.5v7m1-62v6m0 48v7m1-61.5v5m0 224v5m1-177v5m0 342.5v6m1-4v6m1-280v5m0 270v6m1-412.5v5m2-5v5m0 226.5v6m1-263.5v6m1-7v8m2-13v6m11 62v5m1-76v7m0 64.5v7m1-76.5v7m1-6.5v6m7 65.5v5m12 1.5v5m0 322v6m3-179.5v6m4 167.5v5m2-0.5v6m6-557.5v6m2-4.5v6m2 374v6m4-324v6m4-153.5v4m0 112v7m1 345.5v7m1 166.5v6m1-649v4m0 147.5v7m0 310v5m3-5v6m2-474v5m1 112v6m0 343.5v6m1-357v5m1 521.5v6m1-7v4m1-626v5m0 442v6m2-5.5v6m1 172v5m2-175v6m2-323.5v7m1 306v5m4-390v5m16 384v7m4-7v7m2-7.5v6m3-9v7m2 167v5m3-493v6m2-1.5v7m0 310v5m2-6.5v6m0 167.5v5m2-180.5v5m0 168v6m1-277.5v5m0 94v7m1-5v6m2-6.5v5m1-106.5v4m2 271.5v5m1-6.5v4m3-561v6m0 270.5v4m1-2.5v5m0 96.5v7m1-322.5v7m0 208v4m1-284v6m0 59.5v6m1-140.5v5m0 128v6m0 205.5v5m1-220.5v7m1-44v7m0 242v4m2-254.5v6m0 521v4m1-527v5m0 29v6m0 485.5v6m1-3.5v6m3-549.5v5m2 545v4m1-561v6m1 548.5v5m1-492v6m3-6.5v6m1 483.5v4m7-498v5m5-66.5v5m3 207v6m4-180.5v5m0 343v6m1-7v6m1-358v6m0 169v4m0 171.5v5m1 169.5v4m1-180v5m0 168v6m2-351v4m3 170v7m1-7.5v7m0 168.5v5m2-8v6m3-564v6m0 551.5v5m3-562v7m5 55v7m1-34.5v6m2 31.5v5m2-35v5m4 514v5m1-528.5v6m0 516.5v4m2-527.5v5m0 518.5v5m3-186.5v6m1-356v7m3-32.5v5m0 25.5v7m0 341.5v6m2-351.5v5m0 343v7m1-5.5v7m2-5.5v6m3-112v6m1-253v7m0 344v7m1-6v5m1-321v7m1-7.5v6m5-7v6m0 206.5v4m1-279v7m3 0.5v7m1 274.5v4m2-226v6m1 308v6m5-326v6m2-42v7m0 27.5v5m2-5.5v7m3-67.5v6m0 59.5v5m1-4v6m0 484.5v6m1-498.5v7m1-146v5m2-6.5v5m2 135v6m2-8v7m0 309v7m1-459.5v4m1 135.5v7m1 312.5v6m5-6v6m1-5.5v6m0 172v5m1-280v4m2-7.5v4m1-223.5v5m2-10.5v7m1-42v7m0 239.5v6m1-220.5v5m1-37v6m1 28.5v5m1 212v4m5-253.5v6m0 520v5m2-495v5m1 486v5m3-497.5v7m0 309v6m1-6v7m1-481v5m0 152.5v6m4-3v6m3-164.5v5m3 158v6m2 486v6m1-657v5m1-3v4m1 163v6m0 484v6m4-566v5m1 155.5v5m0 388v4m3-4.5v6m2-559v5m0 550v5m5-562.5v6m0 162v6m12-52v5m1 39.5v5m3 33v5m2-87v6m0 74v5m1-62v5m0 57.5v5m1-83.5v5m0 102v6m1-95v6m0 19v5m1-30v5m1 80.5v6m1-109.5v6m0 34v5m0 27.5v6m0 27v7m1-112v6m0 66v6m1-61v5m0 83.5v6m2-95v5m0 82.5v6m1-93.5v5m0 21v6m0 24v6m0 29.5v5m1-113.5v5m1-7v4m6 69v5m1-37.5v7m1-46v7m1 35.5v5m1-6.5v6m5 58.5v6m1-94.5v4m1-2v6m1 18v5m6-26v6m1-24.5v5m1 77.5v4m1-49v4m0 29v6m4-45v5m1-46.5v6m0 38v5m0 25v5m1-75.5v6m1 69.5v5m2-7.5v5m0 30v6m1-7.5v7m1-115.5v5m0 68v6m2-83.5v6m1 98.5v7m1-113.5v6m0 68v6m0 29.5v5m2-32v5m1 24.5v7m1-72v4m0 30v4m2-35.5v5m1-26v6m1 81.5v6m3-66.5v6m1 58.5v5m3-12.5v5m4-65.5v6m3-25.5v4m4 52.5v4m2-66.5v6m2-24.5v5m4 66.5v4m4-54.5v6m0 83.5v5m2-115v5m1 10v4m2 16v6m1 26.5v6m1-34v5m0 25v5m1-74.5v5m0 37.5v6m2 22.5v6m1-37.5v6m0 24v6m1-78.5v6m0 67.5v6m2-39.5v4m0 59.5v6m1-115v4m0 39.5v5m3-2v7m2-6.5v5m1-8v5m0 61.5v6m1-70v5m2 64v5m11-121v5m4 41.5v6m1 56.5v7" opacity="0.75"/><path d="M320.5 959.5v6m4-360v7m3-13v6m1 7.5v5m1-520.5v6m0 495v6m2 6.5v7m4-519v7m6 575v6m3-74.5v5m1-6v6m1-520v7m2-6v7m1 853.5v6m1-864.5v6m0 854.5v5m3-278v5m4-7v7m0 271v6m4-5v6m1-9.5v5m1-7v5m1-280v6m5-589.5v8m5-10v8m1-7.5v7m1-7v8m0 506.5v6m3-518v7m0 675v6m1 168.5v4m1-353v6m3 177v6m2-7v5m1-697.5v8m0 684v6m2 0v6m1 171.5v4m3-879.5v6m0 691v6m1-181v5m0 344.5v5m2-874.5v7m0 862v5m2-281v6m3-79v6m2 64v5m4-4v5m3-594v6m1-7.5v6m0 683.5v6m2-694v7m0 683.5v6m1-109v7m1-6.5v5m2-593v7m2 677v6m3 170v6m2-180.5v7m1-10.5v6m1 170v5m2-354.5v5m1 346.5v5m3-359.5v6m7-511.5v6m1 504v6m1 169v6m1-5v7m2-692v8m2-6v7m0 510.5v7m4-11v5m2 68.5v6m2-78v5m0 169.5v5m5-108v7m13-592.5v7m1-5.5v6m1 852v6m2-4.5v5m1-6.5v5m2-181.5v7m0 169.5v5m1-181v6m0 167.5v6m1-355v5m0 69v7m2 97.5v6m3-108.5v7m2 95v6m3-108v6m1-591v6m4-9.5v6m1-5.5v6m3-3.5v6m3-2v7m1-8v7m0 568.5v5m1-5v6m1-586v6m2 507.5v6m1-7.5v7m1-9.5v7m2-515.5v8m4-9.5v8m0 508.5v7m3-11v6m3 66.5v6m1-589.5v7m1 854v6m2-868v7m2 504.5v6m3-4v5m1-7.5v6m1-515v6m1 500.5v7m3-3v5m3-3.5v6m3 64v5m2 100.5v5m6-8v7m1-5v7m13-115v6m1-6v6m2-3v5m2-2v7m1-78.5v7m0 66.5v6m0 92.5v7m6-181.5v7m1-6.5v5m2-518v7m4-7.5v6m4 504.5v5m1-514.5v7m1 500.5v6m2 349v5m1-354v5m1-6v5m2-518.5v6m4-8.5v7m4 584v7m2 94.5v7m2-698v8m2 580v6m2-8v6m1-80v6m0 68v5m4 94v6m1-108v5m0 269.5v6m2-179v6m1 170v5m1-3v5m10 0.5v4m1-8v7m2-869.5v8m0 852.5v5m1-180.5v6m5-695.5v7m2 685v7m1-694.5v6m1 679.5v5m2-102.5v5m6-5.5v6m4-599v6m2 859v6m1-869v7m25 436.5v5m1-3.5v6m5-6v6m0 63.5v6m1-6v5m1 333.5v5m4-347v6m0 334.5v6m1-344.5v6m0 336v5m3-282v5m0 271.5v6m1-412v6m5 404.5v6m1-5.5v5m1-182.5v7m1-5.5v7m3-6v7m0 167.5v5m4-178.5v5m1-239v6m0 401v6m1-182.5v6m1-107v6m0 271v7m2-181v7m3-244v6m2 121.5v6m3-71v7m1 345v6m2-355.5v6m3-5v5m2-60.5v6m5-11.5v6m3 228v6m6-237.5v5m2 403v5m2-282v5m1-136.5v5m0 125v5m3-74.5v6m2 170v6m3-110v6m0 97v5m1-5v5m2-110v7m0 94.5v7m2-235v5m0 225.5v5m0 170v5m1-409.5v6m2-158v5m0 144.5v5m0 401v6m2-7.5v4m2-173.5v5m2-387.5v4m0 145.5v5m0 401v5m1-183v6m1-237v4m0 226.5v6m1-5.5v6m0 169v5m1-409v5m0 224.5v6m2-107v5m1 97v5m3-179v5m0 168.5v6m1-8v7m2-2v6m1-1.5v5m1-238v7m0 122v7m1-8.5v7m7-140v6m1 122.5v5m2-132v5m0 400.5v5m1-411v5m1-3v5m0 399.5v5m3 0v5m1-413.5v5m2 48.5v5m0 67v5m1-136v6m0 50.5v7m4-59v5m0 50.5v5m0 347.5v5m1-6v5m1-357v7m2 345v6m1-410v5m0 47.5v7m5-2.5v6m1-64.5v5m1 397.5v5m1-410v7m1-5.5v6m1 52.5v7m0 64v7m2-8v6m2-78.5v6m11-9.5v6m2-6v5m1-7v7m0 68.5v5m1-82v5m1 168.5v7m2-1v7m3-107v6m1 96.5v5m9 162.5v6m2-5.5v6m2-1v6m1-182v6m0 170v5m1-5.5v6m2-5.5v5m1-182v7m4-382.5v5m0 373.5v5m1-4.5v7m7-110v5m2-8v7m10 97v7m1-236.5v5m6-6.5v7m3 226v6m2-180.5v6m1-5v5m1 168v5m3-111.5v7m1-7v6m2-3v5m4-10v5m4 99.5v5m2-235v5m0 121.5v5m2-134v6m1 223.5v7m2-236.5v5m0 123v6m4-8v5m3-127.5v6m8-5v5m4-6v6m2 224v5m3-174v7m0 64.5v7m1 95.5v6m2-184.5v7m1-5v6m1 169.5v5m6-240v6m0 226.5v7m4-6.5v7m3-234.5v5m2 50v5m1-61v6m0 50.5v7m1 169.5v7m4-8v7m1-6.5v6m3-1.5v5m1-233v5m0 52v5m0 168v7m4-6.5v6m3-233v5m0 226v6m1-236v6m0 226v5m1-5.5v5m1-237v5m0 50.5v6m0 66.5v5m0 98v6m1 168.5v5m28-367.5v5m7 321v5m3-1v5m1-4v4m3-643.5v5m1-5v6m0 633v5m3-174.5v5m3-387.5v7m1-6v5m0 26v6m1 342.5v7m1-6v7m0 167.5v5m1-557.5v7m0 373.5v6m1-4.5v6m6-387v5m1 372.5v6m1-321.5v7m1 311v6m0 171v4m1-178.5v7m10-8v5m1-384v5m0 375v5m1-453.5v5m1 90v7m1-102.5v4m0 91.5v7m0 343v7m1-353v7m1-38v6m2 0v6m1-5.5v6m12 45v6m1-43v7m0 29.5v5m1-69v6m11 68v7m1-36.5v6m1-127v5m0 147.5v6m0 312.5v6m1-477v5m0 146.5v7m1-69.5v6m0 22.5v7m1-37v6m0 57.5v6m0 310v5m1-357v6m0 30v7m1-71v6m1-4.5v6m1 56v5m1-67.5v6m1 549v6m3-1v6m1-562v6m1 373v6m0 168v5m2-557.5v5m2 549.5v4m3-281v4m0 272v6m5-502v7m1-5v5m1-69v7m2 18.5v7m1-9v6m2-35.5v5m0 546.5v5m3-550.5v6m1 58v6m2-34.5v6m0 28v6m1-69v6m2 19.5v7m1 26.5v7m0 307.5v5m2-351.5v7m1 344.5v5m0 170v6m7-637.5v5m2 66.5v6m1 61v7m2-162.5v4m1 153v5m2-69.5v5m0 275.5v4m2-2v4m1-252.5v5m1-3v5m1 241v5m3 272.5v5m4-533.5v6m8-38.5v7m3-7.5v6m2 370.5v5m3-385v6m1-2.5v6m2 61.5v7m4-0.5v6m1-5.5v6m0 486v5m2-534.5v6m5-44.5v7m0 20.5v7m0 343.5v5m1 171.5v5m1-181v6m0 169v6m1-556.5v5m0 549v4m1-558v6m0 372v6m3-381v6m0 271.5v4m2-1v5m1-5.5v6m1-286.5v6m0 375v6m1-387v5m0 24.5v7m1-6v6m2 29.5v7m1-166v4m9 160.5v6m0 208v4m2-278v6m0 58v5m2 202.5v4m1-222v6m1-5.5v6m0 307.5v7m2-384v5m2 371.5v6m1-5v5m2-357.5v5m0 27.5v6m0 489v5m1-184v5m0 171v6m1-496.5v6m1-40.5v6m0 28v7m1-38v7m1-4.5v7m1 345.5v5m0 169v4m4-561.5v6m0 57v5m2-6.5v7m2-69v7m0 55v6m0 311v5m1-383v6m0 550.5v5m3-495.5v5m1 311v6m2-384v6m0 56v6m2-1v6m2-9v6m1 205.5v4m1-225.5v7m0 211v5m2-227v7m1 308v7m1-6.5v7m1-104.5v5m1-216.5v5m0 310v6m1-354.5v6m0 242.5v5m0 97v7m1-110.5v6m0 97.5v7m1-324.5v6m1-7.5v7m0 310v6m3-384.5v6m1 57v6m1-7.5v7m1 311v5m0 172v6m1-4.5v5m1-530v7m1-8.5v6m2-9.5v6m1 26.5v7m1 314.5v6m1-321v6m3-166v5m1 154v7m2-63.5v5m0 57v7m2 485v6m2-523v5m4-13v5m0 519v6m2-498.5v6m6-38.5v5m0 130v5m5-46v5m4-9.5v6m1 96v7m3-1v6m2-68.5v5m2 59.5v7m1-71.5v5m1-47v5m0 67v5m1 27v5m1-91v5m0 49v6m0 27v7m1-109v4m0 37.5v6m3-3.5v6m1-31.5v6m0 51v5m2-60.5v4m1 21.5v5m1-51v7m3 41v5m0 25.5v4m1-6v5m1-64.5v4m1-5.5v5m1-5.5v6m2-23.5v5m0 70v6m1-80.5v5m0 38v6m4 62.5v7m2-12v6m7 3v6m2-98v6m2 85.5v5m3-6.5v7m3-74.5v6m1 22.5v6m3-3.5v5m9-68v5m0 17.5v4m2-22v6m6-3.5v6m3 54v6m2-10.5v6m7 31v5m3-41.5v5m0 26.5v7m1-95.5v5m0 81v7m2-115v7m1 15.5v6m0 46v6m8 30v7m2-68v6m1-8v5m1-47.5v6m0 11.5v5m0 84.5v6m2-42v6m0 27.5v7m3-77v5m2 32.5v5m0 28.5v6m1-111v4m1 100.5v6m2-73v4m0 60.5v5m1-111.5v7m3 30v6m0 59.5v6m3-66.5v5m1 59.5v5m3-69v6m2-5v6m4 58.5v7m3-49.5v6m1-3v6m1-81.5v6m6 37.5v5" opacity="0.812"/><path d="M308.5 579v6m22 27.5v5m4-518v8m1 501.5v5m0 169.5v7m5-110.5v6m2-77.5v5m1-511.5v8m1-9.5v8m1 573.5v6m6-75.5v7m1-6v6m0 343.5v5m1-4v4m3-354v6m1-5.5v6m1 344v5m2-4.5v5m4-359v5m0 342.5v7m4-866v6m1 505.5v6m3-6.5v6m1-516v6m4-7v7m1 504.5v6m3 169v6m1-690.5v8m1 507v5m0 343v5m6 1.5v5m3-281.5v6m2 95v5m2-8v7m1-107.5v6m2-76.5v7m1-7.5v6m1 345v5m1-182.5v5m1-698v7m0 509.5v6m0 167.5v7m1-696v7m0 858.5v5m1-351v6m0 65.5v5m3-7.5v6m1 94v6m2-107.5v6m1-593.5v7m2-5.5v6m1-8v7m0 684v5m7-8v6m1-695v7m1 853v6m1-7v5m9-10v5m2-855.5v7m3 676.5v6m5 0v6m2-1.5v7m3-114v6m1 97v6m4-107v6m1-5.5v7m2-7.5v5m1-5.5v6m1 94.5v6m1-107.5v6m6-592v6m4-4v7m8 675.5v7m4-6v5m1-689v6m3 681v7m1-6.5v5m1-111.5v7m1-5v6m10-7.5v6m3-78v6m11-516.5v7m0 505.5v5m1-518v6m1 508v5m3 167.5v6m0 170v5m1-868v8m1 851v5m1-5v5m1-3.5v5m3-6v7m5-4v6m1-866.5v8m0 679v6m2 164.5v5m1-866.5v8m0 679.5v7m0 166.5v5m2-353.5v6m3-3v5m5 169v5m4-107v6m1-591v7m1 575v6m1-586v7m2 577v7m0 95.5v6m3-7v5m2-110.5v7m4-7.5v7m1-589.5v7m0 576.5v6m4-9.5v6m2-584.5v7m0 576v7m1-593v8m1-9v7m3 513v6m2-522.5v7m2-5.5v7m2 498v7m5 172.5v6m1-180v6m6-6.5v6m3-6.5v6m0 66v6m1-6.5v6m3-3.5v6m1 96.5v7m1-107v5m2-594.5v6m6-8v8m2 580v6m1-592v7m5 574v6m2-77.5v5m0 70v5m7-68.5v6m3 341v6m1-284v6m0 272.5v6m1-7v6m5-288.5v6m1 96.5v5m0 167.5v7m1-870v6m0 685v7m0 166v6m2-176.5v5m2-698.5v6m4 510v7m5 64.5v6m1-4.5v7m2 273v4m2-8.5v5m1-6v5m1-870v8m4-3v7m1-7v7m5 433.5v7m7 65v6m2-78v5m1-7.5v6m4 64.5v6m1-4v5m1-3.5v6m2-9v5m5 336v5m1-6.5v6m1-410.5v7m1-6v5m5 403.5v6m3-285v5m8-132.5v6m1 229v7m2-239.5v6m4 402v4m2-284.5v6m0 271v5m3-408.5v5m0 400.5v5m1-181v6m1-241v5m0 52v6m1 63v5m0 273.5v6m1-355.5v7m0 64v5m2-75v7m0 168v6m1-106v5m0 272v4m4-405.5v6m3 122v5m6-9v7m3-3v5m2 97.5v5m2-107.5v6m3 95.5v6m1-107v7m5-138v4m0 54.5v5m8 346.5v4m1-180v7m2-109v6m0 95.5v7m1-107.5v7m4 267.5v6m2-409.5v7m6-7.5v6m2 224.5v7m3 169.5v6m1-180.5v6m3-238v5m1 403.5v4m1-407v5m5 395v6m5-410.5v4m6-1v7m0 402v4m1-356.5v5m1-7v7m0 346.5v4m3-9v6m1-356.5v6m10-55v6m2-3.5v5m2 45.5v7m1-64.5v5m0 124v5m4-132.5v5m1-6v6m0 50.5v5m5-2.5v5m4-9.5v6m0 66v6m1 270v5m3-5v5m2-281.5v6m2 93v6m3-105v6m2 97v7m2-109v6m1-7v6m4 96v7m5 162v5m1-177.5v6m1 172.5v6m3-181.5v7m4-7v5m1 169v4m7-280.5v5m5 97.5v6m4-108v5m9-72.5v7m7-9.5v7m5-7v5m0 65.5v6m6-8.5v6m6-5.5v5m4-134v6m1 222v6m2-236.5v6m0 226v6m1-4.5v6m9-233.5v6m4-6.5v5m0 224.5v7m5-5.5v5m2-238v6m2-4.5v6m10 227v6m6-238.5v6m1-5.5v6m6 123.5v6m0 97v6m1-107v7m1-5v7m0 95v5m2-6v6m1 170v5m2-4v6m2-410v6m2-0.5v6m5-5.5v6m19-40.5v8m9-8.5v7m2-4.5v6m9 218v7m1-319v5m3-65v6m0 56.5v6m0 311.5v7m1-6v5m2-469v4m3 459.5v7m1-387v6m2 62.5v5m1 312v6m0 169.5v5m1-531v7m0 344v5m0 169.5v4m2-530.5v6m7-30.5v5m0 24.5v7m4 339.5v7m0 170.5v4m1-495v6m1-5v6m2-5.5v6m1 485v6m2-533.5v7m0 30.5v6m0 309v7m2-384.5v6m0 372.5v6m1 168v6m5-564.5v5m2-69.5v5m6 129.5v7m2-72.5v5m7-12.5v6m2-9v5m8 390.5v7m1-357.5v7m1-7.5v7m0 28.5v6m2 481v6m1-494.5v6m0 485.5v4m2-4.5v5m1-649v3m0 465v7m1 165.5v6m1-648.5v3m3 114v7m1 30v6m0 307v6m0 171v6m2-555.5v5m1-6v7m4 21.5v7m2 520v5m2-557.5v5m8 18.5v5m3-39.5v7m1 271.5v5m7-247v6m6 519.5v6m2-557.5v7m3-9.5v5m1 549.5v4m9-281v5m5 0v4m2-250.5v7m6 513v4m2-0.5v6m1-6.5v5m1-532v7m5 340.5v6m6-390.5v5m5 5.5v5m5 30.5v6m1 24v5m3-74v7m0 549.5v4m3-11v5m10-485v6m1-8v7m2-8v6m4-43v7m6 243v4m1-213.5v5m3-33.5v6m3 232.5v5m2-281v6m4-9.5v5m1-5v5m5 375.5v5m1-2.5v6m1-385v6m3-8v5m0 546v6m2-558v6m1-6v5m5 380.5v6m2-112v5m2-2v4m2 98.5v7m1-103v4m9-266.5v6m1 30v6m1-39.5v7m2 515v5m2-529v7m0 519v5m1-531v7m0 344v5m2-5.5v5m1-351v6m1-38.5v7m0 25v6m1 518v6m1-184v7m1-326v6m1 310v7m0 170.5v5m1-530.5v5m0 344.5v7m1-382v6m1 24.5v6m1 28.5v7m1-7.5v6m1-38.5v5m2-32.5v5m0 548.5v6m3-494.5v7m1 487.5v6m3-493v5m1-9v6m0 486v5m3-563v5m0 24v6m5 520v6m1-5.5v4m1-332v7m2-5v7m1-178.5v6m1-36.5v7m1 192v7m3-10v6m2-11v7m5 2v6m1-69v4m1 59v6m5-88.5v5m0 19.5v4m1 60.5v5m2-112.5v6m0 35.5v4m3-45v5m1 100.5v6m4-96v5m1 49v4m4-36v5m0 58.5v7m2-36v5m4-62v5m0 17.5v4m5 63.5v6m1-4.5v6m2-91.5v6m4 48.5v4m1-1.5v6m2-83v5m0 71.5v4m1-80.5v5m1-6v7m6 100.5v5m1-5.5v5m8-78.5v7m0 26.5v5m1-77.5v7m0 35v6m3 58v6m2-66.5v6m1-5v5m1-30.5v5m1-1.5v4m0 82.5v7m1-3.5v5m6-74v5m4 63.5v6m1-115v6m5-11.5v5m0 103.5v6m1-41.5v6m3-77v5m3 34v5m2 0v6m0 60.5v6m1-113.5v6m3 8v5m2 17.5v6m2-52.5v5m1-2.5v6m3 40.5v5m3-9v5m0 26v6m1-81v6m1 99v7m1-116v7m1 39.5v6m2-48v5m3-6v6m1-2.5v5m5 108v5m3-17v5m3-69v6m2-45.5v5m0 38v5m1-45v5m0 36.5v6m1-5v6m0 59v6" opacity="0.875"/><path d="M307.5 577v5m14 379v6m10-870v7m0 498v5m2-506.5v7m6 676.5v7m6-5.5v5m1-8v7m1-112.5v5m1 100.5v6m1-180.5v7m2 346v7m2-353.5v6m2 344v6m4-4.5v5m11-867.5v6m1 574.5v7m3-79.5v6m1-3.5v5m3-519.5v8m2-3.5v7m1 848v4m3 3.5v6m2-6.5v5m2-178v7m1-106v6m9-79v7m9-527.5v8m2 580v6m1-4v5m6-594v8m2 578v6m2 268v6m1-180v6m0 169.5v6m5-867.5v8m2 853v6m12-181v6m1-689v6m15 685.5v6m4-7v7m1-108v5m11-8.5v6m10-6v5m3 100v6m1-180v5m1-522.5v8m0 504.5v7m6 67v5m1-6.5v6m2-79.5v5m4-3v6m1-5v7m2 59v7m2-586v7m2 503.5v6m1-517.5v6m1-6.5v8m4 858v5m1-356.5v5m1 68v5m0 98v6m0 169v5m1-179v6m1-697v8m0 506.5v6m0 344v4m1-284v7m2-82.5v5m1-512v7m0 674.5v6m2-104v5m0 272.5v5m3-357.5v6m9 66.5v5m3-76.5v7m1 170.5v5m5-181.5v5m1 67.5v5m1-76.5v6m2 168v5m1-109.5v6m1-584.5v6m2 576v6m2-5.5v5m1-592.5v6m1-7v7m0 579v6m1-591v6m0 508v7m0 166v6m4-181v6m3 65.5v5m4 98.5v7m4-696v8m0 683.5v7m1-5.5v7m1-108v6m1-79v6m2-521v8m2-8v8m0 500.5v7m1 65.5v6m2-590.5v7m0 576.5v6m4 100.5v6m1-7.5v5m4-108.5v5m1-4v7m1-6v7m2 93.5v7m1-7v7m2-693v6m0 579v6m0 272.5v6m1-6.5v5m2-868.5v8m3-9v6m3 512v5m0 66.5v6m5 93.5v6m2-108v6m1 93v7m1-109.5v6m2-80.5v5m0 169.5v7m1-5v5m1 169v5m1-280.5v7m2-5.5v6m3 0v7m0 272.5v6m9-292v6m1 271v6m4-5v6m1-177.5v7m4-186v7m5 67v5m5-1.5v6m1-8v6m23-153v6m3 0v5m5 57.5v5m13-66v5m1 49.5v6m2-8v7m0 345v4m1-408v5m1 127v6m4-139v6m3-2.5v6m2 51v7m3 64v6m1-79v5m0 68v7m4-7v5m2-9.5v6m5 99v5m1 172.5v5m2-1v5m18-359v5m3-60v6m1 226.5v7m3-10.5v7m1-108.5v7m2 97.5v6m3-180v6m0 67v7m1 268.5v5m7-280v6m3-8.5v6m3 275v7m8-185.5v7m1-236v6m0 122v5m1 99.5v5m1-109v5m2-5.5v5m4 104v6m1-9v7m1-110v6m0 94v7m4-237.5v5m1 401.5v4m3-181.5v6m1-178v5m1-6.5v7m0 67.5v7m2-6.5v5m1-78v7m2 66.5v6m2 93v7m1-108.5v6m6-6v6m1-131.5v7m1-5.5v5m3 403v6m2-5.5v5m2-11v6m3-353.5v7m0 67v5m1 271.5v5m3-355.5v6m0 343.5v6m1-282.5v6m0 271v6m1-283v6m0 272v6m1-354.5v5m4-8v5m4-10v5m1 69v5m5-9v6m4 1.5v5m10 93v5m8-106v6m12-4v5m5 93.5v7m2-109.5v6m2-4.5v7m1-6.5v7m1 96v6m1-7.5v7m2-236.5v6m2-3v6m1-2.5v4m2-7.5v6m21 217.5v7m3-6.5v6m16-233.5v5m1 224.5v7m1-7v6m5-180v7m0 170.5v5m1-181.5v6m0 66v5m3-79.5v6m1-4v7m0 168.5v7m3-106v6m5-7v6m2-138v6m4 122v6m1-135.5v7m1 123.5v6m2-1v5m0 96.5v6m1-6.5v7m2-113v7m3-74.5v6m5 346v5m2-3.5v6m1-5.5v6m18-439v7m8 64v6m6-79v7m4-8v6m7-0.5v6m1-4v7m5-96v5m2-68v6m5-7v5m4 1v6m2 55.5v7m1 484.5v4m3-522.5v7m0 516v5m1-528v6m1-6.5v6m2 343v5m1-353v6m2 23.5v5m4-1v7m3-71.5v5m0 60v5m0 311v6m3-354.5v5m2 27v7m3-44v7m1 30v6m1-74v7m3 32.5v7m1-5.5v7m5 22v6m5-10v6m1-42v7m0 343v6m1-322.5v6m4-38v6m3-0.5v6m1-3.5v5m6-5.5v5m2-1v6m5 511.5v5m1-178.5v5m2-356.5v7m1-30.5v6m3 378v5m2-359v5m2-6.5v6m4 520.5v6m5-565.5v7m3 374.5v6m3-13v6m1-8v6m1-357v7m2-31.5v7m1 24.5v6m1-3.5v7m2 350v5m1-356v7m1-40v7m2 21v6m1-5v5m6-34v5m4 54v7m2 313v5m2-383.5v5m0 60.5v6m8-2v7m2-42v5m1 27.5v7m1-72.5v6m4 59v6m11 305v6m11 179.5v6m4-566.5v7m2 371.5v6m3-360.5v5m3-2v6m1 243v4m3-280v7m1 24.5v7m2 239.5v5m2-282.5v6m2-4.5v6m0 23v7m1-7v6m12 33.5v7m1-42.5v6m1-38.5v7m3 368.5v7m2-356.5v6m1-7v7m2-38v6m2-7.5v6m0 375.5v5m1-385.5v7m0 373.5v7m2-381.5v6m2 375v5m1-386.5v5m2 374.5v5m7-381v6m1-6v6m2 53.5v7m8-43.5v6m7-37v7m0 59v6m0 484v6m1-560.5v5m1-7v5m1 60v6m3-39.5v7m2 27.5v7m2-8v6m2-69.5v6m1 55v5m4-32v7m1 340.5v6m1-384v5m4 29.5v6m0 28.5v6m2-65v7m0 21.5v7m0 27v6m5-10v6m1-69v6m0 55.5v6m2 487v6m1-496v6m1 485v5m5-332v7m10-12.5v5m4-107.5v6m5 37.5v4m1 61.5v7m5-93.5v6m1 85.5v6m9-45.5v6m1-82.5v7m0 71v6m0 25.5v7m2-5.5v5m2-31.5v5m1-4.5v5m3-68v4m8 2v5m1 81v6m1-92v4m0 49.5v6m3 0v5m1-41.5v5m3-46.5v4m2 61.5v6m2 33v5m7-13v7m1-116v4m2 0.5v5m2 17v5m6 84.5v6m8-5v6m1-5.5v6m4-69v6m3 18.5v5m1-3.5v5m3-58v5m5 82v5m3-87.5v6m1-26.5v5m1 34v6m2-6v5m1-49.5v4m1 10.5v6m1 82.5v6m3-64.5v6m2-48.5v5m0 99v6m6-9.5v7m4-116v5m13 103.5v5m2-2v7m3-4.5v5" opacity="0.938"/><path d="M310.5 580v6m18-488v6m0 495.5v5m2-508v6m3 683v7m1-7v5m2-692v7m0 680.5v5m1-6v6m1-5v6m2-9v6m1-6.5v6m1-106.5v6m0 96v6m1-180.5v5m0 68v6m0 97v5m1-4v6m2-186v6m1-7.5v6m0 170.5v5m1-181.5v7m1 171v6m1-178.5v6m0 168.5v5m1-4v6m1-5.5v6m2-176.5v7m1-6.5v6m3-7.5v6m1-5v6m1-5v6m1-7.5v6m1-7.5v6m1-7v5m2 65v6m0 272v4m1-867v7m0 580v6m0 270.5v5m1-866.5v6m0 579v7m0 270.5v4m1-282.5v5m1-5v5m1-4.5v5m2-589v8m0 576.5v6m1-4.5v5m1-4.5v6m1-6v5m2 96.5v6m1-8v6m0 166.5v7m1-8.5v6m1-179v6m2-1.5v5m1-3.5v7m2-5.5v6m3-106.5v5m0 271v6m8-281.5v5m2-592.5v6m2-6.5v8m2-11.5v8m2 511.5v6m1-524.5v6m1 514v7m1-7v5m1-11.5v7m1-9v6m1-4.5v5m1-4.5v6m1-4v7m0 66.5v7m1-79.5v7m0 66.5v6m1-78.5v5m1-5.5v5m1-6v7m0 66.5v6m1-82.5v7m0 67.5v5m1-590v7m0 502.5v6m1-517.5v7m0 503.5v6m1-5.5v5m1-4v5m1-518.5v7m0 505.5v7m1-6.5v6m1-518v6m0 504.5v6m1-9.5v6m1-7.5v6m0 170v7m1-179.5v6m0 169.5v6m0 170v6m1-180.5v5m1-6.5v6m1-6.5v6m0 170.5v5m1-183v6m0 168v6m7-858v7m5 678.5v6m2-692.5v6m0 685.5v6m2-698v8m0 682v7m1-697.5v6m0 683.5v5m3-2.5v7m4-7.5v5m2-5.5v7m1-8v5m4-107v7m1-9.5v5m1-7v7m1-7v5m1-2.5v6m1-4v5m1-4.5v5m1-5v6m1-7.5v5m1-7v6m2-4.5v7m1-5.5v5m3-7.5v6m0 96.5v5m1-107v7m5-80v6m1-1.5v5m0 169v5m1-693v6m0 508v6m1-522.5v7m1 578.5v5m1-78.5v7m1-517v7m0 504.5v5m0 170.5v6m1-694.5v6m0 506v6m0 172v6m1-182.5v6m0 170v5m1-181.5v5m0 169v5m1-691.5v7m0 504v5m0 168.5v7m1-181.5v7m0 167v7m1-180.5v5m0 66v7m0 96v5m1-8v7m1-180v7m0 167v5m1-177.5v5m0 168.5v5m1-178v7m0 168v5m1-4.5v6m1-692v8m0 677v5m1-688v7m0 674v7m1-181v6m1-8.5v6m3-515.5v8m3-6.5v7m3 576v7m1 98.5v7m2-110v7m1 97v6m2-9.5v6m1-108.5v7m0 94.5v6m1-181v5m0 69.5v5m1-77.5v7m0 165v5m1-176v7m0 166.5v6m1-694.5v6m0 511v6m0 64.5v7m0 94v7m1-181v6m0 67.5v5m0 94.5v6m1-109v6m0 96.5v5m1-5.5v6m1-7.5v7m1-4v6m0 171.5v4m1-178v6m1 166v6m1-181v7m1-8v7m1-110.5v6m1 98.5v7m0 166v7m1-282.5v5m0 97v6m1-108.5v7m0 96v5m1-106v6m0 96v6m1-107.5v6m1-6v6m0 96v7m1-181.5v6m0 66.5v6m0 95.5v7m1-182v6m0 66v6m0 98.5v6m1-184v6m0 170.5v6m2-182v7m1 171v6m1-183.5v7m0 170.5v5m1-182v6m1-7v7m0 166.5v6m1-180.5v6m0 167.5v5m1-175.5v6m1-5.5v5m1-4.5v6m1-5v6m0 167v6m1-180.5v6m0 66v6m0 97v5m1-181v5m1 66.5v6m1-78.5v6m0 168.5v5m1-180v6m0 66.5v5m1-77.5v7m2-7.5v6m1-5.5v5m1-6v6m1-6v6m1-5.5v5m0 166.5v7m1-178.5v7m0 164.5v7m1-175.5v5m1-3.5v5m0 168v6m1-180v6m0 166.5v5m3-174v5m1-522v7m0 682.5v5m1-7.5v7m1-8v7m1-10v7m1-7.5v7m1-105.5v6m0 93v5m1-6v6m1-179.5v5m0 68v6m0 95v6m1-181.5v6m0 168v7m1-181v6m0 68v6m0 96.5v5m1-179v5m0 68.5v6m0 95.5v6m1-180.5v7m0 68.5v6m1-5.5v5m1-80.5v6m0 67.5v6m1-9v7m1-8.5v6m1-5.5v5m3 277v4m1-284v5m1 274v5m1-4v5m1-283v5m0 96.5v5m1-4v7m1-6.5v6m1-108.5v7m1 99v5m1-107.5v5m0 97.5v7m1-181v5m0 67v6m0 95.5v6m1-181v5m0 169.5v6m1-181v7m0 65.5v5m1-78v6m2-5v6m0 67v6m1-78.5v5m0 65.5v7m1-81v7m1-9v6m0 170v6m1-183.5v6m1 169v7m1-181v5m0 170v5m1-106v6m1 93.5v5m1-179.5v5m0 343.5v6m3-354.5v7m0 65v5m1-76v5m0 166.5v6m1-104.5v5m0 96.5v5m1-177v6m0 168v6m0 168.5v6m1-350v5m0 65.5v5m1-75.5v7m0 64v7m2-6.5v7m0 272.5v5m1-353v6m0 64v7m0 271.5v5m1-356.5v7m0 65.5v6m1-79v7m1-7.5v6m0 66.5v6m1-80.5v6m0 67v7m1-81v6m0 66v6m1-79.5v5m0 65.5v7m0 271.5v5m1-354v5m1-519v7m0 507.5v5m1-522.5v7m0 509.5v5m1-6v6m1-6.5v6m0 172.5v5m0 167v7m1-355v7m1-6.5v6m1-4.5v6m1-6.5v6m1-7.5v6m0 168v5m3-177.5v7m1-6v5m1-6v5m0 67v5m1-79.5v5m1-6.5v5m1-3v6m0 343.5v5m1-354v7m0 342.5v4m1-351.5v5m0 67v7m1-79v6m1-8.5v7m1-7.5v5m1-6v5m0 345v6m1-357v6m1-4.5v6m0 343.5v4m1-354v5m13-76v6m0 67v6m1-78v6m1-8v6m4-5v7m1-1.5v6m2-7.5v6m1-9v7m1 63v6m2-77v6m1-5.5v5m12 58v6m0 65v6m1-134.5v5m1 50v5m1-61v5m1 52.5v6m0 68.5v6m1-133.5v5m0 52.5v5m1-63v5m0 53v7m1-65.5v5m0 53v7m1-66.5v6m0 53v6m1-5.5v5m1-5.5v6m1-63v5m0 53v7m1-7v7m1-9v6m0 68v5m1-133v5m0 123.5v6m1-132.5v4m0 50v7m0 65.5v7m1-133.5v5m0 50.5v5m0 66.5v5m1-78.5v6m1 167.5v7m1-184.5v7m1-5.5v7m0 168v7m1-180v7m0 66.5v5m0 95.5v7m1-180v5m1-8v7m0 65v7m0 270v7m2-185v5m1-7v6m1-6.5v6m3-0.5v7m1-234v5m0 223.5v7m1-5v5m1 172.5v4m1-411.5v6m0 399.5v6m1-413v6m1-4.5v6m1-4.5v7m0 49.5v7m1-5.5v6m1-7v6m1-10v7m1-8.5v6m0 66.5v6m1-77v5m1-4.5v5m0 66v6m1-77.5v7m0 66v5m1-76.5v6m1-6v5m0 66.5v7m1-80v6m1-4v6m0 167.5v6m1-180.5v5m0 170.5v6m1-7.5v7m1-8v7m2-180v5m0 170.5v7m2-180v5m0 168v7m1-7.5v6m1-181v6m1 166v7m1-176v5m0 64.5v6m0 95v6m1-105v6m1-75v5m0 66v7m0 95v7m1-181.5v6m0 67v5m1 95.5v6m0 167v6m1-356.5v6m0 69v5m0 97v7m1-183.5v6m0 344v6m1-355v5m0 67.5v6m1-78.5v6m0 67.5v5m0 271.5v6m1-355v6m0 343v5m1-353.5v5m0 343.5v6m1-355v6m1-5.5v7m1 62.5v6m1-5.5v6m4-2v7m7-137.5v5m1-4.5v5m2-5.5v5m0 123.5v6m1-135v6m1-6v6m0 122v6m1-133v5m1 123v7m0 94.5v7m1-235.5v6m0 124v5m1-2v5m2-137v6m1-7.5v6m1 224.5v5m0 169v6m1-181v5m1-234v4m0 223.5v7m0 170.5v6m1-183.5v7m0 170v5m1-181.5v7m1-8v6m1-5v5m1-105.5v5m0 273v4m1-281v5m0 95.5v5m1-4.5v6m1-106v6m0 93v7m1-3.5v6m1-106.5v5m0 98.5v5m1-109v6m0 98v5m1-7.5v7m1-111v6m0 95.5v7m2-8.5v6m1-107.5v7m0 96v5m1-106.5v7m0 98v6m1-111v6m0 96v7m1-109.5v6m0 96.5v6m1-109v7m0 96v5m1-4.5v6m1-108v5m0 97v7m0 170v6m1-284v6m0 97v6m1-107v6m1-80v5m0 70v6m1-79v6m0 68.5v6m1-77v6m0 66.5v7m0 268.5v6m1-354v5m0 68v6m1-8.5v6m0 270.5v5m1-285v6m1-79.5v5m1-3v6m0 65v6m0 271.5v6m1-5v6m1-410v6m1 48.5v7m0 66v6m0 270.5v6m2-283.5v6m3-4.5v5m0 272v4m1-282.5v6m0 272v5m1-283.5v6m0 273v4m1-283v6m0 271v5m1-281v6m2-83.5v6m0 66.5v6m1-8v7m0 94.5v7m1-106v6m0 94v5m1-3.5v6m1-106v6m0 95.5v6m1-6v5m1-8v5m1-107v5m2-4v5m0 95v6m2-103v7m0 94v7m2-6v7m2-7.5v6m1-8.5v7m1-6v7m1-6v5m2-4.5v7m9-111v6m1-78.5v6m1-6v6m0 68v7m1-82v6m0 67.5v6m1-80v5m0 68.5v5m1-79.5v6m0 67.5v7m1-79.5v6m0 70v6m1-79v7m0 66.5v6m1-78v6m0 66v7m1-80v5m0 68v6m1-82v6m0 68.5v5m1-79.5v6m0 66.5v7m1-79v7m1-4.5v5m1-4v6m0 66.5v6m1-79.5v7m3 62v6m1-5v5m1 98v6m2-5v5m1-5.5v7m1-107.5v6m1-5v6m1-5.5v6m0 94.5v5m1-106v5m1-5v6m3-131.5v5m2-9.5v6m17 218.5v5m2-3.5v6m5-5.5v6m1-7v6m16-232.5v7m2-6.5v6m1 225v6m4-182.5v7m1-8.5v6m0 169v6m3-175.5v6m2-6v5m1-7.5v7m1 66.5v6m1-6v6m1-5v5m4-137v6m0 126.5v6m0 94v7m1-239v5m0 125.5v7m0 94v6m1-107v5m1-136v6m1 122.5v6m0 96.5v6m2-104v5m1-133.5v6m1-6.5v6m0 50.5v7m0 66v5m1-78.5v6m0 65.5v7m1-135.5v6m0 50v7m0 168v6m1-237v5m0 122v7m0 96v6m2-234.5v7m1-6.5v6m0 51v7m1-63.5v5m1-5.5v5m0 402v4m1-410v5m1-5.5v6m1-5v5m1-3v5m18-30.5v7m2-5.5v8m1-7v8m1-7v8m1-7.5v7m5-15.5v8m4-4v7m2-7.5v7m1-8.5v8m6-3v7m1-9v8m0 67v6m1-83v7m0 68.5v5m1-3v5m1-5v5m1-74v6m1-168.5v6m0 26v5m0 25.5v7m0 91.5v7m1-165.5v5m0 27v6m0 119.5v7m0 215v7m1-384v6m0 26.5v6m0 26v6m0 310.5v6m1-385.5v6m0 23.5v7m0 345v5m1-355.5v6m1-4.5v5m0 27.5v6m1-71v7m0 25v6m0 29v5m1-71.5v6m0 25.5v6m0 28v7m0 308v6m1-386v5m0 27v5m0 28.5v6m0 309v6m1-388v6m0 27.5v5m0 27.5v6m0 310v5m1-355.5v7m0 25v6m1-35.5v6m0 26v6m0 312v6m1-385.5v5m0 24.5v7m0 27v6m1-67v5m0 25v5m1-4v5m0 28v6m1-7v6m2-7v6m1-38.5v6m0 29v5m1-37v6m0 27.5v5m1-5v6m1-7v5m1-3.5v7m1-39v5m0 28.5v5m10-68v6m2-7v6m1-3.5v6m0 22v7m0 28v6m1-6.5v6m1-69v7m0 21v6m0 28v7m1-69.5v6m1-7v6m0 58v6m1-41v6m0 28v6m1-70.5v6m0 57v6m2-5v7m1-71v5m0 60v6m1-36v7m0 26v5m1-68.5v6m0 60v7m1-4v6m1-41.5v6m0 30v5m1-70.5v5m0 24v5m1-37v7m0 24.5v5m1-38v6m0 25.5v6m0 25.5v7m1-40.5v6m0 341.5v6m1-354.5v6m0 27.5v6m0 309v7m1-358v6m0 27v5m0 311v6m1-356.5v5m0 29.5v6m0 308.5v6m1-354.5v6m0 28v6m0 308.5v6m1-354.5v6m0 344.5v5m1-322v6m1-42.5v7m0 342.5v6m1-358.5v6m0 344v6m1-4.5v5m1-354v5m0 345v7m1-1.5v5m1-354.5v7m0 342.5v7m1-355.5v7m0 343v6m1-6v7m2-351v7m0 342.5v5m1-353v5m2 343v7m1-359v6m0 346v5m1-5v7m3-387v5m0 26v7m2-11v5m1-34v5m1 21v7m0 346v5m1-356.5v5m1-32.5v6m0 370.5v7m2-353.5v7m0 341v6m1-352.5v5m0 346v6m1-355v7m1-36.5v7m0 23.5v5m1-6v6m1-35.5v5m1-6v7m2-6v7m0 22.5v6m1-34.5v6m0 22.5v7m1-7.5v7m1-37v7m0 23v6m1-35.5v6m0 23v6m1-35v7m0 21.5v6m1-35v7m0 21v6m1-6.5v5m1-7v6m1-6v6m2-3.5v5m1-7v5m0 344.5v6m1-8.5v6m1-387.5v5m2 371v6m1-384v7m0 372v5m1-1v6m1-2.5v5m1-3.5v7m1-383.5v5m0 57.5v6m0 310.5v6m2-319v7m0 307v6m1-355v7m0 27.5v5m0 308v6m1-321.5v6m1-70v5m1-4v6m1-5v7m1 22.5v7m1-37.5v5m0 25.5v7m1-38v5m0 25v7m1-8v6m1-6.5v6m1-38.5v7m0 25v5m1-38.5v5m0 26v7m1-39.5v7m0 25v6m1-37.5v5m0 25.5v5m1-3.5v7m1-33.5v5m0 25.5v6m1-34.5v6m0 23v7m0 28.5v7m0 308v7m1-358v6m0 344.5v7m1-388v6m0 24v7m0 343.5v6m1-356.5v7m0 28.5v5m0 311.5v5m1-355v5m0 29v5m0 311v5m1-383.5v6m0 23v7m0 27v6m0 312v6m1-386.5v7m0 22.5v7m0 27v7m0 313v5m1-387v6m0 58v6m0 311v6m1-387.5v6m0 58.5v6m0 310v7m1-386v6m0 374v7m1-385v5m0 59v6m1-71.5v7m0 57v6m1-72v5m1 21v7m0 26v7m1-40.5v5m0 27v7m1-38.5v7m0 27v7m1-5v5m2-6v7m1-7.5v7m1-7.5v6m1-6v5m1-5v6m3 308.5v7m1-7.5v7m1-8v7m3-11v6m1-6.5v7m1-5v7m1-3.5v7m1-2.5v5m1-4v6m1-383v6m0 373v6m1-384.5v5m0 375.5v7m0 166.5v6m1-559v5m0 376v6m0 167v6m1-558v5m0 373v7m1-385v7m0 373v7m1-389v6m0 373v6m0 169v6m1-184v7m1-8v6m1-5.5v5m2-8.5v5m0 169.5v5m3-563.5v6m1 374.5v6m1 172.5v6m2-180.5v7m2-351.5v5m1 29.5v5m1-41.5v6m1-7v6m1 29v5m2-5v6m4-44.5v7m1-4.5v5m1-5v5m1-6.5v7m1-6.5v5m1-2v5m0 28.5v5m1-37.5v5m1-1.5v5m1-3v7m0 28v7m2-72.5v5m0 25.5v6m1-39v7m1 21v6m1-37v7m0 23v6m1-8v7m0 341.5v6m1-354.5v6m1-35.5v6m0 22.5v5m0 343.5v6m1-383v6m2 372.5v5m1-7v6m7-379.5v5m1 371v7m1-6v7m8-352.5v7m1-7.5v6m1-8v6m0 28v6m1-39.5v7m1-5v6m1-4v6m0 27.5v5m1-35.5v6m1-5.5v7m0 26.5v6m1-44.5v7m1-10.5v7m5 16.5v7m1 310v7m4-352.5v6m0 346.5v5m1-358v6m4-34.5v6m1 26v7m1-38.5v7m2-5.5v5m1-7v7m1 22.5v6m1-38v7m1-4v7m1 22.5v7m1-32v7m1-7.5v6m0 373v5m1-385.5v7m0 25v5m1 341.5v7m1-384.5v6m0 25.5v6m0 342.5v5m1-351v6m0 341v5m1-353v6m0 343v6m1-380v5m0 371.5v5m1-381v5m0 21.5v7m0 344.5v7m1-2.5v5m1-382v5m0 376v5m1-384.5v6m0 21.5v7m1-37.5v6m0 23v5m1-37.5v6m0 23v5m2-8.5v6m2-4.5v5m0 28.5v6m1-41.5v7m1-8v7m0 28.5v7m1-44v7m0 29v6m1-40.5v7m0 27.5v5m1-6v7m1-40.5v5m0 28.5v5m0 488.5v4m1-532.5v7m0 26.5v7m0 485v6m1-531.5v6m0 25v7m0 59v5m1-100.5v5m0 89v6m0 103.5v5m1-176.5v7m0 162v6m1-206.5v7m0 26.5v7m0 51v6m1-6.5v5m0 104.5v5m1-113.5v6m0 100v7m7-4.5v5m2-111v4m1-4.5v4m1 37.5v5m0 58.5v5m1-112v5m10 18v6m3-3.5v6m4-32v6m4 0v5m0 101.5v5m1-1v5m1-3.5v5m4-102v5m5 91v5m4-9v7m1-92v6m1 84.5v6m4-74.5v5m2-9.5v5m8 61v5m1-117v7m0 101v6m2-76v6m2-24.5v5m0 84v6m2-71.5v6m2-6.5v6m8-45v6m1-7.5v5m1-5.5v6m11 16v5m2-25.5v6m1-6.5v5m1 16.5v6m3 14v5m2-4v6m2 65v6m3-77v5m0 61v6m2-7.5v5m1-8v5m2-3v5m2 0v5m1-115v7m3 97.5v6m5-114v4m1 104v6m1-117.5v5m4 1.5v6m9 93v7m2-4.5v6m2-1v6" opacity="1"/></g><g fill="none" stroke="url(#hue)" stroke-width="2.6"><path d="M675 336h5M688 741.5h6M688 746.5h11M680 785h15M694 758.5h8M694 729h11M684 747.5h9M710 921h12M697 949h7M686 932.5h9M692 876.5h8M706 812.5h10M687 822.5h12M708 939.5h10M702 949h7M689 875.5h5M711 822h12M686 825.5h9M693 957.5h6M685 808.5h13M677 599.5h10M673 692h13M665 585h9M682 660h10M683 564h7M676 636.5h14M692 578h6M684 568h16M696 681h11M1014 809h8M1005 950h11M1019 920.5h8M1034 852.5h13M1041 722h14M1032 907.5h16M1026 914.5h13M1029 864h16M1033 840h15M1025 754h10M1042 830.5h8M1021 955h15M1030 945h16M1039 718h7M1025 817h13M1005 681.5h10M1038 516h13M1011 692h8M1001 529h7M1025 593h7M1036 686h13M1027 661.5h13M1024 600.5h11M1005 561.5h12M1008 505.5h5M1014 487.5h12M1026 617h7M1000 612h13M1386 887h10M1329 931.5h11M1322 708h12M1366 953.5h8M1451 704h7M1454 919.5h7M1442 774h9M1393 959h6M1416 775h7M1329 997h14M1324 719h6M1374 975h6M1469 870h6M1372 835h13M1404 933.5h14M1432 693.5h6M1367 867h14M1330 816.5h10M1434 888h13M1369 727h7M1375 969.5h8M1436 844.5h12M1421 876h11M1341 822.5h10M1420 800h14M1328 935h11M1457 694h11M1352 895.5h13M1456 748.5h14M1462 831h6M1410 780.5h10M1478 882h4M1400 838h7M1343 708.5h8M1348 903h9M1417 923.5h10M1419 823h15M1396 941.5h7M1347 718h8M1383 716h15M1397 978.5h10M1382 732h14M1353 820.5h12M1460 926h16M1348 746.5h14M1350 889.5h16M1393 802h14M1409 834h16M1370 760h9M1375 822h14M1395 933.5h15M1472 912h10M1377 713.5h10M1356 889h15M1365 795.5h10M1350 756h9M1468 891h14M1364 944h7M1449 796.5h6M1343 871.5h6M1341 849.5h12M1416 893.5h9M1324 806.5h12M1445 954.5h6M1367 715h13M1417 781.5h12M1383 918h15M1366 787.5h8M1423 756.5h12M1446 806.5h15M1460 941h6M1329 787h15M1390 735h8M1420 811h6M1356 813h6M1370 986.5h5M1452 903.5h7M1351 953h13M1375 923.5h13M1346 770.5h12M1331 941.5h16M1330 814.5h8M1426 944.5h10M1473 787h9M1404 782h5M1449 776h13M1394 812.5h12M1463 875.5h14M1473 975.5h9M1452 729.5h14M1456 814.5h8M1384 951.5h13M1392 545h11M1366 534.5h11M1363 586.5h6M1465 510h15M1404 601h12M1365 508.5h10M1429 633h7M1364 599.5h12M1356 509.5h10M1455 693h12M1437 662h13M1400 674.5h14M1478 563.5h4M1430 667h15M1403 481.5h12M1397 453h14M1450 324h5M1444 364h7M335 625h10M333 588.5h5M328 618h8M315 580.5h14M323 584.5h14M331 650.5h14M312 785.5h5M335 906h9M334 952.5h11M317 835h15M331 757h13M328 794h10M313 873.5h11M1263 702h11M816 942h9M998 747.5h12M504 935.5h10M850 723.5h15M811 732.5h13M1293 710.5h9M707 738h15M634 714.5h10M514 795.5h14M819 965h15M1249 703h11M1022 855h6M1256 841.5h5M1002 886h8M1042 964h14M996 912.5h11M1216 493h10M1170 475h9M920 513h13M835 307.5h12M655 354h10M1081 123h13M1113 227.5h9M650 134.5h6M1052 148h13M1227 467.5h15M1125 358h13" opacity="0.0625"/><path d="M665 142h7M666 150h8M665 158h8M666 166h9M671 190.6h5M670 221h4M682 326h16M676.303 336h2M1005 175.8h10M673 714.5h16M682 756.5h8M695 712.5h10M693 731h13M678 743.5h11M702 770.5h11M674 709.5h14M689 798.5h12M711 812h7M708 838.5h6M699 812h6M692 861.5h7M710 910.5h11M694 926h11M681 610h13M665 627h7M694 671.5h16M668 668h15M685 678h7M684 666.5h10M663 640.5h14M1016 939.5h7M1016 949.5h6M1040 856.5h16M1019 726h7M1014 768h5M1013 813.5h12M1037 951h5M999 957.5h10M1027 789h16M1002 739h11M1035 818h8M1018 742.5h11M1013 493.5h13M1031 528h15M1005 646.5h10M1007 501h16M999 597.5h6M1038 641h15M1016 684.5h15M1023 688.5h9M1002 666h10M1038 498h8M1468 858h14M1346 959.5h12M1335 880h8M1410 955h12M1368 952.5h6M1324 730h6M1427 728.5h8M1347 906h9M1398 867.5h13M1328 906h9M1433 729h8M1348 732.5h8M1414 876h11M1405 970.5h6M1382 779h14M1361 887h5M1456 812.5h8M1337 749h9M1411 991h8M1383 747.5h16M1358 812h6M1468 733h14M1431 849h9M1431 900.5h8M1386 720h12M1476 901h6M1325 890.5h10M1342 954h13M1351 744h15M1442 722.5h13M1352 909h14M1378 951h8M1435 827h5M1454 778h11M1366 786.5h12M1454 775.5h10M1390 722.5h13M1380 938.5h13M1450 985h7M1322 821.5h6M1387 777h14M1331 904.5h14M1449 782.5h14M1366 701.5h6M1462 811h10M1386 859h13M1336 804.5h14M1417 856h16M1385 784.5h14M1408 935h7M1477 835.5h5M1364 694h8M1454 691h10M1392 925h6M1404 812.5h16M1477 965h5M1439 768.5h11M1372 704.5h7M1474 852h8M1379 860h8M1404 916h8M1376 932h15M1370 842.5h14M1434 752.5h10M1382 695h10M1470 694.5h7M1436 626h10M1409 520h14M1426 538.5h10M1447 536.5h9M1468 631h11M1478 586h4M1425 627.5h10M1423 610h9M1340 625.5h15M1458 621h15M1378 616h5M1433 639h5M1452 665h8M1415 637.5h15M1435 677h8M1476 512.5h6M1402 685h8M1353 515.5h11M1479 493.5h3M1404 477h9M1440 492.5h7M1399 453.5h14M1436 413h16M1448 411h15M1347 367.5h5M335 612h12M339 678.5h14M333 647.5h14M319 559.5h8M329 657.5h15M326 590h14M329 645.5h11M315 781h7M330 772.5h15M326 943h11M323 941.5h11M744 776.5h5M790 726.5h12M915 756.5h6M587 740h5M589 817.5h12M1144 944h14M1273 961h10M476 858h8M465 729h5M348 839.5h8M1252 839.5h5M618 813h15M1109 783h15M1176 981.5h9M1249 202.5h12M1313 498h11M1121 234.5h9M792 324.5h13M1111 261h6M693 131h13M399 234h13M1264 426h12M722 500h11M1266 472h12M481 259h14M670 396.5h9M614 502h7M1313 474.5h6M534 379.5h12M322 698.5h8M323 700h9M321 690h9" opacity="0.125"/><path d="M671 208h6M673 244h10M675 280h7M1006 188.7h11M1006 213h12M1007 218h12M1006 226h11M706 738.5h9M693 731h9M674 752.5h15M713 811.5h9M702 870.5h11M688 802h6M690 901.5h12M707 839h11M664 675.5h8M678 574h14M672 654h6M696 642h6M699 581.5h10M1012 769.5h12M1005 711.5h12M1009 869h9M1005 940.5h7M1018 949.5h12M1013 792.5h16M1026 894h10M1002 787.5h10M999 939h14M1031 879h11M1022 875.5h12M1009 819h12M1042 760.5h15M1005 678h16M1021 530.5h8M999 699.5h10M1023 507.5h13M1381 772.5h15M1433 706h11M1474 948.5h8M1373 918h7M1344 753.5h6M1450 901.5h7M1385 976.5h12M1430 844h10M1470 721h9M1453 778.5h10M1373 772.5h7M1390 735h7M1392 868h6M1450 808.5h10M1376 839.5h9M1352 720h12M1325 852.5h5M1331 790.5h6M1356 924h7M1476 715.5h6M1350 690.5h12M1448 946h8M1387 965.5h13M1452 787h13M1354 885h11M1479 992.5h3M1462 953h12M1395 957.5h15M1366 956.5h14M1372 750.5h5M1328 796.5h16M1384 765.5h10M1324 809h13M1361 863.5h7M1339 830h15M1419 978.5h12M1423 744h6M1355 712.5h10M1373 852h11M1362 780h7M1335 917h14M1448 815.5h11M1456 981.5h8M1422 854h9M1420 685h8M1351 664h12M1409 619h16M1469 537h6M1362 658.5h7M1371 501h11M1410 529h10M1347 644.5h14M1423 547h13M1348 558.5h15M1442 509.5h6M1364 651.5h12M1381 600.5h13M1442 395h10M1441 342.5h14M1437 300h12M326 763.5h11M335 771.5h6M557 750.5h16M887 835.5h6M781 840h8M748 700.5h8M320 646.5h6M325 657h8M314 673.5h7" opacity="0.188"/><path d="M667 133.6h18M667.711 142.5h2.8M668.8 150h3.2M672 247.7h9M675 253.4h17M677 274.3h15M1007.58 175.3h4M1006 233h15M1007 247h16M1005 253.7h22M701 784.5h15M694 846.5h11M693 826h6M702 877h10M698 908h5M690 801h6M698 624.5h14M694 603h11M676 664h7M685 621.5h7M683 575h5M1018 820h9M1030 703.5h8M1040 708.5h14M1020 918h12M1027 717h6M1035 839h11M1022 774h13M1023 943.5h10M1035 912h7M1037 798.5h7M1027 863h8M1025 950h16M1011 808.5h6M1033 557.5h8M1012 663h5M1039 694h9M1021 685.5h13M1010 607.5h12M1007 575h13M1027 513h14M1034 487h8M1030 631.5h10M1344 833.5h13M1351 732h9M1433 809h6M1439 987.5h12M1415 938.5h15M1416 861.5h13M1450 870h9M1419 697h12M1462 890h7M1418 716.5h8M1464 929.5h5M1436 820.5h16M1409 704.5h8M1481 978h1M1474 809.5h8M1330 860.5h12M1361 859.5h7M1354 946.5h9M1461 724h8M1445 791.5h6M1449 879h14M1420 858.5h8M1392 940.5h6M1336 692.5h7M1388 865h10M1403 873h8M1470 913.5h6M1366 950.5h12M1404 879.5h5M1362 990.5h9M1405 871.5h14M1457 667h7M1398 657h10M1408 508h9M1405 572.5h11M1467 595.5h6M320 667.5h14M335 644h13M313 698h10M330 857h10M334 661.5h8M332 643.5h4M336 641.5h7M325 665.5h5M318 683h8" opacity="0.25"/><path d="M666.956 158.5h3.2M668.822 165.5h3.6M663.6 177h13.4M672.096 190.6h2M677 201h10M671.096 221.5h1.6M671 232h9M672 240h18M680 259.4h12M686.629 326h6.4M670 767h12M680 767.5h12M668 738h10M703 863.5h9M690 846.5h11M711 933h12M691 888.5h13M701 898.5h7M687 906.5h8M1019 955.5h12M1019 926h15M1007 829h11M1024 736.5h6M1033 747.5h11M1039 910.5h16M1006 956h6M1037 796.5h14M1445 736h8M1450 924h13M1381 977h9M1322 786h15M1442 736.5h14M1437 772.5h16M1358 996h5M1324 944.5h7M1459 786h7M1449 893h12M1385 955h13M1379 864.5h15M1352 935h6M1413 896.5h12M1441 939.5h11M1374 869.5h6M1330 731.5h13M315 567h14M309 622.5h10M1390 966h30M1440 968h30M1410 800h30M1400 822h30" opacity="0.312"/><path d="M673.283 207.5h2.4M676.371 243.5h4M676.17 280h2.8M1010.14 188.7h4.4M1005 207h18M1007.82 212.5h4.8M1010.14 217.5h4.8M1008.06 226h4.4M696 774.5h7M713 868.5h8M697 905h5M704 942.5h10M702 865h9M704 885.5h9M710 796h9M1032 751h6M331 662h7M316 643.5h7M334 663h5M1400 742h20M1325 905h13M1360 968h20M1340 800h20M1370 797h25M1335 812h15M1355 818h25" opacity="0.375"/><path d="M671.538 133.1h7.2M681.292 273.8h6M1005 242.5h21M1013.13 253.7h8.8M687 889h13M706 913.5h7M323 640.5h7M331 653h4M1445 752h37M1425 771h15M1322 915h18" opacity="0.438"/><path d="M673.557 247.2h3.6M1008.38 233h6M1012.79 247h6.4M319 655.5h11M327 667.5h9M1400 766h16M1318 946h18" opacity="0.5"/><path d="M679.655 253.4h6.8M334 656h9M330 665.5h6M1360 767h16M1380 770h18M1326 940h19" opacity="0.562"/><path d="M667.447 177h5.36M680.643 201h4M673.461 232.5h3.6M674.747 239.5h7.2M683.466 258.9h4.8M1452 748h18M1316 934h14" opacity="0.625"/><path d="M1437 745h13" opacity="0.688"/><path d="M1010.55 207h7.2" opacity="0.812"/><path d="M1009.19 243h8.4" opacity="0.875"/></g>
<g transform="scale(0.8,1)" font-family="Liberation Sans, DejaVu Sans, sans-serif" font-size="11" fill="#00cf00">
<text y="994.0"><tspan x="389.1">D</tspan><tspan x="398.8" font-family="DejaVu Sans, sans-serif" font-weight="bold" font-size="14" stroke="#00dc00" stroke-width="0.35">♭</tspan><tspan x="410.8">2</tspan></text>
<text x="389.1" y="979.4">D2</text>
<text y="964.8"><tspan x="389.1">E</tspan><tspan x="398.8" font-family="DejaVu Sans, sans-serif" font-weight="bold" font-size="14" stroke="#00dc00" stroke-width="0.35">♭</tspan><tspan x="410.8">2</tspan></text>
<text x="389.1" y="950.3">E2</text>
<text x="389.1" y="935.7">F2</text>
<text y="921.1"><tspan x="389.1">G</tspan><tspan x="398.8" font-family="DejaVu Sans, sans-serif" font-weight="bold" font-size="14" stroke="#00dc00" stroke-width="0.35">♭</tspan><tspan x="410.8">2</tspan></text>
<text x="389.1" y="906.5">G2</text>
<text y="892.0"><tspan x="389.1">A</tspan><tspan x="398.8" font-family="DejaVu Sans, sans-serif" font-weight="bold" font-size="14" stroke="#00dc00" stroke-width="0.35">♭</tspan><tspan x="410.8">2</tspan></text>
<text x="389.1" y="877.4">A2</text>
<text y="862.8"><tspan x="389.1">B</tspan><tspan x="398.8" font-family="DejaVu Sans, sans-serif" font-weight="bold" font-size="14" stroke="#00dc00" stroke-width="0.35">♭</tspan><tspan x="410.8">2</tspan></text>
<text x="389.1" y="848.3">B2</text>
<text x="389.1" y="833.7">C3</text>
<text y="819.1"><tspan x="389.1">D</tspan><tspan x="398.8" font-family="DejaVu Sans, sans-serif" font-weight="bold" font-size="14" stroke="#00dc00" stroke-width="0.35">♭</tspan><tspan x="410.8">3</tspan></text>
<text x="389.1" y="804.5">D3</text>
<text y="790.0"><tspan x="389.1">E</tspan><tspan x="398.8" font-family="DejaVu Sans, sans-serif" font-weight="bold" font-size="14" stroke="#00dc00" stroke-width="0.35">♭</tspan><tspan x="410.8">3</tspan></text>
<text x="389.1" y="775.4">E3</text>
<text x="389.1" y="760.8">F3</text>
<text y="746.3"><tspan x="389.1">G</tspan><tspan x="398.8" font-family="DejaVu Sans, sans-serif" font-weight="bold" font-size="14" stroke="#00dc00" stroke-width="0.35">♭</tspan><tspan x="410.8">3</tspan></text>
<text x="389.1" y="731.7">G3</text>
<text y="717.1"><tspan x="389.1">A</tspan><tspan x="398.8" font-family="DejaVu Sans, sans-serif" font-weight="bold" font-size="14" stroke="#00dc00" stroke-width="0.35">♭</tspan><tspan x="410.8">3</tspan></text>
<text x="389.1" y="702.6">A3</text>
<text y="688.0"><tspan x="389.1">B</tspan><tspan x="398.8" font-family="DejaVu Sans, sans-serif" font-weight="bold" font-size="14" stroke="#00dc00" stroke-width="0.35">♭</tspan><tspan x="410.8">3</tspan></text>
<text x="389.1" y="673.4">B3</text>
<text x="389.1" y="658.8">C4</text>
<text y="644.3"><tspan x="389.1">D</tspan><tspan x="398.8" font-family="DejaVu Sans, sans-serif" font-weight="bold" font-size="14" stroke="#00dc00" stroke-width="0.35">♭</tspan><tspan x="410.8">4</tspan></text>
<text x="389.1" y="629.7">D4</text>
<text y="615.1"><tspan x="389.1">E</tspan><tspan x="398.8" font-family="DejaVu Sans, sans-serif" font-weight="bold" font-size="14" stroke="#00dc00" stroke-width="0.35">♭</tspan><tspan x="410.8">4</tspan></text>
<text x="389.1" y="600.6">E4</text>
<text x="389.1" y="586.0">F4</text>
<text y="571.4"><tspan x="389.1">G</tspan><tspan x="398.8" font-family="DejaVu Sans, sans-serif" font-weight="bold" font-size="14" stroke="#00dc00" stroke-width="0.35">♭</tspan><tspan x="410.8">4</tspan></text>
<text x="389.1" y="556.8">G4</text>
<text y="542.3"><tspan x="389.1">A</tspan><tspan x="398.8" font-family="DejaVu Sans, sans-serif" font-weight="bold" font-size="14" stroke="#00dc00" stroke-width="0.35">♭</tspan><tspan x="410.8">4</tspan></text>
<text x="389.1" y="527.7">A4</text>
<text y="513.1"><tspan x="389.1">B</tspan><tspan x="398.8" font-family="DejaVu Sans, sans-serif" font-weight="bold" font-size="14" stroke="#00dc00" stroke-width="0.35">♭</tspan><tspan x="410.8">4</tspan></text>
<text x="389.1" y="498.6">B4</text>
<text x="389.1" y="484.0">C5</text>
<text y="469.4"><tspan x="389.1">D</tspan><tspan x="398.8" font-family="DejaVu Sans, sans-serif" font-weight="bold" font-size="14" stroke="#00dc00" stroke-width="0.35">♭</tspan><tspan x="410.8">5</tspan></text>
<text x="389.1" y="454.8">D5</text>
<text y="440.3"><tspan x="389.1">E</tspan><tspan x="398.8" font-family="DejaVu Sans, sans-serif" font-weight="bold" font-size="14" stroke="#00dc00" stroke-width="0.35">♭</tspan><tspan x="410.8">5</tspan></text>
<text x="389.1" y="425.7">E5</text>
<text x="389.1" y="411.1">F5</text>
<text y="396.6"><tspan x="389.1">G</tspan><tspan x="398.8" font-family="DejaVu Sans, sans-serif" font-weight="bold" font-size="14" stroke="#00dc00" stroke-width="0.35">♭</tspan><tspan x="410.8">5</tspan></text>
<text x="389.1" y="382.0">G5</text>
<text y="367.4"><tspan x="389.1">A</tspan><tspan x="398.8" font-family="DejaVu Sans, sans-serif" font-weight="bold" font-size="14" stroke="#00dc00" stroke-width="0.35">♭</tspan><tspan x="410.8">5</tspan></text>
<text x="389.1" y="352.8">A5</text>
<text y="338.3"><tspan x="389.1">B</tspan><tspan x="398.8" font-family="DejaVu Sans, sans-serif" font-weight="bold" font-size="14" stroke="#00dc00" stroke-width="0.35">♭</tspan><tspan x="410.8">5</tspan></text>
<text x="389.1" y="323.7">B5</text>
<text x="389.1" y="309.1">C6</text>
<text y="294.6"><tspan x="389.1">D</tspan><tspan x="398.8" font-family="DejaVu Sans, sans-serif" font-weight="bold" font-size="14" stroke="#00dc00" stroke-width="0.35">♭</tspan><tspan x="410.8">6</tspan></text>
<text x="389.1" y="280.0">D6</text>
<text y="265.4"><tspan x="389.1">E</tspan><tspan x="398.8" font-family="DejaVu Sans, sans-serif" font-weight="bold" font-size="14" stroke="#00dc00" stroke-width="0.35">♭</tspan><tspan x="410.8">6</tspan></text>
<text x="389.1" y="250.9">E6</text>
<text x="389.1" y="236.3">F6</text>
<text y="221.7"><tspan x="389.1">G</tspan><tspan x="398.8" font-family="DejaVu Sans, sans-serif" font-weight="bold" font-size="14" stroke="#00dc00" stroke-width="0.35">♭</tspan><tspan x="410.8">6</tspan></text>
<text x="389.1" y="207.1">G6</text>
<text y="192.6"><tspan x="389.1">A</tspan><tspan x="398.8" font-family="DejaVu Sans, sans-serif" font-weight="bold" font-size="14" stroke="#00dc00" stroke-width="0.35">♭</tspan><tspan x="410.8">6</tspan></text>
<text x="389.1" y="178.0">A6</text>
<text y="163.4"><tspan x="389.1">B</tspan><tspan x="398.8" font-family="DejaVu Sans, sans-serif" font-weight="bold" font-size="14" stroke="#00dc00" stroke-width="0.35">♭</tspan><tspan x="410.8">6</tspan></text>
<text x="389.1" y="148.9">B6</text>
<text x="389.1" y="134.3">C7</text>
<text y="119.7"><tspan x="389.1">D</tspan><tspan x="398.8" font-family="DejaVu Sans, sans-serif" font-weight="bold" font-size="14" stroke="#00dc00" stroke-width="0.35">♭</tspan><tspan x="410.8">7</tspan></text>
<text x="389.1" y="105.1">D7</text>
<text y="90.6"><tspan x="389.1">E</tspan><tspan x="398.8" font-family="DejaVu Sans, sans-serif" font-weight="bold" font-size="14" stroke="#00dc00" stroke-width="0.35">♭</tspan><tspan x="410.8">7</tspan></text>
<text x="389.1" y="76.0">E7</text>
<text x="389.1" y="61.4">F7</text>
<text y="46.9"><tspan x="389.1">G</tspan><tspan x="398.8" font-family="DejaVu Sans, sans-serif" font-weight="bold" font-size="14" stroke="#00dc00" stroke-width="0.35">♭</tspan><tspan x="410.8">7</tspan></text>
<text x="389.1" y="32.3">G7</text>
</g>
<g font-family="Liberation Sans, DejaVu Sans, sans-serif" fill="#fff">
<text transform="translate(312.8,45) scale(0.86,1)" font-weight="bold" font-size="12">E</text><text x="324.0" y="45" font-family="DejaVu Sans, sans-serif" font-size="15.5" stroke="#fff" stroke-width="0.8">♭</text>
<text x="329.0" y="58.8" font-size="9.6" fill="#e8e8e8" text-anchor="middle">majAdd9</text>
<text transform="translate(352.8,45) scale(0.86,1)" font-weight="bold" font-size="12">B</text><text x="364.0" y="45" font-family="DejaVu Sans, sans-serif" font-size="15.5" stroke="#fff" stroke-width="0.8">♭</text>
<text x="363.5" y="58.8" font-size="9.6" fill="#e8e8e8" text-anchor="middle">add4</text>
<text transform="translate(399.6,45) scale(0.88,1)" font-weight="bold" font-size="12">D</text>
<text x="403.5" y="58.8" font-size="9.6" fill="#e8e8e8" text-anchor="middle">maj</text>
<text transform="translate(432.8,45) scale(0.86,1)" font-weight="bold" font-size="12">E</text><text x="444.0" y="45" font-family="DejaVu Sans, sans-serif" font-size="15.5" stroke="#fff" stroke-width="0.8">♭</text>
<text x="443.5" y="58.8" font-size="9.6" fill="#e8e8e8" text-anchor="middle">m(maj7)</text>
<text transform="translate(472.8,45) scale(0.86,1)" font-weight="bold" font-size="12">E</text><text x="484.0" y="45" font-family="DejaVu Sans, sans-serif" font-size="15.5" stroke="#fff" stroke-width="0.8">♭</text>
<text x="483.5" y="58.8" font-size="9.6" fill="#e8e8e8" text-anchor="middle">m(maj9)</text>
<text transform="translate(512.8,45) scale(0.86,1)" font-weight="bold" font-size="12">E</text><text x="524.0" y="45" font-family="DejaVu Sans, sans-serif" font-size="15.5" stroke="#fff" stroke-width="0.8">♭</text>
<text x="523.5" y="58.8" font-size="9.6" fill="#e8e8e8" text-anchor="middle">m(maj7)</text>
<text transform="translate(559.6,45) scale(0.88,1)" font-weight="bold" font-size="12">C</text>
<text x="563.5" y="58.8" font-size="9.6" fill="#e8e8e8" text-anchor="middle">m9(no5)</text>
<text transform="translate(592.8,45) scale(0.86,1)" font-weight="bold" font-size="12">E</text><text x="604.0" y="45" font-family="DejaVu Sans, sans-serif" font-size="15.5" stroke="#fff" stroke-width="0.8">♭</text>
<text x="603.5" y="58.8" font-size="9.6" fill="#e8e8e8" text-anchor="middle">dim</text>
<text transform="translate(639.6,45) scale(0.88,1)" font-weight="bold" font-size="12">D</text>
<text x="643.5" y="58.8" font-size="9.6" fill="#e8e8e8" text-anchor="middle">maj</text>
<text transform="translate(679.6,45) scale(0.88,1)" font-weight="bold" font-size="12">C</text>
<text x="683.5" y="58.8" font-size="9.6" fill="#e8e8e8" text-anchor="middle">m6</text>
<text transform="translate(712.8,45) scale(0.86,1)" font-weight="bold" font-size="12">E</text><text x="724.0" y="45" font-family="DejaVu Sans, sans-serif" font-size="15.5" stroke="#fff" stroke-width="0.8">♭</text>
<text x="723.5" y="58.8" font-size="9.6" fill="#e8e8e8" text-anchor="middle">maj</text>
<text transform="translate(752.8,45) scale(0.86,1)" font-weight="bold" font-size="12">E</text><text x="764.0" y="45" font-family="DejaVu Sans, sans-serif" font-size="15.5" stroke="#fff" stroke-width="0.8">♭</text>
<text x="763.5" y="58.8" font-size="9.6" fill="#e8e8e8" text-anchor="middle">maj7</text>
<text transform="translate(792.8,45) scale(0.86,1)" font-weight="bold" font-size="12">E</text><text x="804.0" y="45" font-family="DejaVu Sans, sans-serif" font-size="15.5" stroke="#fff" stroke-width="0.8">♭</text>
<text x="803.5" y="58.8" font-size="9.6" fill="#e8e8e8" text-anchor="middle">7</text>
<text transform="translate(832.8,45) scale(0.86,1)" font-weight="bold" font-size="12">E</text><text x="844.0" y="45" font-family="DejaVu Sans, sans-serif" font-size="15.5" stroke="#fff" stroke-width="0.8">♭</text>
<text x="843.5" y="58.8" font-size="9.6" fill="#e8e8e8" text-anchor="middle">maj13</text>
<text transform="translate(872.8,45) scale(0.86,1)" font-weight="bold" font-size="12">E</text><text x="884.0" y="45" font-family="DejaVu Sans, sans-serif" font-size="15.5" stroke="#fff" stroke-width="0.8">♭</text>
<text x="883.5" y="58.8" font-size="9.6" fill="#e8e8e8" text-anchor="middle">maj9</text>
<text transform="translate(912.8,45) scale(0.86,1)" font-weight="bold" font-size="12">E</text><text x="924.0" y="45" font-family="DejaVu Sans, sans-serif" font-size="15.5" stroke="#fff" stroke-width="0.8">♭</text>
<text x="923.5" y="58.8" font-size="9.6" fill="#e8e8e8" text-anchor="middle">maj9</text>
<text transform="translate(952.8,45) scale(0.86,1)" font-weight="bold" font-size="12">E</text><text x="964.0" y="45" font-family="DejaVu Sans, sans-serif" font-size="15.5" stroke="#fff" stroke-width="0.8">♭</text>
<text x="963.5" y="58.8" font-size="9.6" fill="#e8e8e8" text-anchor="middle">m(maj9)</text>
<text transform="translate(999.6,45) scale(0.88,1)" font-weight="bold" font-size="12">D</text>
<text x="1003.5" y="58.8" font-size="9.6" fill="#e8e8e8" text-anchor="middle">add4</text>
<text transform="translate(1039.9,45) scale(0.88,1)" font-weight="bold" font-size="12">E</text>
<text x="1043.5" y="58.8" font-size="9.6" fill="#e8e8e8" text-anchor="middle">maj9</text>
<text transform="translate(1072.8,45) scale(0.86,1)" font-weight="bold" font-size="12">E</text><text x="1084.0" y="45" font-family="DejaVu Sans, sans-serif" font-size="15.5" stroke="#fff" stroke-width="0.8">♭</text>
<text x="1083.5" y="58.8" font-size="9.6" fill="#e8e8e8" text-anchor="middle">7sus2</text>
<text transform="translate(1112.8,45) scale(0.86,1)" font-weight="bold" font-size="12">E</text><text x="1124.0" y="45" font-family="DejaVu Sans, sans-serif" font-size="15.5" stroke="#fff" stroke-width="0.8">♭</text>
<text x="1123.5" y="58.8" font-size="9.6" fill="#e8e8e8" text-anchor="middle">7sus2</text>
<text transform="translate(1152.8,45) scale(0.86,1)" font-weight="bold" font-size="12">E</text><text x="1164.0" y="45" font-family="DejaVu Sans, sans-serif" font-size="15.5" stroke="#fff" stroke-width="0.8">♭</text>
<text x="1163.5" y="58.8" font-size="9.6" fill="#e8e8e8" text-anchor="middle">sus2</text>
<text transform="translate(1192.8,45) scale(0.86,1)" font-weight="bold" font-size="12">D</text><text x="1204.0" y="45" font-family="DejaVu Sans, sans-serif" font-size="15.5" stroke="#fff" stroke-width="0.8">♭</text>
<text x="1203.5" y="58.8" font-size="9.6" fill="#e8e8e8" text-anchor="middle">9</text>
<text transform="translate(1239.6,45) scale(0.88,1)" font-weight="bold" font-size="12">C</text>
<text x="1243.5" y="58.8" font-size="9.6" fill="#e8e8e8" text-anchor="middle">m9(no5)</text>
<text transform="translate(1279.6,45) scale(0.88,1)" font-weight="bold" font-size="12">C</text>
<text x="1283.5" y="58.8" font-size="9.6" fill="#e8e8e8" text-anchor="middle">m9(no5)</text>
<text transform="translate(1312.8,45) scale(0.86,1)" font-weight="bold" font-size="12">B</text><text x="1324.0" y="45" font-family="DejaVu Sans, sans-serif" font-size="15.5" stroke="#fff" stroke-width="0.8">♭</text>
<text x="1323.5" y="58.8" font-size="9.6" fill="#e8e8e8" text-anchor="middle">add4</text>
<text transform="translate(1359.3,45) scale(0.88,1)" font-weight="bold" font-size="12">G</text>
<text x="1363.5" y="58.8" font-size="9.6" fill="#e8e8e8" text-anchor="middle">7sus4</text>
<text transform="translate(1399.9,45) scale(0.88,1)" font-weight="bold" font-size="12">E</text>
<text x="1403.5" y="58.8" font-size="9.6" fill="#e8e8e8" text-anchor="middle">m7(no5)</text>
<text transform="translate(1432.8,45) scale(0.86,1)" font-weight="bold" font-size="12">E</text><text x="1444.0" y="45" font-family="DejaVu Sans, sans-serif" font-size="15.5" stroke="#fff" stroke-width="0.8">♭</text>
<text x="1443.5" y="58.8" font-size="9.6" fill="#e8e8e8" text-anchor="middle">m6(no5)</text>
<text transform="translate(1472.8,45) scale(0.86,1)" font-weight="bold" font-size="12">A</text><text x="1484.0" y="45" font-family="DejaVu Sans, sans-serif" font-size="15.5" stroke="#fff" stroke-width="0.8">♭</text>
<text x="1483.5" y="58.8" font-size="9.6" fill="#e8e8e8" text-anchor="middle">6(no5)</text>
</g>
<!--CHORDS-->
</svg>
<div id="titlebar" class="abs"></div>
<svg class="abs" style="left:6.5px;top:10.5px" width="13" height="10" viewBox="0 0 13 10"><path d="M0.3 5.3 H2 L3 3.4 L4 7 L5.1 1 L6.3 9.2 L7.4 1.4 L8.4 7.2 L9.4 3.8 L10.2 5.3 H12.4" fill="none" stroke="#fff" stroke-width="1.15" stroke-linejoin="round" stroke-linecap="round"/></svg>
<div id="title" class="abs">SpectrumNotes</div>
<svg class="abs" style="left:1340px;top:0" width="142" height="30" viewBox="0 0 142 30"><g stroke="#fff" stroke-width="1" fill="none"><path d="M26 14.5 H36"/><rect x="71.5" y="9.5" width="9" height="9" rx="1"/><path d="M117 9.5 L126 18.5 M126 9.5 L117 18.5" stroke-width="1.25"/></g></svg>

<div id="left" class="abs"></div>
<!-- tabs -->
<div class="abs" style="left:0;top:84px;width:56px;height:23px;background:#f9f9f9;border:1px solid #e8e8e8;border-bottom:none;border-left:none"></div>
<div class="abs" style="left:55px;top:86px;width:50px;height:21px;background:#f2f2f2;border:1px solid #e4e4e4;border-bottom:none"></div>
<div id="tabbody" class="abs"></div>
<div class="abs" style="left:0;top:85px;width:55px;height:23px;background:#f9f9f9"></div>
<div class="abs lbl" style="left:5px;top:88px;font-size:12px;letter-spacing:-0.4px">Analysis</div>
<div class="abs lbl" style="left:60px;top:89.5px;font-size:12px;letter-spacing:-0.07px">Settings</div>

<!-- top row -->
<div class="abs lbl" id="t_bn" style="left:6px;top:38px;font-size:12.5px;letter-spacing:-0.1px">Bottom Note</div>
<div class="abs tb" style="left:88px;top:34px;width:58px;height:23px"><span>C2</span></div>
<div class="abs lbl" id="t_tn" style="left:160px;top:38px;font-size:12.5px;letter-spacing:-0.12px">Top Note</div>
<div class="abs tb" style="left:225px;top:34px;width:60px;height:23px;border-bottom:2px solid #0f62b8"><span>G7</span><i class="abs" style="left:16px;top:4px;width:1px;height:13px;background:#000"></i></div>
<div class="abs cb" style="left:3px;top:62px"></div>
<div class="abs lbl" style="left:22px;top:62px;font-size:12px;letter-spacing:-0.3px">lines</div>
<div class="abs cbon" style="left:55px;top:62px"><svg width="13" height="13" viewBox="0 0 13 13"><path d="M3.2 6.8 L5.5 9 L9.8 4.3" fill="none" stroke="#fff" stroke-width="1.1"/></svg></div>
<div class="abs lbl" style="left:74px;top:62px;font-size:12px;letter-spacing:-0.3px">flats</div>

<!-- chord -->
<div class="abs" id="dmaj" style="left:14.5px;top:119px;font-size:34px;line-height:40px;color:#111;white-space:nowrap;letter-spacing:-0.1px">Dmaj</div>
<div class="abs tb" style="left:7px;top:168px;width:284px;height:24px"><span style="left:5px;top:3px;font-size:11.5px;word-spacing:3px">D  G<small style="font-size:10.5px;-webkit-text-stroke:0.3px #222">♭</small>  A</span></div>
<div class="abs tb" style="left:7px;top:195px;width:284px;height:24px"><span id="pct" style="left:5px;top:3px;font-size:11.5px;word-spacing:3px;letter-spacing:-0.15px">D(31%) E<small style="font-size:10.5px;-webkit-text-stroke:0.3px #222">♭</small>(27%) G<small style="font-size:10.5px;-webkit-text-stroke:0.3px #222">♭</small>(12%) A(12%) B<small style="font-size:10.5px;-webkit-text-stroke:0.3px #222">♭</small>(7%) E(6%)</span></div>

<!-- histogram -->
<div class="abs" style="left:7px;top:225px;width:284px;height:69px;background:#111"></div>
<svg class="abs" style="left:7px;top:225px" width="284" height="69" viewBox="0 0 284 69">
<g fill="#4db1ff">
<rect x="2" y="39" width="21" height="16"/><rect x="25" y="27" width="21" height="28"/><rect x="48" y="23" width="21" height="32"/><rect x="71" y="33" width="21" height="22"/><rect x="94" y="45" width="21" height="10"/><rect x="117" y="54" width="21" height="1"/><rect x="140" y="53" width="21" height="2"/>
</g>
<g fill="#d8d8d8" font-size="9" text-anchor="middle" font-family="Liberation Sans, sans-serif">
<text x="12" y="66">1</text><text x="35" y="66">2</text><text x="58.5" y="66">3</text><text x="81.5" y="66">4</text><text x="104.5" y="66">5</text><text x="127" y="66">6</text><text x="150" y="66">7</text><text x="173.5" y="66">8</text><text x="196" y="66">9</text><text x="219" y="66">10</text><text x="241.5" y="66">11</text><text x="265" y="66">12</text>
</g>
</svg>

<!-- tuner -->
<div class="abs" style="left:7px;top:300px;width:284px;height:67px;background:#000"></div>
<div class="abs" style="left:32px;top:357px;width:259px;height:10px;background:#2e2e2e;border-top:1px solid #4a4a4a"></div>
<div class="abs" style="left:32px;top:358px;width:51px;height:9px;background:#5cf03c"></div>
<div class="abs" style="left:140px;top:301px;width:2px;height:56px;background:#e00000"></div>
<div class="abs" style="left:149px;top:301px;width:1px;height:56px;background:#8a8a8a"></div>
<div class="abs" id="d2" style="left:128px;top:324.5px;font-family:'DejaVu Sans Condensed','DejaVu Sans',sans-serif;font-weight:bold;font-size:17px;line-height:20px;color:#f00000;transform:scaleX(1.13);transform-origin:0 0">D2</div>

<!-- input dropdown -->
<div class="abs dd" style="left:3px;top:373px;width:284px;height:23px"><span style="top:4px;font-size:12px;letter-spacing:-0.125px">Input: Microphone (Scarlett 2i2 USB)</span>
<svg class="abs" style="left:268px;top:7px" width="12" height="8" viewBox="0 0 12 8"><path d="M1.5 1.5 L6 6 L10.5 1.5" fill="none" stroke="#444" stroke-width="1"/></svg></div>

<!-- slider -->
<div class="abs cb" style="left:10px;top:421px;background:#fdfdfd"></div>
<div class="abs" style="left:30px;top:420px;width:264px;height:18px;background:#f1f1f1"></div>
<div class="abs" style="left:35px;top:424px;width:253px;height:4px;background:#e7e7e7;border:1px solid #d6d6d6"></div>
<div class="abs" style="left:38px;top:435px;width:248px;height:3px;background:#c8c8c8"></div>
<svg class="abs" style="left:130px;top:421px" width="8" height="11" viewBox="0 0 8 11"><path d="M1 0.5 H7 V7 L4 10.5 L1 7 Z" fill="#0b66d4"/></svg>

<!-- key -->
<div class="abs cb" style="left:10px;top:469px;background:#fdfdfd"></div>
<div class="abs lbl" style="left:29px;top:469px;font-size:12px;letter-spacing:0.03px">Auto-detect key</div>
<div class="abs lbl" style="left:11px;top:501px;font-size:12px;letter-spacing:-0.3px">Key Signature</div>
<div class="abs dd" style="left:7px;top:527px;width:121px;height:23px"><span style="top:4px;font-size:12px">Chromatic</span>
<svg class="abs" style="left:105px;top:8px" width="12" height="8" viewBox="0 0 12 8"><path d="M1.5 1.5 L6 6 L10.5 1.5" fill="none" stroke="#444" stroke-width="1"/></svg></div>
<div class="abs dd" style="left:7px;top:557px;width:121px;height:22px;background:#f6f6f6;border-color:#e2e2e2"><span style="top:3px;font-size:12px;color:#9a9a9a">Major (Ionian)</span>
<svg class="abs" style="left:105px;top:7px" width="12" height="8" viewBox="0 0 12 8"><path d="M1.5 1.5 L6 6 L10.5 1.5" fill="none" stroke="#b0b0b0" stroke-width="1"/></svg></div>

<!-- legend -->
<div class="abs" style="left:161px;top:490px;width:130px;height:154px;background:#000"></div>
<svg class="abs" style="left:161px;top:490px" width="130" height="154" viewBox="0 0 130 154" font-family="Liberation Sans, DejaVu Sans, sans-serif" font-weight="bold" font-size="11" fill="#fff">
<rect x="6" y="3.0" width="23" height="7" fill="#9a35f5"/>
<text x="36" y="10.1">B</text>
<rect x="6" y="15.8" width="23" height="7" fill="#6a66f0"/>
<text x="36" y="22.9">B<tspan dx="3.5" font-family="DejaVu Sans, sans-serif" font-size="14.5" stroke="#fff" stroke-width="0.7">♭</tspan></text>
<rect x="6" y="28.7" width="23" height="7" fill="#3a95f5"/>
<text x="36" y="35.8">A</text>
<rect x="6" y="41.5" width="23" height="7" fill="#10f0f0"/>
<text x="36" y="48.6">A<tspan dx="3.5" font-family="DejaVu Sans, sans-serif" font-size="14.5" stroke="#fff" stroke-width="0.7">♭</tspan></text>
<rect x="6" y="54.3" width="23" height="7" fill="#10f088"/>
<text x="36" y="61.4">G</text>
<rect x="6" y="67.2" width="23" height="7" fill="#10f010"/>
<text x="36" y="74.2">G<tspan dx="3.5" font-family="DejaVu Sans, sans-serif" font-size="14.5" stroke="#fff" stroke-width="0.7">♭</tspan></text>
<rect x="6" y="80.0" width="23" height="7" fill="#88f010"/>
<text x="36" y="87.1">F</text>
<rect x="6" y="92.8" width="23" height="7" fill="#f0f010"/>
<text x="36" y="99.9">E</text>
<rect x="6" y="105.6" width="23" height="7" fill="#f08808"/>
<text x="36" y="112.7">E<tspan dx="3.5" font-family="DejaVu Sans, sans-serif" font-size="14.5" stroke="#fff" stroke-width="0.7">♭</tspan></text>
<rect x="6" y="118.5" width="23" height="7" fill="#f00808"/>
<text x="36" y="125.6">D</text>
<rect x="6" y="131.3" width="23" height="7" fill="#f00878"/>
<text x="36" y="138.4">D<tspan dx="3.5" font-family="DejaVu Sans, sans-serif" font-size="14.5" stroke="#fff" stroke-width="0.7">♭</tspan></text>
<rect x="6" y="144.1" width="23" height="7" fill="#f010e8"/>
<text x="36" y="151.2">C</text>
</svg>

<div class="abs lbl" style="left:13px;top:983px;font-size:12px;letter-spacing:0.06px">development@erikmartin.com</div>
<svg class="abs" style="left:0;top:0" width="1482" height="1007" viewBox="0 0 1482 1007"><g stroke="#fff200" fill="#fff200"><path d="M708.3 119.4 L268 246.5" stroke-width="10" stroke-linecap="round" fill="none"/><path d="M226.8 257.6 L263.2 229.8 L272.5 263.2 Z" stroke="none"/><path d="M396 366.2 L281.5 342.5" stroke-width="10" stroke-linecap="round" fill="none"/><path d="M240.3 334.5 L285 325.6 L277.9 359.3 Z" stroke="none"/></g></svg>
<div class="abs ann" style="left:724.9px;top:87px;transform:scaleX(1.055)">See voice harmonics:</div>
<div class="abs ann" style="left:365.6px;top:235px;transform:scaleX(1.063)">&quot;eeeeee&quot;</div>
<div class="abs ann" style="left:731.75px;top:225.7px;transform:scaleX(1.1)">&quot;oooooo&quot;</div>
<div class="abs ann" style="left:1038px;top:187.8px;transform:scaleX(1.061)">&quot;aaaaaaah&quot;</div>
<div class="abs ann" style="left:409.7px;top:354.6px;transform:scaleX(1.054)">Instrument tuner</div>
<div id="bottomline" class="abs"></div>
</body>
</html>
